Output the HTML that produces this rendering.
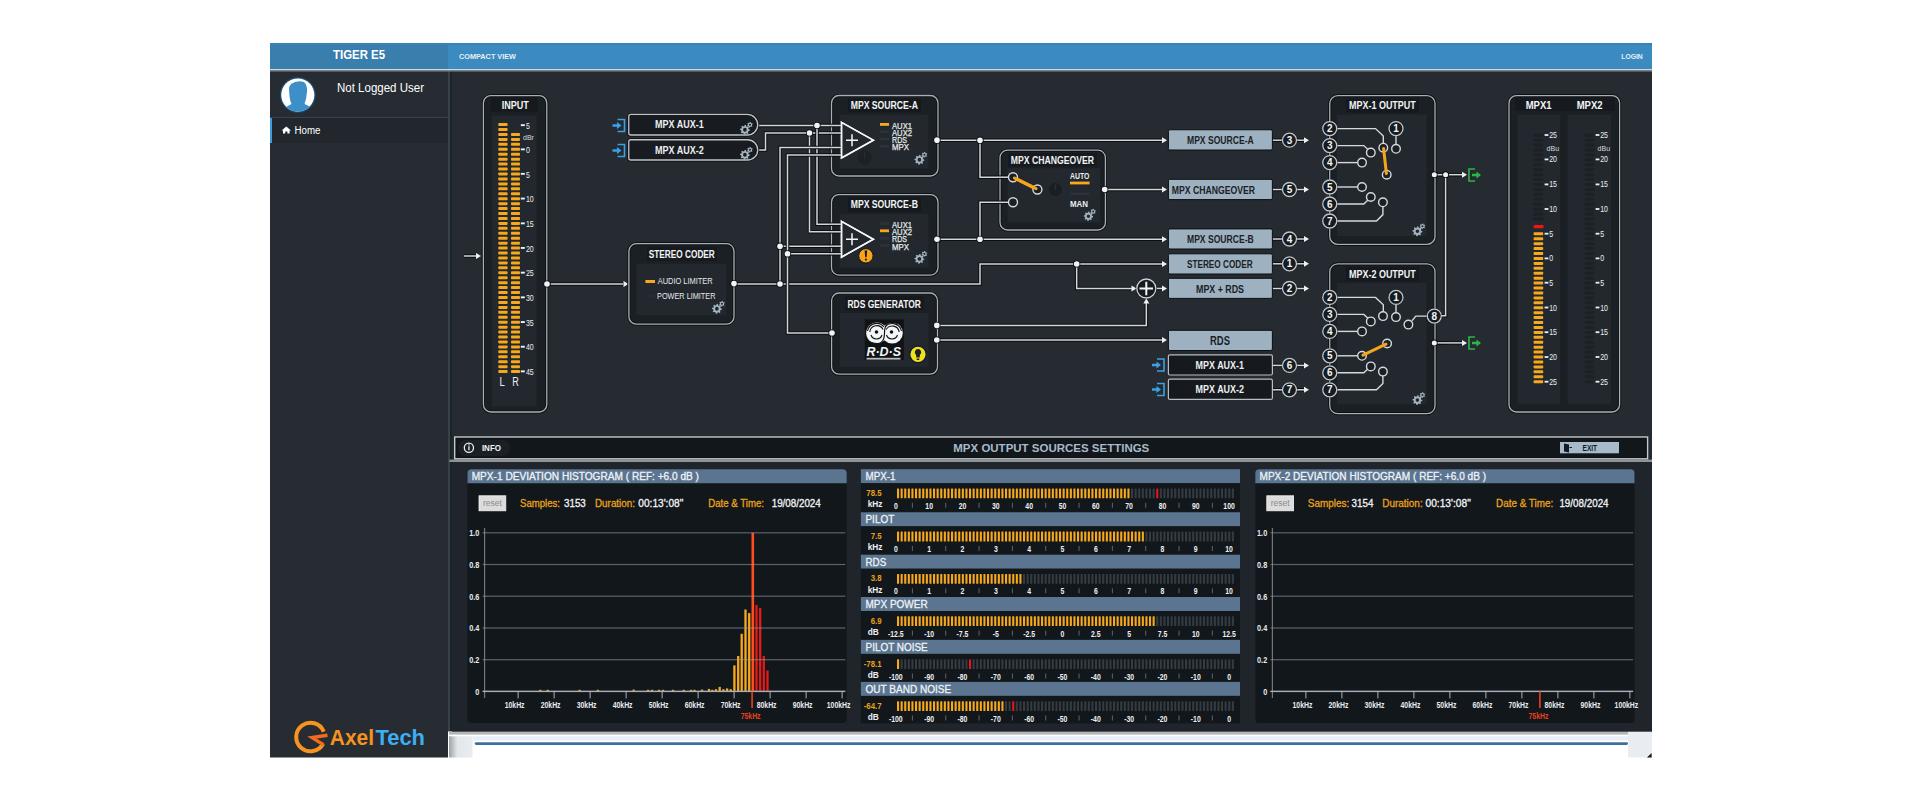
<!DOCTYPE html><html><head><meta charset="utf-8"><style>html,body{margin:0;padding:0;background:#fff;width:1920px;height:800px;overflow:hidden}svg{display:block;font-family:"Liberation Sans",sans-serif}</style></head><body>
<svg width="1920" height="800" viewBox="0 0 1920 800">
<rect x="0" y="0" width="1920" height="800" fill="#ffffff"/>
<rect x="270" y="43" width="1382" height="26" fill="#3b8ac0"/>
<rect x="270" y="43" width="178" height="26" fill="#3a7eae"/>
<rect x="270" y="43" width="1382" height="2" fill="#3583bb"/>
<rect x="270" y="69" width="1382" height="1.5" fill="#c9dbe8"/>
<rect x="270" y="70.5" width="1382" height="1" fill="#101418"/>
<text x="333" y="59.3" font-size="12" fill="#fff" font-weight="bold" textLength="52" lengthAdjust="spacingAndGlyphs">TIGER E5</text>
<text x="459" y="59" font-size="7" fill="#e6f0f7" font-weight="bold" textLength="57" lengthAdjust="spacingAndGlyphs">COMPACT VIEW</text>
<text x="1621.3" y="59.4" font-size="7" fill="#e6f0f7" font-weight="bold" textLength="21.4" lengthAdjust="spacingAndGlyphs">LOGIN</text>
<rect x="270" y="71.5" width="178" height="686" fill="#262c32"/>
<rect x="448" y="71.5" width="2" height="660" fill="#37434c"/>
<rect x="450" y="71.5" width="2" height="660" fill="#1d2227"/>
<circle cx="297.8" cy="95" r="17.8" fill="#1c4f78"/>
<circle cx="297.8" cy="95" r="16.6" fill="#ffffff"/>
<clipPath id="avc"><circle cx="297.8" cy="95" r="16.6"/></clipPath>
<g clip-path="url(#avc)"><path d="M291 84 Q297 80 304 82 Q307.5 85 307 92 L306 99 Q305 102 304.5 104 L311 107 Q313 110 313 114 L283 114 Q283 109 286 107 L291.5 104 Q290 101 289.6 97 L289 90 Q289 86 291 84 Z" fill="#3d8fc9"/></g>
<text x="337" y="91.6" font-size="13" fill="#ffffff" textLength="87" lengthAdjust="spacingAndGlyphs">Not Logged User</text>
<rect x="270" y="117" width="178" height="1" fill="#3c4248"/>
<rect x="270" y="118" width="178" height="25" fill="#22272d"/>
<rect x="270" y="118" width="2" height="25" fill="#3d9be0"/>
<path d="M286.3 126.5 L291 130.6 L289.6 130.6 L289.6 133.6 L287.4 133.6 L287.4 131.5 L285.2 131.5 L285.2 133.6 L283 133.6 L283 130.6 L281.6 130.6 Z" fill="#fff"/>
<text x="294.5" y="133.6" font-size="10" fill="#fff" textLength="26" lengthAdjust="spacingAndGlyphs">Home</text>
<path d="M323.76 731.64 A14.3 14.3 0 1 0 323.13 743.71" fill="none" stroke="#f7931e" stroke-width="4"/>
<path d="M327.5 735.2 L312 737.6 L323.5 744.8" fill="none" stroke="#f26a21" stroke-width="3.4" stroke-linejoin="miter"/>
<text x="329.8" y="745" font-size="22" fill="#f7931e" font-weight="bold" textLength="44.2" lengthAdjust="spacingAndGlyphs">Axel</text>
<text x="375.5" y="745" font-size="22" fill="#3eaef0" font-weight="bold" textLength="49.5" lengthAdjust="spacingAndGlyphs">Tech</text>
<rect x="452" y="71.5" width="1200" height="660" fill="#252b31"/>
<defs><linearGradient id="shd" x1="0" x2="1" y1="0" y2="0"><stop offset="0" stop-color="#9ea2a6"/><stop offset="0.35" stop-color="#e3e7eb"/><stop offset="1" stop-color="#e9edf1"/></linearGradient></defs>
<rect x="449" y="731.6" width="1203" height="3.2" fill="#b4b7ba"/>
<rect x="449" y="734.8" width="1203" height="1.5" fill="#ffffff"/>
<rect x="449" y="736.3" width="23.5" height="21.2" fill="url(#shd)"/>
<rect x="472.5" y="736.3" width="1155.5" height="4.2" fill="#e7eef4"/>
<rect x="474.7" y="742.2" width="1153.3" height="2.8" rx="1.4" fill="#3d6f9f"/>
<rect x="1628" y="731.6" width="24" height="25.9" fill="#e9edf1"/>
<path d="M1651.6 753 L1651.6 757.6 L1647 757.6 Z" fill="#151515"/>
<path d="M464 256 L477 256" fill="none" stroke="#0c0f12" stroke-width="3.5" stroke-linejoin="miter"/>
<path d="M464 256 L477 256" fill="none" stroke="#d3d7da" stroke-width="1.5" stroke-linejoin="miter"/>
<path d="M476 253 L481 256 L476 259 Z" fill="#eef0f2"/>
<path d="M547 284 L623 284" fill="none" stroke="#0c0f12" stroke-width="3.5" stroke-linejoin="miter"/>
<path d="M547 284 L623 284" fill="none" stroke="#d3d7da" stroke-width="1.5" stroke-linejoin="miter"/>
<path d="M623.5 281 L628.5 284 L623.5 287 Z" fill="#eef0f2"/>
<path d="M758 125.5 L842 125.5" fill="none" stroke="#0c0f12" stroke-width="3.5" stroke-linejoin="miter"/>
<path d="M758 125.5 L842 125.5" fill="none" stroke="#d3d7da" stroke-width="1.5" stroke-linejoin="miter"/>
<path d="M758 150 L765.5 150 L765.5 133 L842 133" fill="none" stroke="#0c0f12" stroke-width="3.5" stroke-linejoin="miter"/>
<path d="M758 150 L765.5 150 L765.5 133 L842 133" fill="none" stroke="#d3d7da" stroke-width="1.5" stroke-linejoin="miter"/>
<path d="M817 125.5 L817 224.2 L842 224.2" fill="none" stroke="#0c0f12" stroke-width="3.5" stroke-linejoin="miter"/>
<path d="M817 125.5 L817 224.2 L842 224.2" fill="none" stroke="#d3d7da" stroke-width="1.5" stroke-linejoin="miter"/>
<path d="M809.5 133 L809.5 231.8 L842 231.8" fill="none" stroke="#0c0f12" stroke-width="3.5" stroke-linejoin="miter"/>
<path d="M809.5 133 L809.5 231.8 L842 231.8" fill="none" stroke="#d3d7da" stroke-width="1.5" stroke-linejoin="miter"/>
<path d="M734 284 L980 284 L980 264 L1162 264" fill="none" stroke="#0c0f12" stroke-width="3.5" stroke-linejoin="miter"/>
<path d="M734 284 L980 284 L980 264 L1162 264" fill="none" stroke="#d3d7da" stroke-width="1.5" stroke-linejoin="miter"/>
<path d="M1162 261 L1167 264 L1162 267 Z" fill="#eef0f2"/>
<path d="M780 284 L780 147.5 L842 147.5" fill="none" stroke="#0c0f12" stroke-width="3.5" stroke-linejoin="miter"/>
<path d="M780 284 L780 147.5 L842 147.5" fill="none" stroke="#d3d7da" stroke-width="1.5" stroke-linejoin="miter"/>
<path d="M780 246.2 L842 246.2" fill="none" stroke="#0c0f12" stroke-width="3.5" stroke-linejoin="miter"/>
<path d="M780 246.2 L842 246.2" fill="none" stroke="#d3d7da" stroke-width="1.5" stroke-linejoin="miter"/>
<path d="M832 333 L787.5 333 L787.5 155 L842 155" fill="none" stroke="#0c0f12" stroke-width="3.5" stroke-linejoin="miter"/>
<path d="M832 333 L787.5 333 L787.5 155 L842 155" fill="none" stroke="#d3d7da" stroke-width="1.5" stroke-linejoin="miter"/>
<path d="M787.5 253.8 L842 253.8" fill="none" stroke="#0c0f12" stroke-width="3.5" stroke-linejoin="miter"/>
<path d="M787.5 253.8 L842 253.8" fill="none" stroke="#d3d7da" stroke-width="1.5" stroke-linejoin="miter"/>
<path d="M937 140.2 L1162 140.2" fill="none" stroke="#0c0f12" stroke-width="3.5" stroke-linejoin="miter"/>
<path d="M937 140.2 L1162 140.2" fill="none" stroke="#d3d7da" stroke-width="1.5" stroke-linejoin="miter"/>
<path d="M1162 137.2 L1167 140.2 L1162 143.2 Z" fill="#eef0f2"/>
<path d="M980 140.2 L980 177.2 L1009 177.2" fill="none" stroke="#0c0f12" stroke-width="3.5" stroke-linejoin="miter"/>
<path d="M980 140.2 L980 177.2 L1009 177.2" fill="none" stroke="#d3d7da" stroke-width="1.5" stroke-linejoin="miter"/>
<path d="M937 239.3 L1162 239.3" fill="none" stroke="#0c0f12" stroke-width="3.5" stroke-linejoin="miter"/>
<path d="M937 239.3 L1162 239.3" fill="none" stroke="#d3d7da" stroke-width="1.5" stroke-linejoin="miter"/>
<path d="M1162 236.3 L1167 239.3 L1162 242.3 Z" fill="#eef0f2"/>
<path d="M980 239.3 L980 202.3 L1009 202.3" fill="none" stroke="#0c0f12" stroke-width="3.5" stroke-linejoin="miter"/>
<path d="M980 239.3 L980 202.3 L1009 202.3" fill="none" stroke="#d3d7da" stroke-width="1.5" stroke-linejoin="miter"/>
<path d="M1104.7 189.5 L1162 189.5" fill="none" stroke="#0c0f12" stroke-width="3.5" stroke-linejoin="miter"/>
<path d="M1104.7 189.5 L1162 189.5" fill="none" stroke="#d3d7da" stroke-width="1.5" stroke-linejoin="miter"/>
<path d="M1162 186.5 L1167 189.5 L1162 192.5 Z" fill="#eef0f2"/>
<path d="M1076.7 264 L1076.7 288.4 L1132 288.4" fill="none" stroke="#0c0f12" stroke-width="3.5" stroke-linejoin="miter"/>
<path d="M1076.7 264 L1076.7 288.4 L1132 288.4" fill="none" stroke="#d3d7da" stroke-width="1.5" stroke-linejoin="miter"/>
<path d="M1131.5 285.4 L1136.5 288.4 L1131.5 291.4 Z" fill="#eef0f2"/>
<path d="M1156 288.4 L1162 288.4" fill="none" stroke="#0c0f12" stroke-width="3.5" stroke-linejoin="miter"/>
<path d="M1156 288.4 L1162 288.4" fill="none" stroke="#d3d7da" stroke-width="1.5" stroke-linejoin="miter"/>
<path d="M1162 285.4 L1167 288.4 L1162 291.4 Z" fill="#eef0f2"/>
<path d="M936.8 325.4 L1146.3 325.4 L1146.3 303" fill="none" stroke="#0c0f12" stroke-width="3.5" stroke-linejoin="miter"/>
<path d="M936.8 325.4 L1146.3 325.4 L1146.3 303" fill="none" stroke="#d3d7da" stroke-width="1.5" stroke-linejoin="miter"/>
<path d="M1143.3 303.6 L1146.3 298.6 L1149.3 303.6 Z" fill="#eef0f2"/>
<path d="M936.8 340 L1162 340" fill="none" stroke="#0c0f12" stroke-width="3.5" stroke-linejoin="miter"/>
<path d="M936.8 340 L1162 340" fill="none" stroke="#d3d7da" stroke-width="1.5" stroke-linejoin="miter"/>
<path d="M1162 337 L1167 340 L1162 343 Z" fill="#eef0f2"/>
<path d="M1272.4 140.2 L1304 140.2" fill="none" stroke="#0c0f12" stroke-width="3.5" stroke-linejoin="miter"/>
<path d="M1272.4 140.2 L1304 140.2" fill="none" stroke="#d3d7da" stroke-width="1.5" stroke-linejoin="miter"/>
<path d="M1304 137.2 L1309 140.2 L1304 143.2 Z" fill="#eef0f2"/>
<path d="M1272.4 189.5 L1304 189.5" fill="none" stroke="#0c0f12" stroke-width="3.5" stroke-linejoin="miter"/>
<path d="M1272.4 189.5 L1304 189.5" fill="none" stroke="#d3d7da" stroke-width="1.5" stroke-linejoin="miter"/>
<path d="M1304 186.5 L1309 189.5 L1304 192.5 Z" fill="#eef0f2"/>
<path d="M1272.4 239 L1304 239" fill="none" stroke="#0c0f12" stroke-width="3.5" stroke-linejoin="miter"/>
<path d="M1272.4 239 L1304 239" fill="none" stroke="#d3d7da" stroke-width="1.5" stroke-linejoin="miter"/>
<path d="M1304 236 L1309 239 L1304 242 Z" fill="#eef0f2"/>
<path d="M1272.4 263.8 L1304 263.8" fill="none" stroke="#0c0f12" stroke-width="3.5" stroke-linejoin="miter"/>
<path d="M1272.4 263.8 L1304 263.8" fill="none" stroke="#d3d7da" stroke-width="1.5" stroke-linejoin="miter"/>
<path d="M1304 260.8 L1309 263.8 L1304 266.8 Z" fill="#eef0f2"/>
<path d="M1272.4 288.5 L1304 288.5" fill="none" stroke="#0c0f12" stroke-width="3.5" stroke-linejoin="miter"/>
<path d="M1272.4 288.5 L1304 288.5" fill="none" stroke="#d3d7da" stroke-width="1.5" stroke-linejoin="miter"/>
<path d="M1304 285.5 L1309 288.5 L1304 291.5 Z" fill="#eef0f2"/>
<path d="M1272.4 365.4 L1304 365.4" fill="none" stroke="#0c0f12" stroke-width="3.5" stroke-linejoin="miter"/>
<path d="M1272.4 365.4 L1304 365.4" fill="none" stroke="#d3d7da" stroke-width="1.5" stroke-linejoin="miter"/>
<path d="M1304 362.4 L1309 365.4 L1304 368.4 Z" fill="#eef0f2"/>
<path d="M1272.4 389.8 L1304 389.8" fill="none" stroke="#0c0f12" stroke-width="3.5" stroke-linejoin="miter"/>
<path d="M1272.4 389.8 L1304 389.8" fill="none" stroke="#d3d7da" stroke-width="1.5" stroke-linejoin="miter"/>
<path d="M1304 386.8 L1309 389.8 L1304 392.8 Z" fill="#eef0f2"/>
<path d="M1434.3 174.7 L1462 174.7" fill="none" stroke="#0c0f12" stroke-width="3.5" stroke-linejoin="miter"/>
<path d="M1434.3 174.7 L1462 174.7" fill="none" stroke="#d3d7da" stroke-width="1.5" stroke-linejoin="miter"/>
<path d="M1462 171.7 L1467 174.7 L1462 177.7 Z" fill="#eef0f2"/>
<path d="M1445.6 174.7 L1445.6 315.8 L1441 315.8" fill="none" stroke="#0c0f12" stroke-width="3.5" stroke-linejoin="miter"/>
<path d="M1445.6 174.7 L1445.6 315.8 L1441 315.8" fill="none" stroke="#d3d7da" stroke-width="1.5" stroke-linejoin="miter"/>
<path d="M1434.3 342.9 L1462 342.9" fill="none" stroke="#0c0f12" stroke-width="3.5" stroke-linejoin="miter"/>
<path d="M1434.3 342.9 L1462 342.9" fill="none" stroke="#d3d7da" stroke-width="1.5" stroke-linejoin="miter"/>
<path d="M1462 339.9 L1467 342.9 L1462 345.9 Z" fill="#eef0f2"/>
<circle cx="817" cy="125.5" r="3.5999999999999996" fill="#0c0f12"/><circle cx="817" cy="125.5" r="2.8" fill="#f2f4f5"/>
<circle cx="809.5" cy="133" r="3.5999999999999996" fill="#0c0f12"/><circle cx="809.5" cy="133" r="2.8" fill="#f2f4f5"/>
<circle cx="780" cy="284" r="3.5999999999999996" fill="#0c0f12"/><circle cx="780" cy="284" r="2.8" fill="#f2f4f5"/>
<circle cx="780" cy="246.2" r="3.5999999999999996" fill="#0c0f12"/><circle cx="780" cy="246.2" r="2.8" fill="#f2f4f5"/>
<circle cx="787.5" cy="253.8" r="3.5999999999999996" fill="#0c0f12"/><circle cx="787.5" cy="253.8" r="2.8" fill="#f2f4f5"/>
<circle cx="980" cy="140.2" r="3.5999999999999996" fill="#0c0f12"/><circle cx="980" cy="140.2" r="2.8" fill="#f2f4f5"/>
<circle cx="980" cy="239.3" r="3.5999999999999996" fill="#0c0f12"/><circle cx="980" cy="239.3" r="2.8" fill="#f2f4f5"/>
<circle cx="1076.7" cy="264" r="3.5999999999999996" fill="#0c0f12"/><circle cx="1076.7" cy="264" r="2.8" fill="#f2f4f5"/>
<circle cx="547" cy="284" r="3.5999999999999996" fill="#0c0f12"/><circle cx="547" cy="284" r="2.8" fill="#f2f4f5"/>
<circle cx="1434.3" cy="174.7" r="3.3" fill="#0c0f12"/><circle cx="1434.3" cy="174.7" r="2.5" fill="#f2f4f5"/>
<circle cx="1445.6" cy="174.7" r="3.3" fill="#0c0f12"/><circle cx="1445.6" cy="174.7" r="2.5" fill="#f2f4f5"/>
<circle cx="1434.3" cy="342.9" r="3.3" fill="#0c0f12"/><circle cx="1434.3" cy="342.9" r="2.5" fill="#f2f4f5"/>
<rect x="483.4" y="95.6" width="63.39999999999998" height="316.4" rx="7.5" fill="#1b2025" stroke="#0e1114" stroke-width="3.2"/>
<rect x="491" y="97" width="47" height="14.6" fill="#161a1e"/>
<rect x="491.9" y="115.4" width="44.6" height="291.1" fill="#22282d"/>
<rect x="483.4" y="95.6" width="63.39999999999998" height="316.4" rx="7.5" fill="none" stroke="#a9afb4" stroke-width="1.3"/>
<text x="501.7" y="109" font-size="10" fill="#f2f4f5" font-weight="bold" textLength="27.2" lengthAdjust="spacingAndGlyphs">INPUT</text>
<rect x="498.3" y="370.1" width="9.3" height="3" fill="#f7a81c" rx="0.8"/>
<rect x="498.3" y="365.16" width="9.3" height="3" fill="#f7a81c" rx="0.8"/>
<rect x="498.3" y="360.22" width="9.3" height="3" fill="#f7a81c" rx="0.8"/>
<rect x="498.3" y="355.28" width="9.3" height="3" fill="#f7a81c" rx="0.8"/>
<rect x="498.3" y="350.34" width="9.3" height="3" fill="#f7a81c" rx="0.8"/>
<rect x="498.3" y="345.4" width="9.3" height="3" fill="#f7a81c" rx="0.8"/>
<rect x="498.3" y="340.46" width="9.3" height="3" fill="#f7a81c" rx="0.8"/>
<rect x="498.3" y="335.52" width="9.3" height="3" fill="#f7a81c" rx="0.8"/>
<rect x="498.3" y="330.58" width="9.3" height="3" fill="#f7a81c" rx="0.8"/>
<rect x="498.3" y="325.64" width="9.3" height="3" fill="#f7a81c" rx="0.8"/>
<rect x="498.3" y="320.7" width="9.3" height="3" fill="#f7a81c" rx="0.8"/>
<rect x="498.3" y="315.76" width="9.3" height="3" fill="#f7a81c" rx="0.8"/>
<rect x="498.3" y="310.82" width="9.3" height="3" fill="#f7a81c" rx="0.8"/>
<rect x="498.3" y="305.88" width="9.3" height="3" fill="#f7a81c" rx="0.8"/>
<rect x="498.3" y="300.94" width="9.3" height="3" fill="#f7a81c" rx="0.8"/>
<rect x="498.3" y="296.0" width="9.3" height="3" fill="#f7a81c" rx="0.8"/>
<rect x="498.3" y="291.06" width="9.3" height="3" fill="#f7a81c" rx="0.8"/>
<rect x="498.3" y="286.12" width="9.3" height="3" fill="#f7a81c" rx="0.8"/>
<rect x="498.3" y="281.18" width="9.3" height="3" fill="#f7a81c" rx="0.8"/>
<rect x="498.3" y="276.24" width="9.3" height="3" fill="#f7a81c" rx="0.8"/>
<rect x="498.3" y="271.3" width="9.3" height="3" fill="#f7a81c" rx="0.8"/>
<rect x="498.3" y="266.36" width="9.3" height="3" fill="#f7a81c" rx="0.8"/>
<rect x="498.3" y="261.42" width="9.3" height="3" fill="#f7a81c" rx="0.8"/>
<rect x="498.3" y="256.48" width="9.3" height="3" fill="#f7a81c" rx="0.8"/>
<rect x="498.3" y="251.54" width="9.3" height="3" fill="#f7a81c" rx="0.8"/>
<rect x="498.3" y="246.6" width="9.3" height="3" fill="#f7a81c" rx="0.8"/>
<rect x="498.3" y="241.66" width="9.3" height="3" fill="#f7a81c" rx="0.8"/>
<rect x="498.3" y="236.72" width="9.3" height="3" fill="#f7a81c" rx="0.8"/>
<rect x="498.3" y="231.78" width="9.3" height="3" fill="#f7a81c" rx="0.8"/>
<rect x="498.3" y="226.84" width="9.3" height="3" fill="#f7a81c" rx="0.8"/>
<rect x="498.3" y="221.9" width="9.3" height="3" fill="#f7a81c" rx="0.8"/>
<rect x="498.3" y="216.96" width="9.3" height="3" fill="#f7a81c" rx="0.8"/>
<rect x="498.3" y="212.02" width="9.3" height="3" fill="#f7a81c" rx="0.8"/>
<rect x="498.3" y="207.08" width="9.3" height="3" fill="#f7a81c" rx="0.8"/>
<rect x="498.3" y="202.14" width="9.3" height="3" fill="#f7a81c" rx="0.8"/>
<rect x="498.3" y="197.2" width="9.3" height="3" fill="#f7a81c" rx="0.8"/>
<rect x="498.3" y="192.26" width="9.3" height="3" fill="#f7a81c" rx="0.8"/>
<rect x="498.3" y="187.32" width="9.3" height="3" fill="#f7a81c" rx="0.8"/>
<rect x="498.3" y="182.38" width="9.3" height="3" fill="#f7a81c" rx="0.8"/>
<rect x="498.3" y="177.44" width="9.3" height="3" fill="#f7a81c" rx="0.8"/>
<rect x="498.3" y="172.5" width="9.3" height="3" fill="#f7a81c" rx="0.8"/>
<rect x="498.3" y="167.56" width="9.3" height="3" fill="#f7a81c" rx="0.8"/>
<rect x="498.3" y="162.62" width="9.3" height="3" fill="#f7a81c" rx="0.8"/>
<rect x="498.3" y="157.68" width="9.3" height="3" fill="#f7a81c" rx="0.8"/>
<rect x="498.3" y="152.74" width="9.3" height="3" fill="#f7a81c" rx="0.8"/>
<rect x="498.3" y="147.8" width="9.3" height="3" fill="#f7a81c" rx="0.8"/>
<rect x="498.3" y="142.86" width="9.3" height="3" fill="#f7a81c" rx="0.8"/>
<rect x="498.3" y="137.92" width="9.3" height="3" fill="#f7a81c" rx="0.8"/>
<rect x="498.3" y="132.98" width="9.3" height="3" fill="#f7a81c" rx="0.8"/>
<rect x="498.3" y="128.04" width="9.3" height="3" fill="#f7a81c" rx="0.8"/>
<rect x="498.3" y="123.1" width="9.3" height="3" fill="#f7a81c" rx="0.8"/>
<rect x="511" y="370.1" width="9" height="3" fill="#f7a81c" rx="0.8"/>
<rect x="511" y="365.16" width="9" height="3" fill="#f7a81c" rx="0.8"/>
<rect x="511" y="360.22" width="9" height="3" fill="#f7a81c" rx="0.8"/>
<rect x="511" y="355.28" width="9" height="3" fill="#f7a81c" rx="0.8"/>
<rect x="511" y="350.34" width="9" height="3" fill="#f7a81c" rx="0.8"/>
<rect x="511" y="345.4" width="9" height="3" fill="#f7a81c" rx="0.8"/>
<rect x="511" y="340.46" width="9" height="3" fill="#f7a81c" rx="0.8"/>
<rect x="511" y="335.52" width="9" height="3" fill="#f7a81c" rx="0.8"/>
<rect x="511" y="330.58" width="9" height="3" fill="#f7a81c" rx="0.8"/>
<rect x="511" y="325.64" width="9" height="3" fill="#f7a81c" rx="0.8"/>
<rect x="511" y="320.7" width="9" height="3" fill="#f7a81c" rx="0.8"/>
<rect x="511" y="315.76" width="9" height="3" fill="#f7a81c" rx="0.8"/>
<rect x="511" y="310.82" width="9" height="3" fill="#f7a81c" rx="0.8"/>
<rect x="511" y="305.88" width="9" height="3" fill="#f7a81c" rx="0.8"/>
<rect x="511" y="300.94" width="9" height="3" fill="#f7a81c" rx="0.8"/>
<rect x="511" y="296.0" width="9" height="3" fill="#f7a81c" rx="0.8"/>
<rect x="511" y="291.06" width="9" height="3" fill="#f7a81c" rx="0.8"/>
<rect x="511" y="286.12" width="9" height="3" fill="#f7a81c" rx="0.8"/>
<rect x="511" y="281.18" width="9" height="3" fill="#f7a81c" rx="0.8"/>
<rect x="511" y="276.24" width="9" height="3" fill="#f7a81c" rx="0.8"/>
<rect x="511" y="271.3" width="9" height="3" fill="#f7a81c" rx="0.8"/>
<rect x="511" y="266.36" width="9" height="3" fill="#f7a81c" rx="0.8"/>
<rect x="511" y="261.42" width="9" height="3" fill="#f7a81c" rx="0.8"/>
<rect x="511" y="256.48" width="9" height="3" fill="#f7a81c" rx="0.8"/>
<rect x="511" y="251.54" width="9" height="3" fill="#f7a81c" rx="0.8"/>
<rect x="511" y="246.6" width="9" height="3" fill="#f7a81c" rx="0.8"/>
<rect x="511" y="241.66" width="9" height="3" fill="#f7a81c" rx="0.8"/>
<rect x="511" y="236.72" width="9" height="3" fill="#f7a81c" rx="0.8"/>
<rect x="511" y="231.78" width="9" height="3" fill="#f7a81c" rx="0.8"/>
<rect x="511" y="226.84" width="9" height="3" fill="#f7a81c" rx="0.8"/>
<rect x="511" y="221.9" width="9" height="3" fill="#f7a81c" rx="0.8"/>
<rect x="511" y="216.96" width="9" height="3" fill="#f7a81c" rx="0.8"/>
<rect x="511" y="212.02" width="9" height="3" fill="#f7a81c" rx="0.8"/>
<rect x="511" y="207.08" width="9" height="3" fill="#f7a81c" rx="0.8"/>
<rect x="511" y="202.14" width="9" height="3" fill="#f7a81c" rx="0.8"/>
<rect x="511" y="197.2" width="9" height="3" fill="#f7a81c" rx="0.8"/>
<rect x="511" y="192.26" width="9" height="3" fill="#f7a81c" rx="0.8"/>
<rect x="511" y="187.32" width="9" height="3" fill="#f7a81c" rx="0.8"/>
<rect x="511" y="182.38" width="9" height="3" fill="#f7a81c" rx="0.8"/>
<rect x="511" y="177.44" width="9" height="3" fill="#f7a81c" rx="0.8"/>
<rect x="511" y="172.5" width="9" height="3" fill="#f7a81c" rx="0.8"/>
<rect x="511" y="167.56" width="9" height="3" fill="#f7a81c" rx="0.8"/>
<rect x="511" y="162.62" width="9" height="3" fill="#f7a81c" rx="0.8"/>
<rect x="511" y="157.68" width="9" height="3" fill="#f7a81c" rx="0.8"/>
<rect x="511" y="152.74" width="9" height="3" fill="#f7a81c" rx="0.8"/>
<rect x="511" y="147.8" width="9" height="3" fill="#f7a81c" rx="0.8"/>
<rect x="511" y="142.86" width="9" height="3" fill="#f7a81c" rx="0.8"/>
<rect x="511" y="137.92" width="9" height="3" fill="#f7a81c" rx="0.8"/>
<rect x="511" y="132.98" width="9" height="3" fill="#f7a81c" rx="0.8"/>
<rect x="520.8" y="124.2" width="4" height="1.9" fill="#eef0f2"/>
<text x="525.9" y="128.8" font-size="8.2" fill="#eef0f2" textLength="3.9" lengthAdjust="spacingAndGlyphs">5</text>
<rect x="520.8" y="148.4" width="4" height="1.9" fill="#eef0f2"/>
<text x="525.9" y="153" font-size="8.2" fill="#eef0f2" textLength="3.9" lengthAdjust="spacingAndGlyphs">0</text>
<rect x="520.8" y="172.9" width="4" height="1.9" fill="#eef0f2"/>
<text x="525.9" y="177.5" font-size="8.2" fill="#eef0f2" textLength="3.9" lengthAdjust="spacingAndGlyphs">5</text>
<rect x="520.8" y="197.6" width="4" height="1.9" fill="#eef0f2"/>
<text x="525.9" y="202.2" font-size="8.2" fill="#eef0f2" textLength="7.8" lengthAdjust="spacingAndGlyphs">10</text>
<rect x="520.8" y="222.4" width="4" height="1.9" fill="#eef0f2"/>
<text x="525.9" y="227" font-size="8.2" fill="#eef0f2" textLength="7.8" lengthAdjust="spacingAndGlyphs">15</text>
<rect x="520.8" y="247.0" width="4" height="1.9" fill="#eef0f2"/>
<text x="525.9" y="251.6" font-size="8.2" fill="#eef0f2" textLength="7.8" lengthAdjust="spacingAndGlyphs">20</text>
<rect x="520.8" y="271.7" width="4" height="1.9" fill="#eef0f2"/>
<text x="525.9" y="276.3" font-size="8.2" fill="#eef0f2" textLength="7.8" lengthAdjust="spacingAndGlyphs">25</text>
<rect x="520.8" y="296.4" width="4" height="1.9" fill="#eef0f2"/>
<text x="525.9" y="301" font-size="8.2" fill="#eef0f2" textLength="7.8" lengthAdjust="spacingAndGlyphs">30</text>
<rect x="520.8" y="321.1" width="4" height="1.9" fill="#eef0f2"/>
<text x="525.9" y="325.7" font-size="8.2" fill="#eef0f2" textLength="7.8" lengthAdjust="spacingAndGlyphs">35</text>
<rect x="520.8" y="345.8" width="4" height="1.9" fill="#eef0f2"/>
<text x="525.9" y="350.4" font-size="8.2" fill="#eef0f2" textLength="7.8" lengthAdjust="spacingAndGlyphs">40</text>
<rect x="520.8" y="370.4" width="4" height="1.9" fill="#eef0f2"/>
<text x="525.9" y="375" font-size="8.2" fill="#eef0f2" textLength="7.8" lengthAdjust="spacingAndGlyphs">45</text>
<text x="523" y="140" font-size="7" fill="#d8dcdf">dBr</text>
<text x="499.6" y="385.6" font-size="12.5" fill="#eef0f2" textLength="5.3" lengthAdjust="spacingAndGlyphs">L</text>
<text x="512.3" y="385.6" font-size="12.5" fill="#eef0f2" textLength="6.6" lengthAdjust="spacingAndGlyphs">R</text>
<circle cx="547" cy="284" r="3.5999999999999996" fill="#0c0f12"/><circle cx="547" cy="284" r="2.8" fill="#f2f4f5"/>
<path d="M630.75 114.4 L747.45 114.4 A10.299999999999997 10.299999999999997 0 0 1 747.45 135 L630.75 135 Q628.75 135 628.75 133 L628.75 116.4 Q628.75 114.4 630.75 114.4 Z" fill="#181c20" stroke="#0c0f12" stroke-width="3"/>
<path d="M630.75 114.4 L747.45 114.4 A10.299999999999997 10.299999999999997 0 0 1 747.45 135 L630.75 135 Q628.75 135 628.75 133 L628.75 116.4 Q628.75 114.4 630.75 114.4 Z" fill="#181c20" stroke="#bfc4c8" stroke-width="1.3"/>
<text x="655" y="128.4" font-size="10" fill="#eceff1" font-weight="bold" textLength="48.75" lengthAdjust="spacingAndGlyphs">MPX AUX-1</text>
<path d="M630.75 139.75 L747.625 139.75 A10.125 10.125 0 0 1 747.625 160 L630.75 160 Q628.75 160 628.75 158 L628.75 141.75 Q628.75 139.75 630.75 139.75 Z" fill="#181c20" stroke="#0c0f12" stroke-width="3"/>
<path d="M630.75 139.75 L747.625 139.75 A10.125 10.125 0 0 1 747.625 160 L630.75 160 Q628.75 160 628.75 158 L628.75 141.75 Q628.75 139.75 630.75 139.75 Z" fill="#181c20" stroke="#bfc4c8" stroke-width="1.3"/>
<text x="655" y="153.57" font-size="10" fill="#eceff1" font-weight="bold" textLength="48.75" lengthAdjust="spacingAndGlyphs">MPX AUX-2</text>
<path d="M744.90 124.86 L745.86 124.95 L746.32 126.38 L746.96 126.72 L748.39 126.31 L749.01 127.06 L748.32 128.38 L748.53 129.08 L749.84 129.80 L749.75 130.76 L748.32 131.22 L747.98 131.86 L748.39 133.29 L747.64 133.91 L746.32 133.22 L745.62 133.43 L744.90 134.74 L743.94 134.65 L743.48 133.22 L742.84 132.88 L741.41 133.29 L740.79 132.54 L741.48 131.22 L741.27 130.52 L739.96 129.80 L740.05 128.84 L741.48 128.38 L741.82 127.74 L741.41 126.31 L742.16 125.69 L743.48 126.38 L744.18 126.17 Z M746.70 129.80 A1.805 1.805 0 1 0 743.10 129.80 A1.805 1.805 0 1 0 746.70 129.80 Z" fill="#a3b3bf" fill-rule="evenodd"/>
<path d="M749.93 121.92 L750.67 122.01 L750.98 122.96 L751.41 123.29 L752.40 123.34 L752.69 124.03 L752.02 124.77 L751.95 125.31 L752.40 126.19 L751.95 126.78 L750.98 126.57 L750.48 126.78 L749.93 127.62 L749.20 127.52 L748.89 126.57 L748.46 126.24 L747.47 126.19 L747.18 125.50 L747.84 124.77 L747.92 124.22 L747.47 123.34 L747.92 122.75 L748.89 122.96 L749.39 122.75 Z M750.98 124.77 A1.045 1.045 0 1 0 748.89 124.77 A1.045 1.045 0 1 0 750.98 124.77 Z" fill="#a3b3bf" fill-rule="evenodd"/>
<path d="M744.90 149.86 L745.86 149.95 L746.32 151.38 L746.96 151.72 L748.39 151.31 L749.01 152.06 L748.32 153.38 L748.53 154.08 L749.84 154.80 L749.75 155.76 L748.32 156.22 L747.98 156.86 L748.39 158.29 L747.64 158.91 L746.32 158.22 L745.62 158.43 L744.90 159.74 L743.94 159.65 L743.48 158.22 L742.84 157.88 L741.41 158.29 L740.79 157.54 L741.48 156.22 L741.27 155.52 L739.96 154.80 L740.05 153.84 L741.48 153.38 L741.82 152.74 L741.41 151.31 L742.16 150.69 L743.48 151.38 L744.18 151.17 Z M746.70 154.80 A1.805 1.805 0 1 0 743.10 154.80 A1.805 1.805 0 1 0 746.70 154.80 Z" fill="#a3b3bf" fill-rule="evenodd"/>
<path d="M749.93 146.92 L750.67 147.01 L750.98 147.96 L751.41 148.29 L752.40 148.34 L752.69 149.03 L752.02 149.77 L751.95 150.31 L752.40 151.19 L751.95 151.78 L750.98 151.57 L750.48 151.78 L749.93 152.62 L749.20 152.52 L748.89 151.57 L748.46 151.24 L747.47 151.19 L747.18 150.50 L747.84 149.77 L747.92 149.22 L747.47 148.34 L747.92 147.75 L748.89 147.96 L749.39 147.75 Z M750.98 149.77 A1.045 1.045 0 1 0 748.89 149.77 A1.045 1.045 0 1 0 750.98 149.77 Z" fill="#a3b3bf" fill-rule="evenodd"/>
<g fill="none" stroke="#3aa0e8" stroke-width="1.6"><path d="M617.5 119.5 L624.5 119.5 L624.5 131.5 L617.5 131.5"/></g>
<path d="M612.5 124.3 L617.0 124.3 L617.0 122.0 L621.5 125.5 L617.0 129.0 L617.0 126.7 L612.5 126.7 Z" fill="#3aa0e8"/>
<g fill="none" stroke="#3aa0e8" stroke-width="1.6"><path d="M617.5 144.5 L624.5 144.5 L624.5 156.5 L617.5 156.5"/></g>
<path d="M612.5 149.3 L617.0 149.3 L617.0 147.0 L621.5 150.5 L617.0 154.0 L617.0 151.7 L612.5 151.7 Z" fill="#3aa0e8"/>
<rect x="831.5" y="95.5" width="106.5" height="80.5" rx="7.5" fill="#1b2025" stroke="#0e1114" stroke-width="3.2"/>
<rect x="848" y="98.5" width="73" height="14.0" fill="#161a1e"/>
<rect x="839.7" y="114.8" width="88.7" height="53.6" fill="#22282d"/>
<rect x="831.5" y="95.5" width="106.5" height="80.5" rx="7.5" fill="none" stroke="#a9afb4" stroke-width="1.3"/>
<text x="850.7" y="109.3" font-size="10" fill="#f2f4f5" font-weight="bold" textLength="67.3" lengthAdjust="spacingAndGlyphs">MPX SOURCE-A</text>
<path d="M841.5 122.3 L873.4 140.15 L841.5 158.0 Z" fill="#22282d" stroke="#f4f6f7" stroke-width="1.5"/>
<path d="M846 140.15 L858 140.15 M852 134.15 L852 146.15" stroke="#f4f6f7" stroke-width="1.5"/>
<rect x="880" y="123.0" width="9" height="2.8" fill="#f7a81c"/>
<text x="892" y="128.5" font-size="8.6" fill="#e6e9eb" textLength="20" lengthAdjust="spacingAndGlyphs" stroke="#e6e9eb" stroke-width="0.25">AUX1</text>
<rect x="880" y="130.3" width="9" height="2.8" fill="#2c3238"/>
<text x="892" y="135.8" font-size="8.6" fill="#e6e9eb" textLength="20" lengthAdjust="spacingAndGlyphs" stroke="#e6e9eb" stroke-width="0.25">AUX2</text>
<rect x="880" y="137.6" width="9" height="2.8" fill="#2c3238"/>
<text x="892" y="143.1" font-size="8.6" fill="#e6e9eb" textLength="15" lengthAdjust="spacingAndGlyphs" stroke="#e6e9eb" stroke-width="0.25">RDS</text>
<rect x="880" y="144.9" width="9" height="2.8" fill="#2c3238"/>
<text x="892" y="150.4" font-size="8.6" fill="#e6e9eb" textLength="17" lengthAdjust="spacingAndGlyphs" stroke="#e6e9eb" stroke-width="0.25">MPX</text>
<circle cx="864.5" cy="157.5" r="7" fill="#1c2125"/>
<path d="M863.8 152.5 L865.2 152.5 L864.9 158.5 L864.1 158.5 Z" fill="#2a2f34"/>
<path d="M919.40 154.86 L920.36 154.95 L920.82 156.38 L921.46 156.72 L922.89 156.31 L923.51 157.06 L922.82 158.38 L923.03 159.08 L924.34 159.80 L924.25 160.76 L922.82 161.22 L922.48 161.86 L922.89 163.29 L922.14 163.91 L920.82 163.22 L920.12 163.43 L919.40 164.74 L918.44 164.65 L917.98 163.22 L917.34 162.88 L915.91 163.29 L915.29 162.54 L915.98 161.22 L915.77 160.52 L914.46 159.80 L914.55 158.84 L915.98 158.38 L916.32 157.74 L915.91 156.31 L916.66 155.69 L917.98 156.38 L918.68 156.17 Z M921.20 159.80 A1.805 1.805 0 1 0 917.60 159.80 A1.805 1.805 0 1 0 921.20 159.80 Z" fill="#a3b3bf" fill-rule="evenodd"/>
<path d="M924.43 151.92 L925.17 152.01 L925.48 152.96 L925.91 153.29 L926.90 153.34 L927.19 154.03 L926.52 154.77 L926.45 155.31 L926.90 156.19 L926.45 156.78 L925.48 156.57 L924.98 156.78 L924.43 157.62 L923.70 157.52 L923.39 156.57 L922.96 156.24 L921.97 156.19 L921.68 155.50 L922.34 154.77 L922.42 154.22 L921.97 153.34 L922.42 152.75 L923.39 152.96 L923.89 152.75 Z M925.48 154.77 A1.045 1.045 0 1 0 923.39 154.77 A1.045 1.045 0 1 0 925.48 154.77 Z" fill="#a3b3bf" fill-rule="evenodd"/>
<circle cx="937" cy="140.15" r="3.5999999999999996" fill="#0c0f12"/><circle cx="937" cy="140.15" r="2.8" fill="#f2f4f5"/>
<rect x="831.5" y="194.6" width="106.5" height="80.50000000000003" rx="7.5" fill="#1b2025" stroke="#0e1114" stroke-width="3.2"/>
<rect x="848" y="197.6" width="73" height="14.0" fill="#161a1e"/>
<rect x="839.7" y="213.9" width="88.7" height="53.6" fill="#22282d"/>
<rect x="831.5" y="194.6" width="106.5" height="80.50000000000003" rx="7.5" fill="none" stroke="#a9afb4" stroke-width="1.3"/>
<text x="850.7" y="208.4" font-size="10" fill="#f2f4f5" font-weight="bold" textLength="67.3" lengthAdjust="spacingAndGlyphs">MPX SOURCE-B</text>
<path d="M841.5 221.4 L873.4 239.25 L841.5 257.1 Z" fill="#22282d" stroke="#f4f6f7" stroke-width="1.5"/>
<path d="M846 239.25 L858 239.25 M852 233.25 L852 245.25" stroke="#f4f6f7" stroke-width="1.5"/>
<rect x="880" y="222.1" width="9" height="2.8" fill="#2c3238"/>
<text x="892" y="227.6" font-size="8.6" fill="#e6e9eb" textLength="20" lengthAdjust="spacingAndGlyphs" stroke="#e6e9eb" stroke-width="0.25">AUX1</text>
<rect x="880" y="229.4" width="9" height="2.8" fill="#f7a81c"/>
<text x="892" y="234.9" font-size="8.6" fill="#e6e9eb" textLength="20" lengthAdjust="spacingAndGlyphs" stroke="#e6e9eb" stroke-width="0.25">AUX2</text>
<rect x="880" y="236.7" width="9" height="2.8" fill="#2c3238"/>
<text x="892" y="242.2" font-size="8.6" fill="#e6e9eb" textLength="15" lengthAdjust="spacingAndGlyphs" stroke="#e6e9eb" stroke-width="0.25">RDS</text>
<rect x="880" y="244.0" width="9" height="2.8" fill="#2c3238"/>
<text x="892" y="249.5" font-size="8.6" fill="#e6e9eb" textLength="17" lengthAdjust="spacingAndGlyphs" stroke="#e6e9eb" stroke-width="0.25">MPX</text>
<circle cx="865.9" cy="255.8" r="7.2" fill="#f5a51c" stroke="#141414" stroke-width="1"/>
<path d="M864.6 250.39999999999998 L867.2 250.39999999999998 L866.6 257.2 L865.2 257.2 Z" fill="#1a1a1a"/><circle cx="865.9" cy="259.6" r="1.1" fill="#1a1a1a"/>
<path d="M919.40 253.96 L920.36 254.05 L920.82 255.48 L921.46 255.82 L922.89 255.41 L923.51 256.16 L922.82 257.48 L923.03 258.18 L924.34 258.90 L924.25 259.86 L922.82 260.32 L922.48 260.96 L922.89 262.39 L922.14 263.01 L920.82 262.32 L920.12 262.53 L919.40 263.84 L918.44 263.75 L917.98 262.32 L917.34 261.98 L915.91 262.39 L915.29 261.64 L915.98 260.32 L915.77 259.62 L914.46 258.90 L914.55 257.94 L915.98 257.48 L916.32 256.84 L915.91 255.41 L916.66 254.79 L917.98 255.48 L918.68 255.27 Z M921.20 258.90 A1.805 1.805 0 1 0 917.60 258.90 A1.805 1.805 0 1 0 921.20 258.90 Z" fill="#a3b3bf" fill-rule="evenodd"/>
<path d="M924.43 251.02 L925.17 251.11 L925.48 252.06 L925.91 252.39 L926.90 252.44 L927.19 253.13 L926.52 253.87 L926.45 254.41 L926.90 255.29 L926.45 255.88 L925.48 255.67 L924.98 255.88 L924.43 256.72 L923.70 256.62 L923.39 255.67 L922.96 255.34 L921.97 255.29 L921.68 254.60 L922.34 253.87 L922.42 253.32 L921.97 252.44 L922.42 251.85 L923.39 252.06 L923.89 251.85 Z M925.48 253.87 A1.045 1.045 0 1 0 923.39 253.87 A1.045 1.045 0 1 0 925.48 253.87 Z" fill="#a3b3bf" fill-rule="evenodd"/>
<circle cx="937" cy="239.25" r="3.5999999999999996" fill="#0c0f12"/><circle cx="937" cy="239.25" r="2.8" fill="#f2f4f5"/>
<path d="M830 125.5 L842 125.5" stroke="#0c0f12" stroke-width="3.5"/><path d="M830 125.5 L842 125.5" stroke="#d3d7da" stroke-width="1.5"/>
<path d="M830 133 L842 133" stroke="#0c0f12" stroke-width="3.5"/><path d="M830 133 L842 133" stroke="#d3d7da" stroke-width="1.5"/>
<path d="M830 147.5 L842 147.5" stroke="#0c0f12" stroke-width="3.5"/><path d="M830 147.5 L842 147.5" stroke="#d3d7da" stroke-width="1.5"/>
<path d="M830 155 L842 155" stroke="#0c0f12" stroke-width="3.5"/><path d="M830 155 L842 155" stroke="#d3d7da" stroke-width="1.5"/>
<path d="M830 224.2 L842 224.2" stroke="#0c0f12" stroke-width="3.5"/><path d="M830 224.2 L842 224.2" stroke="#d3d7da" stroke-width="1.5"/>
<path d="M830 231.8 L842 231.8" stroke="#0c0f12" stroke-width="3.5"/><path d="M830 231.8 L842 231.8" stroke="#d3d7da" stroke-width="1.5"/>
<path d="M830 246.2 L842 246.2" stroke="#0c0f12" stroke-width="3.5"/><path d="M830 246.2 L842 246.2" stroke="#d3d7da" stroke-width="1.5"/>
<path d="M830 253.8 L842 253.8" stroke="#0c0f12" stroke-width="3.5"/><path d="M830 253.8 L842 253.8" stroke="#d3d7da" stroke-width="1.5"/>
<path d="M841.5 122.3 L873.4 140.15 L841.5 158.0 Z" fill="none" stroke="#f4f6f7" stroke-width="1.5"/>
<path d="M841.5 221.4 L873.4 239.25 L841.5 257.1 Z" fill="none" stroke="#f4f6f7" stroke-width="1.5"/>
<rect x="628.9" y="243.7" width="105.10000000000002" height="80.5" rx="7.5" fill="#1b2025" stroke="#0e1114" stroke-width="3.2"/>
<rect x="647" y="247" width="70" height="14" fill="#161a1e"/>
<rect x="636.4" y="263.7" width="89.6" height="51.5" fill="#22282d"/>
<rect x="628.9" y="243.7" width="105.10000000000002" height="80.5" rx="7.5" fill="none" stroke="#a9afb4" stroke-width="1.3"/>
<text x="648.8" y="257.5" font-size="10" fill="#f2f4f5" font-weight="bold" textLength="66" lengthAdjust="spacingAndGlyphs">STEREO CODER</text>
<rect x="645.4" y="280" width="9.6" height="3" fill="#f7a81c"/>
<rect x="645.4" y="294.5" width="9.6" height="3" fill="#262c31"/>
<text x="657.7" y="284.3" font-size="8.4" fill="#e6e9eb" textLength="55" lengthAdjust="spacingAndGlyphs">AUDIO LIMITER</text>
<text x="657" y="298.7" font-size="8.4" fill="#e6e9eb" textLength="58.5" lengthAdjust="spacingAndGlyphs">POWER LIMITER</text>
<path d="M716.90 303.86 L717.86 303.95 L718.32 305.38 L718.96 305.72 L720.39 305.31 L721.01 306.06 L720.32 307.38 L720.53 308.08 L721.84 308.80 L721.75 309.76 L720.32 310.22 L719.98 310.86 L720.39 312.29 L719.64 312.91 L718.32 312.22 L717.62 312.43 L716.90 313.74 L715.94 313.65 L715.48 312.22 L714.84 311.88 L713.41 312.29 L712.79 311.54 L713.48 310.22 L713.27 309.52 L711.96 308.80 L712.05 307.84 L713.48 307.38 L713.82 306.74 L713.41 305.31 L714.16 304.69 L715.48 305.38 L716.18 305.17 Z M718.70 308.80 A1.805 1.805 0 1 0 715.10 308.80 A1.805 1.805 0 1 0 718.70 308.80 Z" fill="#a3b3bf" fill-rule="evenodd"/>
<path d="M721.93 300.91 L722.67 301.01 L722.98 301.96 L723.41 302.29 L724.40 302.34 L724.69 303.03 L724.02 303.76 L723.95 304.31 L724.40 305.19 L723.95 305.78 L722.98 305.57 L722.48 305.78 L721.93 306.62 L721.20 306.52 L720.89 305.57 L720.46 305.24 L719.47 305.19 L719.18 304.50 L719.84 303.76 L719.92 303.22 L719.47 302.34 L719.92 301.75 L720.89 301.96 L721.39 301.75 Z M722.98 303.76 A1.045 1.045 0 1 0 720.89 303.76 A1.045 1.045 0 1 0 722.98 303.76 Z" fill="#a3b3bf" fill-rule="evenodd"/>
<circle cx="734" cy="283.6" r="3.5999999999999996" fill="#0c0f12"/><circle cx="734" cy="283.6" r="2.8" fill="#f2f4f5"/>
<rect x="831.6" y="293" width="105.89999999999998" height="81.19999999999999" rx="7.5" fill="#1b2025" stroke="#0e1114" stroke-width="3.2"/>
<rect x="845" y="296" width="79" height="14.5" fill="#161a1e"/>
<rect x="840" y="313" width="88.5" height="53.7" fill="#22282d"/>
<rect x="831.6" y="293" width="105.89999999999998" height="81.19999999999999" rx="7.5" fill="none" stroke="#a9afb4" stroke-width="1.3"/>
<text x="847.4" y="307.5" font-size="10" fill="#f2f4f5" font-weight="bold" textLength="73.6" lengthAdjust="spacingAndGlyphs">RDS GENERATOR</text>
<rect x="864.8" y="319.4" width="39" height="40.6" fill="#101316"/>
<circle cx="876.8" cy="333" r="10.6" fill="#f4f6f7"/><circle cx="892.2" cy="333" r="10.6" fill="#f4f6f7"/>
<g fill="none" stroke="#101316" stroke-width="1.1"><path d="M867.5 331 A9.3 9.3 0 0 1 884 327"/><path d="M869.8 332 A7 7 0 0 1 883 329.5"/><path d="M885.2 327 A9.3 9.3 0 0 1 901.5 331"/><path d="M886.2 329.5 A7 7 0 0 1 899.2 332"/><path d="M871 335 A5.8 5.8 0 0 0 882 335"/><path d="M886.5 335 A5.8 5.8 0 0 0 897.5 335"/></g>
<path d="M871.5 342.5 Q884.5 347 884.5 333 Q884.5 319 897.5 323.5" fill="none" stroke="#101316" stroke-width="1.2"/>
<circle cx="876.5" cy="332" r="1.8" fill="#101316"/><circle cx="891.5" cy="332" r="1.8" fill="#101316"/>
<text x="866.5" y="355.8" font-size="13.5" fill="#f4f6f7" font-weight="bold" textLength="34.5" lengthAdjust="spacingAndGlyphs" font-style="italic">R·D·S</text>
<rect x="866.5" y="357.8" width="34" height="1.8" fill="#b9bdc1"/>
<circle cx="918" cy="354.3" r="8.3" fill="#efe21a" stroke="#141a3a" stroke-width="1.4"/>
<path d="M918 349 a3.2 3.2 0 0 1 2 5.7 L919.6 357.5 L916.4 357.5 L916 354.7 A3.2 3.2 0 0 1 918 349 Z M916.6 358.4 L919.4 358.4 L919.2 360 L916.8 360 Z" fill="#1b2024"/>
<circle cx="832" cy="333" r="3.5999999999999996" fill="#0c0f12"/><circle cx="832" cy="333" r="2.8" fill="#f2f4f5"/>
<circle cx="936.8" cy="325.4" r="3.5999999999999996" fill="#0c0f12"/><circle cx="936.8" cy="325.4" r="2.8" fill="#f2f4f5"/>
<circle cx="936.8" cy="340" r="3.5999999999999996" fill="#0c0f12"/><circle cx="936.8" cy="340" r="2.8" fill="#f2f4f5"/>
<rect x="1000" y="150.2" width="105.40000000000009" height="79.80000000000001" rx="7.5" fill="#1b2025" stroke="#0e1114" stroke-width="3.2"/>
<rect x="1008" y="153" width="89" height="13.5" fill="#161a1e"/>
<rect x="1007.6" y="168.3" width="92.4" height="54.2" fill="#22282d"/>
<rect x="1000" y="150.2" width="105.40000000000009" height="79.80000000000001" rx="7.5" fill="none" stroke="#a9afb4" stroke-width="1.3"/>
<text x="1010.8" y="164" font-size="10" fill="#f2f4f5" font-weight="bold" textLength="83.2" lengthAdjust="spacingAndGlyphs">MPX CHANGEOVER</text>
<path d="M998 177.2 L1009 177.2" stroke="#0c0f12" stroke-width="3.5"/><path d="M998 177.2 L1009 177.2" stroke="#d3d7da" stroke-width="1.5"/>
<path d="M998 202.3 L1009 202.3" stroke="#0c0f12" stroke-width="3.5"/><path d="M998 202.3 L1009 202.3" stroke="#d3d7da" stroke-width="1.5"/>
<path d="M1014.5 178 L1036 188.7" stroke="#f5a51c" stroke-width="3.2" stroke-linecap="round"/>
<circle cx="1013" cy="177.2" r="4.5" fill="#1b2025" stroke="#d5d9dc" stroke-width="1.4"/>
<circle cx="1013" cy="202.3" r="4.5" fill="#1b2025" stroke="#d5d9dc" stroke-width="1.4"/>
<circle cx="1037.4" cy="189.5" r="4.5" fill="#1b2025" stroke="#d5d9dc" stroke-width="1.4"/>
<path d="M1014.5 178 L1036 188.7" stroke="#f5a51c" stroke-width="3" stroke-linecap="round"/>
<circle cx="1055.4" cy="189.5" r="6.5" fill="#1a1e22"/>
<path d="M1054.6 184.5 L1056.2 184.5 L1055.9 190.5 L1054.9 190.5 Z" fill="#2b3035"/>
<text x="1070" y="179.3" font-size="9" fill="#eceff1" font-weight="bold" textLength="19.4" lengthAdjust="spacingAndGlyphs">AUTO</text>
<rect x="1070" y="181.6" width="19.6" height="2.8" fill="#f7a81c"/>
<rect x="1070" y="192.5" width="19.6" height="2.6" fill="#2c3238"/>
<text x="1070" y="206.5" font-size="9" fill="#eceff1" font-weight="bold" textLength="18" lengthAdjust="spacingAndGlyphs">MAN</text>
<path d="M1088.40 211.62 L1089.31 211.71 L1089.74 213.06 L1090.35 213.38 L1091.71 212.99 L1092.29 213.70 L1091.64 214.96 L1091.84 215.62 L1093.08 216.30 L1092.99 217.21 L1091.64 217.64 L1091.32 218.25 L1091.71 219.61 L1091.00 220.19 L1089.74 219.54 L1089.08 219.74 L1088.40 220.98 L1087.49 220.89 L1087.06 219.54 L1086.45 219.22 L1085.09 219.61 L1084.51 218.90 L1085.16 217.64 L1084.96 216.98 L1083.72 216.30 L1083.81 215.39 L1085.16 214.96 L1085.48 214.35 L1085.09 212.99 L1085.80 212.41 L1087.06 213.06 L1087.72 212.86 Z M1090.11 216.30 A1.71 1.71 0 1 0 1086.69 216.30 A1.71 1.71 0 1 0 1090.11 216.30 Z" fill="#a3b3bf" fill-rule="evenodd"/>
<path d="M1093.17 208.83 L1093.87 208.92 L1094.16 209.82 L1094.57 210.13 L1095.51 210.18 L1095.78 210.83 L1095.15 211.53 L1095.08 212.04 L1095.51 212.88 L1095.08 213.44 L1094.16 213.24 L1093.68 213.44 L1093.17 214.23 L1092.47 214.14 L1092.18 213.24 L1091.77 212.93 L1090.83 212.88 L1090.56 212.23 L1091.19 211.53 L1091.26 211.02 L1090.83 210.18 L1091.26 209.62 L1092.18 209.82 L1092.66 209.62 Z M1094.16 211.53 A0.9900000000000001 0.9900000000000001 0 1 0 1092.18 211.53 A0.9900000000000001 0.9900000000000001 0 1 0 1094.16 211.53 Z" fill="#a3b3bf" fill-rule="evenodd"/>
<circle cx="1104.7" cy="189.5" r="3.5999999999999996" fill="#0c0f12"/><circle cx="1104.7" cy="189.5" r="2.8" fill="#f2f4f5"/>
<circle cx="1146.3" cy="288.5" r="10.5" fill="#0c0f12"/><circle cx="1146.3" cy="288.5" r="9.5" fill="#161b1f" stroke="#cfd3d6" stroke-width="1.3"/>
<path d="M1139.5 288.5 L1153 288.5 M1146.3 281.7 L1146.3 295.3" stroke="#f4f6f7" stroke-width="2"/>
<rect x="1168.4" y="129.75" width="104" height="20.25" rx="1.5" fill="#9db1c0" stroke="#0c0f12" stroke-width="1"/>
<text x="1187" y="144.17" font-size="10" fill="#1a2127" font-weight="bold" textLength="66.7" lengthAdjust="spacingAndGlyphs">MPX SOURCE-A</text>
<rect x="1168.4" y="179.3" width="104" height="20.299999999999983" rx="1.5" fill="#9db1c0" stroke="#0c0f12" stroke-width="1"/>
<text x="1171.7" y="193.75" font-size="10" fill="#1a2127" font-weight="bold" textLength="83.3" lengthAdjust="spacingAndGlyphs">MPX CHANGEOVER</text>
<rect x="1168.4" y="228.9" width="104" height="20.099999999999994" rx="1.5" fill="#9db1c0" stroke="#0c0f12" stroke-width="1"/>
<text x="1187" y="243.25" font-size="10" fill="#1a2127" font-weight="bold" textLength="66.7" lengthAdjust="spacingAndGlyphs">MPX SOURCE-B</text>
<rect x="1168.4" y="253.8" width="104" height="20.19999999999999" rx="1.5" fill="#9db1c0" stroke="#0c0f12" stroke-width="1"/>
<text x="1187" y="268.2" font-size="10" fill="#1a2127" font-weight="bold" textLength="65.6" lengthAdjust="spacingAndGlyphs">STEREO CODER</text>
<rect x="1168.4" y="278.3" width="104" height="20.099999999999966" rx="1.5" fill="#9db1c0" stroke="#0c0f12" stroke-width="1"/>
<text x="1196" y="292.65" font-size="10" fill="#1a2127" font-weight="bold" textLength="48" lengthAdjust="spacingAndGlyphs">MPX + RDS</text>
<rect x="1168.4" y="330.3" width="104" height="20.19999999999999" rx="1.5" fill="#9db1c0" stroke="#0c0f12" stroke-width="1"/>
<text x="1210" y="345.42" font-size="12" fill="#1a2127" font-weight="bold" textLength="20" lengthAdjust="spacingAndGlyphs">RDS</text>
<rect x="1168.4" y="354.8" width="104" height="20.19999999999999" rx="1.5" fill="#161a1e" stroke="#b8bdc2" stroke-width="1.2"/>
<text x="1195.6" y="368.5" font-size="10" fill="#eceff1" font-weight="bold" textLength="48.4" lengthAdjust="spacingAndGlyphs">MPX AUX-1</text>
<rect x="1168.4" y="379.2" width="104" height="20.19999999999999" rx="1.5" fill="#161a1e" stroke="#b8bdc2" stroke-width="1.2"/>
<text x="1195.6" y="392.9" font-size="10" fill="#eceff1" font-weight="bold" textLength="48.4" lengthAdjust="spacingAndGlyphs">MPX AUX-2</text>
<g fill="none" stroke="#3aa0e8" stroke-width="1.6"><path d="M1157 359 L1164 359 L1164 371 L1157 371"/></g>
<path d="M1152 363.8 L1156.5 363.8 L1156.5 361.5 L1161 365 L1156.5 368.5 L1156.5 366.2 L1152 366.2 Z" fill="#3aa0e8"/>
<g fill="none" stroke="#3aa0e8" stroke-width="1.6"><path d="M1157 383.5 L1164 383.5 L1164 395.5 L1157 395.5"/></g>
<path d="M1152 388.3 L1156.5 388.3 L1156.5 386.0 L1161 389.5 L1156.5 393.0 L1156.5 390.7 L1152 390.7 Z" fill="#3aa0e8"/>
<circle cx="1289.5" cy="140.2" r="7.7" fill="#0c0f12"/><circle cx="1289.5" cy="140.2" r="7" fill="#161b1f" stroke="#c3c8cc" stroke-width="1.3"/>
<text x="1289.5" y="143.8" font-size="10" fill="#f4f6f7" font-weight="bold" text-anchor="middle">3</text>
<circle cx="1289.5" cy="189.5" r="7.7" fill="#0c0f12"/><circle cx="1289.5" cy="189.5" r="7" fill="#161b1f" stroke="#c3c8cc" stroke-width="1.3"/>
<text x="1289.5" y="193.1" font-size="10" fill="#f4f6f7" font-weight="bold" text-anchor="middle">5</text>
<circle cx="1289.5" cy="239" r="7.7" fill="#0c0f12"/><circle cx="1289.5" cy="239" r="7" fill="#161b1f" stroke="#c3c8cc" stroke-width="1.3"/>
<text x="1289.5" y="242.6" font-size="10" fill="#f4f6f7" font-weight="bold" text-anchor="middle">4</text>
<circle cx="1289.5" cy="263.8" r="7.7" fill="#0c0f12"/><circle cx="1289.5" cy="263.8" r="7" fill="#161b1f" stroke="#c3c8cc" stroke-width="1.3"/>
<text x="1289.5" y="267.4" font-size="10" fill="#f4f6f7" font-weight="bold" text-anchor="middle">1</text>
<circle cx="1289.5" cy="288.5" r="7.7" fill="#0c0f12"/><circle cx="1289.5" cy="288.5" r="7" fill="#161b1f" stroke="#c3c8cc" stroke-width="1.3"/>
<text x="1289.5" y="292.1" font-size="10" fill="#f4f6f7" font-weight="bold" text-anchor="middle">2</text>
<circle cx="1289.5" cy="365.4" r="7.7" fill="#0c0f12"/><circle cx="1289.5" cy="365.4" r="7" fill="#161b1f" stroke="#c3c8cc" stroke-width="1.3"/>
<text x="1289.5" y="369.0" font-size="10" fill="#f4f6f7" font-weight="bold" text-anchor="middle">6</text>
<circle cx="1289.5" cy="389.8" r="7.7" fill="#0c0f12"/><circle cx="1289.5" cy="389.8" r="7" fill="#161b1f" stroke="#c3c8cc" stroke-width="1.3"/>
<text x="1289.5" y="393.4" font-size="10" fill="#f4f6f7" font-weight="bold" text-anchor="middle">7</text>
<rect x="1329.75" y="95.6" width="105.25" height="148.8" rx="8" fill="#1b2025" stroke="#0e1114" stroke-width="3.2"/>
<rect x="1346" y="98.6" width="73" height="14.0" fill="#161a1e"/>
<rect x="1337" y="114.75" width="89.5" height="121.25" fill="#22282d"/>
<rect x="1329.75" y="95.6" width="105.25" height="148.8" rx="8" fill="none" stroke="#a9afb4" stroke-width="1.3"/>
<text x="1349" y="109.4" font-size="10" fill="#f2f4f5" font-weight="bold" textLength="66.8" lengthAdjust="spacingAndGlyphs">MPX-1 OUTPUT</text>
<path d="M1336 128.6 L1375.5 128.6 L1383.3 136.0 L1383.3 143.4" fill="none" stroke="#d5d9dc" stroke-width="1.4"/>
<path d="M1336 145.6 L1363.8 145.6 L1368 149.5" fill="none" stroke="#d5d9dc" stroke-width="1.4"/>
<path d="M1336 162.6 L1357.7 162.6" fill="none" stroke="#d5d9dc" stroke-width="1.4"/>
<path d="M1336 187.0 L1357.7 187.0" fill="none" stroke="#d5d9dc" stroke-width="1.4"/>
<path d="M1336 204.0 L1363.8 204.0 L1368 200.0" fill="none" stroke="#d5d9dc" stroke-width="1.4"/>
<path d="M1336 221.0 L1376.5 221.0 L1382.9 214.6 L1382.9 206.6" fill="none" stroke="#d5d9dc" stroke-width="1.4"/>
<path d="M1396 136.0 L1396 144.5" fill="none" stroke="#d5d9dc" stroke-width="1.4"/>
<circle cx="1329.75" cy="128.6" r="7.7" fill="#0c0f12"/><circle cx="1329.75" cy="128.6" r="7" fill="#161b1f" stroke="#c3c8cc" stroke-width="1.3"/>
<text x="1329.75" y="132.2" font-size="10" fill="#f4f6f7" font-weight="bold" text-anchor="middle">2</text>
<circle cx="1329.75" cy="145.6" r="7.7" fill="#0c0f12"/><circle cx="1329.75" cy="145.6" r="7" fill="#161b1f" stroke="#c3c8cc" stroke-width="1.3"/>
<text x="1329.75" y="149.2" font-size="10" fill="#f4f6f7" font-weight="bold" text-anchor="middle">3</text>
<circle cx="1329.75" cy="162.6" r="7.7" fill="#0c0f12"/><circle cx="1329.75" cy="162.6" r="7" fill="#161b1f" stroke="#c3c8cc" stroke-width="1.3"/>
<text x="1329.75" y="166.2" font-size="10" fill="#f4f6f7" font-weight="bold" text-anchor="middle">4</text>
<circle cx="1329.75" cy="187.0" r="7.7" fill="#0c0f12"/><circle cx="1329.75" cy="187.0" r="7" fill="#161b1f" stroke="#c3c8cc" stroke-width="1.3"/>
<text x="1329.75" y="190.6" font-size="10" fill="#f4f6f7" font-weight="bold" text-anchor="middle">5</text>
<circle cx="1329.75" cy="204.0" r="7.7" fill="#0c0f12"/><circle cx="1329.75" cy="204.0" r="7" fill="#161b1f" stroke="#c3c8cc" stroke-width="1.3"/>
<text x="1329.75" y="207.6" font-size="10" fill="#f4f6f7" font-weight="bold" text-anchor="middle">6</text>
<circle cx="1329.75" cy="221.0" r="7.7" fill="#0c0f12"/><circle cx="1329.75" cy="221.0" r="7" fill="#161b1f" stroke="#c3c8cc" stroke-width="1.3"/>
<text x="1329.75" y="224.6" font-size="10" fill="#f4f6f7" font-weight="bold" text-anchor="middle">7</text>
<circle cx="1396" cy="128.6" r="7.7" fill="#0c0f12"/><circle cx="1396" cy="128.6" r="7" fill="#161b1f" stroke="#c3c8cc" stroke-width="1.3"/>
<text x="1396" y="132.2" font-size="10" fill="#f4f6f7" font-weight="bold" text-anchor="middle">1</text>
<circle cx="1370.8" cy="152.6" r="4.3" fill="#1b2025" stroke="#d5d9dc" stroke-width="1.4"/>
<circle cx="1362" cy="162.6" r="4.3" fill="#1b2025" stroke="#d5d9dc" stroke-width="1.4"/>
<circle cx="1383.3" cy="147.7" r="4.3" fill="#1b2025" stroke="#d5d9dc" stroke-width="1.4"/>
<circle cx="1396" cy="148.8" r="4.3" fill="#1b2025" stroke="#d5d9dc" stroke-width="1.4"/>
<circle cx="1386.7" cy="174.7" r="4.3" fill="#1b2025" stroke="#d5d9dc" stroke-width="1.4"/>
<circle cx="1362" cy="187.0" r="4.3" fill="#1b2025" stroke="#d5d9dc" stroke-width="1.4"/>
<circle cx="1370.8" cy="197.0" r="4.3" fill="#1b2025" stroke="#d5d9dc" stroke-width="1.4"/>
<circle cx="1382.9" cy="202.3" r="4.3" fill="#1b2025" stroke="#d5d9dc" stroke-width="1.4"/>
<path d="M1383.6 148.5 L1386.4 173.5" stroke="#f5a51c" stroke-width="3" stroke-linecap="round"/>
<path d="M1417.40 226.36 L1418.36 226.45 L1418.82 227.88 L1419.46 228.22 L1420.89 227.81 L1421.51 228.56 L1420.82 229.88 L1421.03 230.58 L1422.34 231.30 L1422.25 232.26 L1420.82 232.72 L1420.48 233.36 L1420.89 234.79 L1420.14 235.41 L1418.82 234.72 L1418.12 234.93 L1417.40 236.24 L1416.44 236.15 L1415.98 234.72 L1415.34 234.38 L1413.91 234.79 L1413.29 234.04 L1413.98 232.72 L1413.77 232.02 L1412.46 231.30 L1412.55 230.34 L1413.98 229.88 L1414.32 229.24 L1413.91 227.81 L1414.66 227.19 L1415.98 227.88 L1416.68 227.67 Z M1419.21 231.30 A1.805 1.805 0 1 0 1415.60 231.30 A1.805 1.805 0 1 0 1419.21 231.30 Z" fill="#a3b3bf" fill-rule="evenodd"/>
<path d="M1422.44 223.42 L1423.17 223.51 L1423.48 224.46 L1423.91 224.79 L1424.90 224.84 L1425.19 225.53 L1424.53 226.27 L1424.45 226.81 L1424.90 227.69 L1424.45 228.28 L1423.48 228.07 L1422.98 228.28 L1422.44 229.12 L1421.70 229.02 L1421.39 228.07 L1420.96 227.74 L1419.97 227.69 L1419.68 227.00 L1420.35 226.27 L1420.42 225.72 L1419.97 224.84 L1420.42 224.25 L1421.39 224.46 L1421.89 224.25 Z M1423.48 226.27 A1.045 1.045 0 1 0 1421.39 226.27 A1.045 1.045 0 1 0 1423.48 226.27 Z" fill="#a3b3bf" fill-rule="evenodd"/>
<rect x="1329.75" y="263.8" width="105.25" height="149.90000000000003" rx="8" fill="#1b2025" stroke="#0e1114" stroke-width="3.2"/>
<rect x="1346" y="266.8" width="73" height="14.0" fill="#161a1e"/>
<rect x="1337" y="282.95" width="89.5" height="121.25" fill="#22282d"/>
<rect x="1329.75" y="263.8" width="105.25" height="149.90000000000003" rx="8" fill="none" stroke="#a9afb4" stroke-width="1.3"/>
<text x="1349" y="278.0" font-size="10" fill="#f2f4f5" font-weight="bold" textLength="66.8" lengthAdjust="spacingAndGlyphs">MPX-2 OUTPUT</text>
<path d="M1336 297.4 L1375.5 297.4 L1383.3 304.8 L1383.3 315.20000000000005" fill="none" stroke="#d5d9dc" stroke-width="1.4"/>
<path d="M1336 314.4 L1363.8 314.4 L1368 318.3" fill="none" stroke="#d5d9dc" stroke-width="1.4"/>
<path d="M1336 331.4 L1357.7 331.4" fill="none" stroke="#d5d9dc" stroke-width="1.4"/>
<path d="M1336 355.8 L1357.7 355.8" fill="none" stroke="#d5d9dc" stroke-width="1.4"/>
<path d="M1336 372.8 L1363.8 372.8 L1368 368.8" fill="none" stroke="#d5d9dc" stroke-width="1.4"/>
<path d="M1336 389.8 L1376.5 389.8 L1382.9 383.4 L1382.9 375.4" fill="none" stroke="#d5d9dc" stroke-width="1.4"/>
<path d="M1396 304.8 L1396 315.8" fill="none" stroke="#d5d9dc" stroke-width="1.4"/>
<circle cx="1329.75" cy="297.4" r="7.7" fill="#0c0f12"/><circle cx="1329.75" cy="297.4" r="7" fill="#161b1f" stroke="#c3c8cc" stroke-width="1.3"/>
<text x="1329.75" y="301.0" font-size="10" fill="#f4f6f7" font-weight="bold" text-anchor="middle">2</text>
<circle cx="1329.75" cy="314.4" r="7.7" fill="#0c0f12"/><circle cx="1329.75" cy="314.4" r="7" fill="#161b1f" stroke="#c3c8cc" stroke-width="1.3"/>
<text x="1329.75" y="318.0" font-size="10" fill="#f4f6f7" font-weight="bold" text-anchor="middle">3</text>
<circle cx="1329.75" cy="331.4" r="7.7" fill="#0c0f12"/><circle cx="1329.75" cy="331.4" r="7" fill="#161b1f" stroke="#c3c8cc" stroke-width="1.3"/>
<text x="1329.75" y="335.0" font-size="10" fill="#f4f6f7" font-weight="bold" text-anchor="middle">4</text>
<circle cx="1329.75" cy="355.8" r="7.7" fill="#0c0f12"/><circle cx="1329.75" cy="355.8" r="7" fill="#161b1f" stroke="#c3c8cc" stroke-width="1.3"/>
<text x="1329.75" y="359.4" font-size="10" fill="#f4f6f7" font-weight="bold" text-anchor="middle">5</text>
<circle cx="1329.75" cy="372.8" r="7.7" fill="#0c0f12"/><circle cx="1329.75" cy="372.8" r="7" fill="#161b1f" stroke="#c3c8cc" stroke-width="1.3"/>
<text x="1329.75" y="376.4" font-size="10" fill="#f4f6f7" font-weight="bold" text-anchor="middle">6</text>
<circle cx="1329.75" cy="389.8" r="7.7" fill="#0c0f12"/><circle cx="1329.75" cy="389.8" r="7" fill="#161b1f" stroke="#c3c8cc" stroke-width="1.3"/>
<text x="1329.75" y="393.4" font-size="10" fill="#f4f6f7" font-weight="bold" text-anchor="middle">7</text>
<circle cx="1396" cy="297.4" r="7.7" fill="#0c0f12"/><circle cx="1396" cy="297.4" r="7" fill="#161b1f" stroke="#c3c8cc" stroke-width="1.3"/>
<text x="1396" y="301.0" font-size="10" fill="#f4f6f7" font-weight="bold" text-anchor="middle">1</text>
<circle cx="1370.8" cy="321.4" r="4.3" fill="#1b2025" stroke="#d5d9dc" stroke-width="1.4"/>
<circle cx="1362" cy="331.4" r="4.3" fill="#1b2025" stroke="#d5d9dc" stroke-width="1.4"/>
<circle cx="1383" cy="316.1" r="4.3" fill="#1b2025" stroke="#d5d9dc" stroke-width="1.4"/>
<circle cx="1396" cy="317.1" r="4.3" fill="#1b2025" stroke="#d5d9dc" stroke-width="1.4"/>
<circle cx="1408.4" cy="324.6" r="4.3" fill="#1b2025" stroke="#d5d9dc" stroke-width="1.4"/>
<circle cx="1387.1" cy="343.5" r="4.3" fill="#1b2025" stroke="#d5d9dc" stroke-width="1.4"/>
<circle cx="1362" cy="355.8" r="4.3" fill="#1b2025" stroke="#d5d9dc" stroke-width="1.4"/>
<circle cx="1370.8" cy="366.4" r="4.3" fill="#1b2025" stroke="#d5d9dc" stroke-width="1.4"/>
<circle cx="1382.9" cy="371.6" r="4.3" fill="#1b2025" stroke="#d5d9dc" stroke-width="1.4"/>
<path d="M1363 355.20000000000005 L1386 344.20000000000005" stroke="#f5a51c" stroke-width="3" stroke-linecap="round"/>
<path d="M1412 320.8 L1415.8 316.1 L1428 316.1" fill="none" stroke="#d5d9dc" stroke-width="1.4"/>
<circle cx="1434.3" cy="316.1" r="7.7" fill="#0c0f12"/><circle cx="1434.3" cy="316.1" r="7" fill="#161b1f" stroke="#c3c8cc" stroke-width="1.3"/>
<text x="1434.3" y="319.7" font-size="10" fill="#f4f6f7" font-weight="bold" text-anchor="middle">8</text>
<path d="M1417.40 395.16 L1418.36 395.25 L1418.82 396.68 L1419.46 397.02 L1420.89 396.61 L1421.51 397.36 L1420.82 398.68 L1421.03 399.38 L1422.34 400.10 L1422.25 401.06 L1420.82 401.52 L1420.48 402.16 L1420.89 403.59 L1420.14 404.21 L1418.82 403.52 L1418.12 403.73 L1417.40 405.04 L1416.44 404.95 L1415.98 403.52 L1415.34 403.18 L1413.91 403.59 L1413.29 402.84 L1413.98 401.52 L1413.77 400.82 L1412.46 400.10 L1412.55 399.14 L1413.98 398.68 L1414.32 398.04 L1413.91 396.61 L1414.66 395.99 L1415.98 396.68 L1416.68 396.47 Z M1419.21 400.10 A1.805 1.805 0 1 0 1415.60 400.10 A1.805 1.805 0 1 0 1419.21 400.10 Z" fill="#a3b3bf" fill-rule="evenodd"/>
<path d="M1422.44 392.21 L1423.17 392.31 L1423.48 393.26 L1423.91 393.59 L1424.90 393.64 L1425.19 394.33 L1424.53 395.06 L1424.45 395.61 L1424.90 396.49 L1424.45 397.08 L1423.48 396.87 L1422.98 397.08 L1422.44 397.92 L1421.70 397.82 L1421.39 396.87 L1420.96 396.54 L1419.97 396.49 L1419.68 395.80 L1420.35 395.06 L1420.42 394.52 L1419.97 393.64 L1420.42 393.05 L1421.39 393.26 L1421.89 393.05 Z M1423.48 395.06 A1.045 1.045 0 1 0 1421.39 395.06 A1.045 1.045 0 1 0 1423.48 395.06 Z" fill="#a3b3bf" fill-rule="evenodd"/>
<path d="M1434.3 174.7 L1446 174.7" fill="none" stroke="#0c0f12" stroke-width="3.5" stroke-linejoin="miter"/>
<path d="M1434.3 174.7 L1446 174.7" fill="none" stroke="#d3d7da" stroke-width="1.5" stroke-linejoin="miter"/>
<path d="M1434.3 342.9 L1446 342.9" fill="none" stroke="#0c0f12" stroke-width="3.5" stroke-linejoin="miter"/>
<path d="M1434.3 342.9 L1446 342.9" fill="none" stroke="#d3d7da" stroke-width="1.5" stroke-linejoin="miter"/>
<circle cx="1434.3" cy="174.7" r="3.3" fill="#0c0f12"/><circle cx="1434.3" cy="174.7" r="2.5" fill="#f2f4f5"/>
<circle cx="1445.6" cy="174.7" r="3.3" fill="#0c0f12"/><circle cx="1445.6" cy="174.7" r="2.5" fill="#f2f4f5"/>
<circle cx="1434.3" cy="342.9" r="3.3" fill="#0c0f12"/><circle cx="1434.3" cy="342.9" r="2.5" fill="#f2f4f5"/>
<g fill="none" stroke="#2fb24a" stroke-width="1.6"><path d="M1475 169 L1469 169 L1469 181 L1475 181"/></g>
<path d="M1472 173.8 L1476.5 173.8 L1476.5 171.5 L1481 175 L1476.5 178.5 L1476.5 176.2 L1472 176.2 Z" fill="#2fb24a"/>
<g fill="none" stroke="#2fb24a" stroke-width="1.6"><path d="M1475 337 L1469 337 L1469 349 L1475 349"/></g>
<path d="M1472 341.8 L1476.5 341.8 L1476.5 339.5 L1481 343 L1476.5 346.5 L1476.5 344.2 L1472 344.2 Z" fill="#2fb24a"/>
<rect x="1509" y="95.6" width="110.59999999999991" height="316.4" rx="7.5" fill="#1b2025" stroke="#0e1114" stroke-width="3.2"/>
<rect x="1509" y="95.6" width="110.59999999999991" height="316.4" rx="7.5" fill="none" stroke="#a9afb4" stroke-width="1.3"/>
<rect x="1517.6" y="114.75" width="42.4" height="289.5" fill="#22282d"/>
<rect x="1567.6" y="114.75" width="43.4" height="289.5" fill="#22282d"/>
<rect x="1515" y="97" width="100" height="14" fill="#161a1e"/>
<text x="1525.7" y="109.4" font-size="10" fill="#f2f4f5" font-weight="bold" textLength="25.9" lengthAdjust="spacingAndGlyphs">MPX1</text>
<text x="1576.7" y="109.4" font-size="10" fill="#f2f4f5" font-weight="bold" textLength="25.9" lengthAdjust="spacingAndGlyphs">MPX2</text>
<rect x="1533.6" y="380.2" width="9.6" height="3" fill="#f7a81c" rx="0.8"/>
<rect x="1533.6" y="375.27" width="9.6" height="3" fill="#f7a81c" rx="0.8"/>
<rect x="1533.6" y="370.34" width="9.6" height="3" fill="#f7a81c" rx="0.8"/>
<rect x="1533.6" y="365.41" width="9.6" height="3" fill="#f7a81c" rx="0.8"/>
<rect x="1533.6" y="360.48" width="9.6" height="3" fill="#f7a81c" rx="0.8"/>
<rect x="1533.6" y="355.55" width="9.6" height="3" fill="#f7a81c" rx="0.8"/>
<rect x="1533.6" y="350.62" width="9.6" height="3" fill="#f7a81c" rx="0.8"/>
<rect x="1533.6" y="345.69" width="9.6" height="3" fill="#f7a81c" rx="0.8"/>
<rect x="1533.6" y="340.76" width="9.6" height="3" fill="#f7a81c" rx="0.8"/>
<rect x="1533.6" y="335.83" width="9.6" height="3" fill="#f7a81c" rx="0.8"/>
<rect x="1533.6" y="330.9" width="9.6" height="3" fill="#f7a81c" rx="0.8"/>
<rect x="1533.6" y="325.97" width="9.6" height="3" fill="#f7a81c" rx="0.8"/>
<rect x="1533.6" y="321.04" width="9.6" height="3" fill="#f7a81c" rx="0.8"/>
<rect x="1533.6" y="316.11" width="9.6" height="3" fill="#f7a81c" rx="0.8"/>
<rect x="1533.6" y="311.18" width="9.6" height="3" fill="#f7a81c" rx="0.8"/>
<rect x="1533.6" y="306.25" width="9.6" height="3" fill="#f7a81c" rx="0.8"/>
<rect x="1533.6" y="301.32" width="9.6" height="3" fill="#f7a81c" rx="0.8"/>
<rect x="1533.6" y="296.39" width="9.6" height="3" fill="#f7a81c" rx="0.8"/>
<rect x="1533.6" y="291.46" width="9.6" height="3" fill="#f7a81c" rx="0.8"/>
<rect x="1533.6" y="286.53" width="9.6" height="3" fill="#f7a81c" rx="0.8"/>
<rect x="1533.6" y="281.6" width="9.6" height="3" fill="#f7a81c" rx="0.8"/>
<rect x="1533.6" y="276.67" width="9.6" height="3" fill="#f7a81c" rx="0.8"/>
<rect x="1533.6" y="271.74" width="9.6" height="3" fill="#f7a81c" rx="0.8"/>
<rect x="1533.6" y="266.81" width="9.6" height="3" fill="#f7a81c" rx="0.8"/>
<rect x="1533.6" y="261.88" width="9.6" height="3" fill="#f7a81c" rx="0.8"/>
<rect x="1533.6" y="256.95" width="9.6" height="3" fill="#f7a81c" rx="0.8"/>
<rect x="1533.6" y="252.02" width="9.6" height="3" fill="#f7a81c" rx="0.8"/>
<rect x="1533.6" y="247.09" width="9.6" height="3" fill="#f7a81c" rx="0.8"/>
<rect x="1533.6" y="242.16" width="9.6" height="3" fill="#f7a81c" rx="0.8"/>
<rect x="1533.6" y="237.23" width="9.6" height="3" fill="#f7a81c" rx="0.8"/>
<rect x="1533.6" y="232.3" width="9.6" height="3" fill="#f7a81c" rx="0.8"/>
<rect x="1533.6" y="217.51" width="9.6" height="3" fill="#1c2125" rx="0.8"/>
<rect x="1533.6" y="212.58" width="9.6" height="3" fill="#1c2125" rx="0.8"/>
<rect x="1533.6" y="207.65" width="9.6" height="3" fill="#1c2125" rx="0.8"/>
<rect x="1533.6" y="202.72" width="9.6" height="3" fill="#1c2125" rx="0.8"/>
<rect x="1533.6" y="197.79" width="9.6" height="3" fill="#1c2125" rx="0.8"/>
<rect x="1533.6" y="192.86" width="9.6" height="3" fill="#1c2125" rx="0.8"/>
<rect x="1533.6" y="187.93" width="9.6" height="3" fill="#1c2125" rx="0.8"/>
<rect x="1533.6" y="183.0" width="9.6" height="3" fill="#1c2125" rx="0.8"/>
<rect x="1533.6" y="178.07" width="9.6" height="3" fill="#1c2125" rx="0.8"/>
<rect x="1533.6" y="173.14" width="9.6" height="3" fill="#1c2125" rx="0.8"/>
<rect x="1533.6" y="168.21" width="9.6" height="3" fill="#1c2125" rx="0.8"/>
<rect x="1533.6" y="163.28" width="9.6" height="3" fill="#1c2125" rx="0.8"/>
<rect x="1533.6" y="158.35" width="9.6" height="3" fill="#1c2125" rx="0.8"/>
<rect x="1533.6" y="153.42" width="9.6" height="3" fill="#1c2125" rx="0.8"/>
<rect x="1533.6" y="148.49" width="9.6" height="3" fill="#1c2125" rx="0.8"/>
<rect x="1533.6" y="143.56" width="9.6" height="3" fill="#1c2125" rx="0.8"/>
<rect x="1533.6" y="138.63" width="9.6" height="3" fill="#1c2125" rx="0.8"/>
<rect x="1533.6" y="133.7" width="9.6" height="3" fill="#1c2125" rx="0.8"/>
<rect x="1533.6" y="224.9" width="10" height="3.4" fill="#f01414" rx="1"/>
<rect x="1544.6" y="134.1" width="3.8" height="1.8" fill="#eef0f2"/>
<text x="1549.2" y="138" font-size="8.2" fill="#eef0f2" textLength="7.8" lengthAdjust="spacingAndGlyphs">25</text>
<rect x="1544.6" y="158.5" width="3.8" height="1.8" fill="#eef0f2"/>
<text x="1549.2" y="162.4" font-size="8.2" fill="#eef0f2" textLength="7.8" lengthAdjust="spacingAndGlyphs">20</text>
<rect x="1544.6" y="183.5" width="3.8" height="1.8" fill="#eef0f2"/>
<text x="1549.2" y="187.4" font-size="8.2" fill="#eef0f2" textLength="7.8" lengthAdjust="spacingAndGlyphs">15</text>
<rect x="1544.6" y="208.1" width="3.8" height="1.8" fill="#eef0f2"/>
<text x="1549.2" y="212" font-size="8.2" fill="#eef0f2" textLength="7.8" lengthAdjust="spacingAndGlyphs">10</text>
<rect x="1544.6" y="232.8" width="3.8" height="1.8" fill="#eef0f2"/>
<text x="1549.2" y="236.7" font-size="8.2" fill="#eef0f2" textLength="3.9" lengthAdjust="spacingAndGlyphs">5</text>
<rect x="1544.6" y="257.5" width="3.8" height="1.8" fill="#eef0f2"/>
<text x="1549.2" y="261.4" font-size="8.2" fill="#eef0f2" textLength="3.9" lengthAdjust="spacingAndGlyphs">0</text>
<rect x="1544.6" y="281.8" width="3.8" height="1.8" fill="#eef0f2"/>
<text x="1549.2" y="285.7" font-size="8.2" fill="#eef0f2" textLength="3.9" lengthAdjust="spacingAndGlyphs">5</text>
<rect x="1544.6" y="306.6" width="3.8" height="1.8" fill="#eef0f2"/>
<text x="1549.2" y="310.5" font-size="8.2" fill="#eef0f2" textLength="7.8" lengthAdjust="spacingAndGlyphs">10</text>
<rect x="1544.6" y="331.3" width="3.8" height="1.8" fill="#eef0f2"/>
<text x="1549.2" y="335.2" font-size="8.2" fill="#eef0f2" textLength="7.8" lengthAdjust="spacingAndGlyphs">15</text>
<rect x="1544.6" y="356.1" width="3.8" height="1.8" fill="#eef0f2"/>
<text x="1549.2" y="360" font-size="8.2" fill="#eef0f2" textLength="7.8" lengthAdjust="spacingAndGlyphs">20</text>
<rect x="1544.6" y="380.8" width="3.8" height="1.8" fill="#eef0f2"/>
<text x="1549.2" y="384.7" font-size="8.2" fill="#eef0f2" textLength="7.8" lengthAdjust="spacingAndGlyphs">25</text>
<text x="1546.6" y="150.5" font-size="7" fill="#d8dcdf">dBu</text>
<rect x="1584.6" y="380.2" width="9.6" height="3" fill="#1c2125" rx="0.8"/>
<rect x="1584.6" y="375.27" width="9.6" height="3" fill="#1c2125" rx="0.8"/>
<rect x="1584.6" y="370.34" width="9.6" height="3" fill="#1c2125" rx="0.8"/>
<rect x="1584.6" y="365.41" width="9.6" height="3" fill="#1c2125" rx="0.8"/>
<rect x="1584.6" y="360.48" width="9.6" height="3" fill="#1c2125" rx="0.8"/>
<rect x="1584.6" y="355.55" width="9.6" height="3" fill="#1c2125" rx="0.8"/>
<rect x="1584.6" y="350.62" width="9.6" height="3" fill="#1c2125" rx="0.8"/>
<rect x="1584.6" y="345.69" width="9.6" height="3" fill="#1c2125" rx="0.8"/>
<rect x="1584.6" y="340.76" width="9.6" height="3" fill="#1c2125" rx="0.8"/>
<rect x="1584.6" y="335.83" width="9.6" height="3" fill="#1c2125" rx="0.8"/>
<rect x="1584.6" y="330.9" width="9.6" height="3" fill="#1c2125" rx="0.8"/>
<rect x="1584.6" y="325.97" width="9.6" height="3" fill="#1c2125" rx="0.8"/>
<rect x="1584.6" y="321.04" width="9.6" height="3" fill="#1c2125" rx="0.8"/>
<rect x="1584.6" y="316.11" width="9.6" height="3" fill="#1c2125" rx="0.8"/>
<rect x="1584.6" y="311.18" width="9.6" height="3" fill="#1c2125" rx="0.8"/>
<rect x="1584.6" y="306.25" width="9.6" height="3" fill="#1c2125" rx="0.8"/>
<rect x="1584.6" y="301.32" width="9.6" height="3" fill="#1c2125" rx="0.8"/>
<rect x="1584.6" y="296.39" width="9.6" height="3" fill="#1c2125" rx="0.8"/>
<rect x="1584.6" y="291.46" width="9.6" height="3" fill="#1c2125" rx="0.8"/>
<rect x="1584.6" y="286.53" width="9.6" height="3" fill="#1c2125" rx="0.8"/>
<rect x="1584.6" y="281.6" width="9.6" height="3" fill="#1c2125" rx="0.8"/>
<rect x="1584.6" y="276.67" width="9.6" height="3" fill="#1c2125" rx="0.8"/>
<rect x="1584.6" y="271.74" width="9.6" height="3" fill="#1c2125" rx="0.8"/>
<rect x="1584.6" y="266.81" width="9.6" height="3" fill="#1c2125" rx="0.8"/>
<rect x="1584.6" y="261.88" width="9.6" height="3" fill="#1c2125" rx="0.8"/>
<rect x="1584.6" y="256.95" width="9.6" height="3" fill="#1c2125" rx="0.8"/>
<rect x="1584.6" y="252.02" width="9.6" height="3" fill="#1c2125" rx="0.8"/>
<rect x="1584.6" y="247.09" width="9.6" height="3" fill="#1c2125" rx="0.8"/>
<rect x="1584.6" y="242.16" width="9.6" height="3" fill="#1c2125" rx="0.8"/>
<rect x="1584.6" y="237.23" width="9.6" height="3" fill="#1c2125" rx="0.8"/>
<rect x="1584.6" y="232.3" width="9.6" height="3" fill="#1c2125" rx="0.8"/>
<rect x="1584.6" y="227.37" width="9.6" height="3" fill="#1c2125" rx="0.8"/>
<rect x="1584.6" y="222.44" width="9.6" height="3" fill="#1c2125" rx="0.8"/>
<rect x="1584.6" y="217.51" width="9.6" height="3" fill="#1c2125" rx="0.8"/>
<rect x="1584.6" y="212.58" width="9.6" height="3" fill="#1c2125" rx="0.8"/>
<rect x="1584.6" y="207.65" width="9.6" height="3" fill="#1c2125" rx="0.8"/>
<rect x="1584.6" y="202.72" width="9.6" height="3" fill="#1c2125" rx="0.8"/>
<rect x="1584.6" y="197.79" width="9.6" height="3" fill="#1c2125" rx="0.8"/>
<rect x="1584.6" y="192.86" width="9.6" height="3" fill="#1c2125" rx="0.8"/>
<rect x="1584.6" y="187.93" width="9.6" height="3" fill="#1c2125" rx="0.8"/>
<rect x="1584.6" y="183.0" width="9.6" height="3" fill="#1c2125" rx="0.8"/>
<rect x="1584.6" y="178.07" width="9.6" height="3" fill="#1c2125" rx="0.8"/>
<rect x="1584.6" y="173.14" width="9.6" height="3" fill="#1c2125" rx="0.8"/>
<rect x="1584.6" y="168.21" width="9.6" height="3" fill="#1c2125" rx="0.8"/>
<rect x="1584.6" y="163.28" width="9.6" height="3" fill="#1c2125" rx="0.8"/>
<rect x="1584.6" y="158.35" width="9.6" height="3" fill="#1c2125" rx="0.8"/>
<rect x="1584.6" y="153.42" width="9.6" height="3" fill="#1c2125" rx="0.8"/>
<rect x="1584.6" y="148.49" width="9.6" height="3" fill="#1c2125" rx="0.8"/>
<rect x="1584.6" y="143.56" width="9.6" height="3" fill="#1c2125" rx="0.8"/>
<rect x="1584.6" y="138.63" width="9.6" height="3" fill="#1c2125" rx="0.8"/>
<rect x="1584.6" y="133.7" width="9.6" height="3" fill="#1c2125" rx="0.8"/>
<rect x="1595.6" y="134.1" width="3.8" height="1.8" fill="#eef0f2"/>
<text x="1600.2" y="138" font-size="8.2" fill="#eef0f2" textLength="7.8" lengthAdjust="spacingAndGlyphs">25</text>
<rect x="1595.6" y="158.5" width="3.8" height="1.8" fill="#eef0f2"/>
<text x="1600.2" y="162.4" font-size="8.2" fill="#eef0f2" textLength="7.8" lengthAdjust="spacingAndGlyphs">20</text>
<rect x="1595.6" y="183.5" width="3.8" height="1.8" fill="#eef0f2"/>
<text x="1600.2" y="187.4" font-size="8.2" fill="#eef0f2" textLength="7.8" lengthAdjust="spacingAndGlyphs">15</text>
<rect x="1595.6" y="208.1" width="3.8" height="1.8" fill="#eef0f2"/>
<text x="1600.2" y="212" font-size="8.2" fill="#eef0f2" textLength="7.8" lengthAdjust="spacingAndGlyphs">10</text>
<rect x="1595.6" y="232.8" width="3.8" height="1.8" fill="#eef0f2"/>
<text x="1600.2" y="236.7" font-size="8.2" fill="#eef0f2" textLength="3.9" lengthAdjust="spacingAndGlyphs">5</text>
<rect x="1595.6" y="257.5" width="3.8" height="1.8" fill="#eef0f2"/>
<text x="1600.2" y="261.4" font-size="8.2" fill="#eef0f2" textLength="3.9" lengthAdjust="spacingAndGlyphs">0</text>
<rect x="1595.6" y="281.8" width="3.8" height="1.8" fill="#eef0f2"/>
<text x="1600.2" y="285.7" font-size="8.2" fill="#eef0f2" textLength="3.9" lengthAdjust="spacingAndGlyphs">5</text>
<rect x="1595.6" y="306.6" width="3.8" height="1.8" fill="#eef0f2"/>
<text x="1600.2" y="310.5" font-size="8.2" fill="#eef0f2" textLength="7.8" lengthAdjust="spacingAndGlyphs">10</text>
<rect x="1595.6" y="331.3" width="3.8" height="1.8" fill="#eef0f2"/>
<text x="1600.2" y="335.2" font-size="8.2" fill="#eef0f2" textLength="7.8" lengthAdjust="spacingAndGlyphs">15</text>
<rect x="1595.6" y="356.1" width="3.8" height="1.8" fill="#eef0f2"/>
<text x="1600.2" y="360" font-size="8.2" fill="#eef0f2" textLength="7.8" lengthAdjust="spacingAndGlyphs">20</text>
<rect x="1595.6" y="380.8" width="3.8" height="1.8" fill="#eef0f2"/>
<text x="1600.2" y="384.7" font-size="8.2" fill="#eef0f2" textLength="7.8" lengthAdjust="spacingAndGlyphs">25</text>
<text x="1597.6" y="150.5" font-size="7" fill="#d8dcdf">dBu</text>
<rect x="452" y="462" width="1200" height="269.6" fill="#1f252a"/>
<rect x="449.4" y="459.6" width="1202.6" height="2.4" fill="#8e9397"/>
<rect x="454" y="436.3" width="1194.3" height="23.2" fill="#c4c9cd"/>
<rect x="455.4" y="437.7" width="1191.5" height="20.4" fill="#0e1216"/>
<rect x="456.5" y="438.8" width="1189.3" height="18.2" fill="#12171b"/>
<rect x="458" y="440" width="52" height="16" rx="8" fill="#1a2025"/>
<circle cx="468.9" cy="447.8" r="4.6" fill="none" stroke="#eceff1" stroke-width="1.3"/>
<rect x="468.3" y="446.2" width="1.3" height="4" fill="#eceff1"/>
<rect x="468.3" y="444.3" width="1.3" height="1.1" fill="#eceff1"/>
<text x="481.9" y="451" font-size="8.5" fill="#f0f2f4" font-weight="bold" textLength="19.1" lengthAdjust="spacingAndGlyphs">INFO</text>
<text x="953.3" y="451.7" font-size="11.5" fill="#a9bac8" font-weight="bold" textLength="196" lengthAdjust="spacingAndGlyphs">MPX OUTPUT SOURCES SETTINGS</text>
<rect x="1560" y="442" width="59" height="11.3" fill="#a6bac9"/>
<path d="M1564 443.5 L1569 444.5 L1569 452.5 L1564 451.5 Z" fill="#141a1f"/><path d="M1569.5 447.5 L1572 447.5" stroke="#141a1f" stroke-width="1"/>
<text x="1582.5" y="450.6" font-size="8.4" fill="#141a1f" font-weight="bold" textLength="14.6" lengthAdjust="spacingAndGlyphs">EXIT</text>
<rect x="467.5" y="469.2" width="379.20000000000005" height="253.8" rx="4" fill="#12171c"/>
<path d="M467.5 483.3 L467.5 473.2 Q467.5 469.2 471.5 469.2 L842.7 469.2 Q846.7 469.2 846.7 473.2 L846.7 483.3 Z" fill="#5b7590"/>
<text x="471.7" y="480" font-size="10" fill="#eef2f5" textLength="227.3" lengthAdjust="spacingAndGlyphs" stroke="#eef2f5" stroke-width="0.3">MPX-1 DEVIATION HISTOGRAM ( REF: +6.0 dB )</text>
<rect x="479.0" y="495.8" width="26.8" height="15" fill="#dcdcdc" stroke="#f5f5f5" stroke-width="0.8"/>
<text x="492.4" y="506" font-size="8.5" fill="#8b8b8b" text-anchor="middle" textLength="19" lengthAdjust="spacingAndGlyphs">reset</text>
<text x="520" y="506.7" font-size="10.5" fill="#e9a21a" textLength="40" lengthAdjust="spacingAndGlyphs" stroke="#e9a21a" stroke-width="0.3">Samples:</text>
<text x="564" y="506.7" font-size="10.5" fill="#f2f4f5" textLength="21.8" lengthAdjust="spacingAndGlyphs" stroke="#f2f4f5" stroke-width="0.3">3153</text>
<text x="595" y="506.7" font-size="10.5" fill="#e9a21a" textLength="40" lengthAdjust="spacingAndGlyphs" stroke="#e9a21a" stroke-width="0.3">Duration:</text>
<text x="638.3" y="506.7" font-size="10.5" fill="#f2f4f5" textLength="45.0" lengthAdjust="spacingAndGlyphs" stroke="#f2f4f5" stroke-width="0.3">00:13':08"</text>
<text x="708.3" y="506.7" font-size="10.5" fill="#e9a21a" textLength="55.7" lengthAdjust="spacingAndGlyphs" stroke="#e9a21a" stroke-width="0.3">Date &amp; Time:</text>
<text x="771.7" y="506.7" font-size="10.5" fill="#f2f4f5" textLength="49.1" lengthAdjust="spacingAndGlyphs" stroke="#f2f4f5" stroke-width="0.3">19/08/2024</text>
<rect x="733.25" y="665.4" width="2.3" height="26.0" fill="#f7a81c"/>
<rect x="737.05" y="656" width="2.3" height="35.4" fill="#f7a81c"/>
<rect x="740.55" y="633.8" width="2.3" height="57.6" fill="#f7a81c"/>
<rect x="744.35" y="609.5" width="2.3" height="81.9" fill="#f7a81c"/>
<rect x="748.05" y="613.1" width="2.3" height="78.3" fill="#f7a81c"/>
<rect x="751.5" y="532.8" width="2.6" height="158.6" fill="#ff4d1c"/>
<rect x="755.35" y="604.9" width="2.3" height="86.5" fill="#e21a1a"/>
<rect x="759.05" y="607.9" width="2.3" height="83.5" fill="#e21a1a"/>
<rect x="762.65" y="656" width="2.3" height="35.4" fill="#e21a1a"/>
<rect x="766.35" y="670.5" width="2.3" height="20.9" fill="#e21a1a"/>
<rect x="539.15" y="689.8" width="2.3" height="1.6" fill="#f7a81c"/>
<rect x="546.65" y="689.8" width="2.3" height="1.6" fill="#f7a81c"/>
<rect x="578.45" y="689.8" width="2.3" height="1.6" fill="#f7a81c"/>
<rect x="596.75" y="689.8" width="2.3" height="1.6" fill="#f7a81c"/>
<rect x="632.55" y="689.6" width="2.3" height="1.8" fill="#f7a81c"/>
<rect x="646.85" y="689.8" width="2.3" height="1.6" fill="#f7a81c"/>
<rect x="650.85" y="689.8" width="2.3" height="1.6" fill="#f7a81c"/>
<rect x="657.85" y="689.8" width="2.3" height="1.6" fill="#f7a81c"/>
<rect x="661.85" y="689.8" width="2.3" height="1.6" fill="#f7a81c"/>
<rect x="671.85" y="689.8" width="2.3" height="1.6" fill="#f7a81c"/>
<rect x="682.65" y="689.8" width="2.3" height="1.6" fill="#f7a81c"/>
<rect x="689.85" y="689.8" width="2.3" height="1.6" fill="#f7a81c"/>
<rect x="693.35" y="689.8" width="2.3" height="1.6" fill="#f7a81c"/>
<rect x="700.85" y="689.6" width="2.3" height="1.8" fill="#f7a81c"/>
<rect x="707.85" y="688.9" width="2.3" height="2.5" fill="#f7a81c"/>
<rect x="711.25" y="689.8" width="2.3" height="1.6" fill="#f7a81c"/>
<rect x="714.85" y="689.2" width="2.3" height="2.2" fill="#f7a81c"/>
<rect x="718.55" y="686.9" width="2.3" height="4.5" fill="#f7a81c"/>
<rect x="722.25" y="689.2" width="2.3" height="2.2" fill="#f7a81c"/>
<rect x="725.95" y="688.4" width="2.3" height="3.0" fill="#f7a81c"/>
<rect x="729.55" y="689.2" width="2.3" height="2.2" fill="#f7a81c"/>
<rect x="482.6" y="532.1999999999999" width="362.69999999999993" height="1.2" fill="#9aa1a7" fill-opacity="0.55"/>
<text transform="translate(479.4,536.1) scale(0.85,1)" x="0" y="0" font-size="8.6" fill="#e8ebed" font-weight="bold" text-anchor="end">1.0</text>
<rect x="482.6" y="563.9" width="362.69999999999993" height="1.2" fill="#9aa1a7" fill-opacity="0.55"/>
<text transform="translate(479.4,567.8) scale(0.85,1)" x="0" y="0" font-size="8.6" fill="#e8ebed" font-weight="bold" text-anchor="end">0.8</text>
<rect x="482.6" y="595.6" width="362.69999999999993" height="1.2" fill="#9aa1a7" fill-opacity="0.55"/>
<text transform="translate(479.4,599.5) scale(0.85,1)" x="0" y="0" font-size="8.6" fill="#e8ebed" font-weight="bold" text-anchor="end">0.6</text>
<rect x="482.6" y="627.4" width="362.69999999999993" height="1.2" fill="#9aa1a7" fill-opacity="0.55"/>
<text transform="translate(479.4,631.3) scale(0.85,1)" x="0" y="0" font-size="8.6" fill="#e8ebed" font-weight="bold" text-anchor="end">0.4</text>
<rect x="482.6" y="659.1" width="362.69999999999993" height="1.2" fill="#9aa1a7" fill-opacity="0.55"/>
<text transform="translate(479.4,663.0) scale(0.85,1)" x="0" y="0" font-size="8.6" fill="#e8ebed" font-weight="bold" text-anchor="end">0.2</text>
<rect x="482.6" y="690.8" width="362.69999999999993" height="1.2" fill="#9aa1a7" fill-opacity="0.55"/>
<text transform="translate(479.4,694.7) scale(0.85,1)" x="0" y="0" font-size="8.6" fill="#e8ebed" font-weight="bold" text-anchor="end">0</text>
<rect x="484.0" y="528" width="1.2" height="170" fill="#9aa1a7" fill-opacity="0.7"/>
<rect x="482.6" y="690.7" width="362.7" height="1.4" fill="#a9b0b5"/>
<rect x="517.6" y="691.4" width="1.0" height="7.0" fill="#a9b0b5"/>
<text transform="translate(514.6,708) scale(0.78,1)" x="0" y="0" font-size="8.8" fill="#e8ebed" font-weight="bold" text-anchor="middle">10kHz</text>
<rect x="553.6" y="691.4" width="1.0" height="7.0" fill="#a9b0b5"/>
<text transform="translate(550.6,708) scale(0.78,1)" x="0" y="0" font-size="8.8" fill="#e8ebed" font-weight="bold" text-anchor="middle">20kHz</text>
<rect x="589.6" y="691.4" width="1.0" height="7.0" fill="#a9b0b5"/>
<text transform="translate(586.6,708) scale(0.78,1)" x="0" y="0" font-size="8.8" fill="#e8ebed" font-weight="bold" text-anchor="middle">30kHz</text>
<rect x="625.6" y="691.4" width="1.0" height="7.0" fill="#a9b0b5"/>
<text transform="translate(622.6,708) scale(0.78,1)" x="0" y="0" font-size="8.8" fill="#e8ebed" font-weight="bold" text-anchor="middle">40kHz</text>
<rect x="661.6" y="691.4" width="1.0" height="7.0" fill="#a9b0b5"/>
<text transform="translate(658.6,708) scale(0.78,1)" x="0" y="0" font-size="8.8" fill="#e8ebed" font-weight="bold" text-anchor="middle">50kHz</text>
<rect x="697.6" y="691.4" width="1.0" height="7.0" fill="#a9b0b5"/>
<text transform="translate(694.6,708) scale(0.78,1)" x="0" y="0" font-size="8.8" fill="#e8ebed" font-weight="bold" text-anchor="middle">60kHz</text>
<rect x="733.6" y="691.4" width="1.0" height="7.0" fill="#a9b0b5"/>
<text transform="translate(730.6,708) scale(0.78,1)" x="0" y="0" font-size="8.8" fill="#e8ebed" font-weight="bold" text-anchor="middle">70kHz</text>
<rect x="769.6" y="691.4" width="1.0" height="7.0" fill="#a9b0b5"/>
<text transform="translate(766.6,708) scale(0.78,1)" x="0" y="0" font-size="8.8" fill="#e8ebed" font-weight="bold" text-anchor="middle">80kHz</text>
<rect x="805.6" y="691.4" width="1.0" height="7.0" fill="#a9b0b5"/>
<text transform="translate(802.6,708) scale(0.78,1)" x="0" y="0" font-size="8.8" fill="#e8ebed" font-weight="bold" text-anchor="middle">90kHz</text>
<rect x="841.6" y="691.4" width="1.0" height="7.0" fill="#a9b0b5"/>
<text transform="translate(838.6,708) scale(0.78,1)" x="0" y="0" font-size="8.8" fill="#e8ebed" font-weight="bold" text-anchor="middle">100kHz</text>
<rect x="751.3" y="691.4" width="1.6" height="16.6" fill="#f0401a"/>
<text transform="translate(750.6,718.5) scale(0.78,1)" x="0" y="0" font-size="8.8" fill="#e8401c" font-weight="bold" text-anchor="middle">75kHz</text>
<rect x="1255.3" y="469.2" width="379.20000000000005" height="253.8" rx="4" fill="#12171c"/>
<path d="M1255.3 483.3 L1255.3 473.2 Q1255.3 469.2 1259.3 469.2 L1630.5 469.2 Q1634.5 469.2 1634.5 473.2 L1634.5 483.3 Z" fill="#5b7590"/>
<text x="1259.5" y="480" font-size="10" fill="#eef2f5" textLength="226.5" lengthAdjust="spacingAndGlyphs" stroke="#eef2f5" stroke-width="0.3">MPX-2 DEVIATION HISTOGRAM ( REF: +6.0 dB )</text>
<rect x="1266.8" y="495.8" width="26.8" height="15" fill="#dcdcdc" stroke="#f5f5f5" stroke-width="0.8"/>
<text x="1280.2" y="506" font-size="8.5" fill="#8b8b8b" text-anchor="middle" textLength="19" lengthAdjust="spacingAndGlyphs">reset</text>
<text x="1307.8" y="506.7" font-size="10.5" fill="#e9a21a" textLength="41.6" lengthAdjust="spacingAndGlyphs" stroke="#e9a21a" stroke-width="0.3">Samples:</text>
<text x="1351.6" y="506.7" font-size="10.5" fill="#f2f4f5" textLength="21.8" lengthAdjust="spacingAndGlyphs" stroke="#f2f4f5" stroke-width="0.3">3154</text>
<text x="1382.2" y="506.7" font-size="10.5" fill="#e9a21a" textLength="40.5" lengthAdjust="spacingAndGlyphs" stroke="#e9a21a" stroke-width="0.3">Duration:</text>
<text x="1425.5" y="506.7" font-size="10.5" fill="#f2f4f5" textLength="45.3" lengthAdjust="spacingAndGlyphs" stroke="#f2f4f5" stroke-width="0.3">00:13':08"</text>
<text x="1496" y="506.7" font-size="10.5" fill="#e9a21a" textLength="57.3" lengthAdjust="spacingAndGlyphs" stroke="#e9a21a" stroke-width="0.3">Date &amp; Time:</text>
<text x="1559.4" y="506.7" font-size="10.5" fill="#f2f4f5" textLength="49.2" lengthAdjust="spacingAndGlyphs" stroke="#f2f4f5" stroke-width="0.3">19/08/2024</text>
<rect x="1270.3999999999999" y="532.1999999999999" width="362.70000000000005" height="1.2" fill="#9aa1a7" fill-opacity="0.55"/>
<text transform="translate(1267.2,536.1) scale(0.85,1)" x="0" y="0" font-size="8.6" fill="#e8ebed" font-weight="bold" text-anchor="end">1.0</text>
<rect x="1270.3999999999999" y="563.9" width="362.70000000000005" height="1.2" fill="#9aa1a7" fill-opacity="0.55"/>
<text transform="translate(1267.2,567.8) scale(0.85,1)" x="0" y="0" font-size="8.6" fill="#e8ebed" font-weight="bold" text-anchor="end">0.8</text>
<rect x="1270.3999999999999" y="595.6" width="362.70000000000005" height="1.2" fill="#9aa1a7" fill-opacity="0.55"/>
<text transform="translate(1267.2,599.5) scale(0.85,1)" x="0" y="0" font-size="8.6" fill="#e8ebed" font-weight="bold" text-anchor="end">0.6</text>
<rect x="1270.3999999999999" y="627.4" width="362.70000000000005" height="1.2" fill="#9aa1a7" fill-opacity="0.55"/>
<text transform="translate(1267.2,631.3) scale(0.85,1)" x="0" y="0" font-size="8.6" fill="#e8ebed" font-weight="bold" text-anchor="end">0.4</text>
<rect x="1270.3999999999999" y="659.1" width="362.70000000000005" height="1.2" fill="#9aa1a7" fill-opacity="0.55"/>
<text transform="translate(1267.2,663.0) scale(0.85,1)" x="0" y="0" font-size="8.6" fill="#e8ebed" font-weight="bold" text-anchor="end">0.2</text>
<rect x="1270.3999999999999" y="690.8" width="362.70000000000005" height="1.2" fill="#9aa1a7" fill-opacity="0.55"/>
<text transform="translate(1267.2,694.7) scale(0.85,1)" x="0" y="0" font-size="8.6" fill="#e8ebed" font-weight="bold" text-anchor="end">0</text>
<rect x="1271.8" y="528" width="1.2" height="170" fill="#9aa1a7" fill-opacity="0.7"/>
<rect x="1270.4" y="690.7" width="362.7" height="1.4" fill="#a9b0b5"/>
<rect x="1305.4" y="691.4" width="1.0" height="7.0" fill="#a9b0b5"/>
<text transform="translate(1302.4,708) scale(0.78,1)" x="0" y="0" font-size="8.8" fill="#e8ebed" font-weight="bold" text-anchor="middle">10kHz</text>
<rect x="1341.4" y="691.4" width="1.0" height="7.0" fill="#a9b0b5"/>
<text transform="translate(1338.4,708) scale(0.78,1)" x="0" y="0" font-size="8.8" fill="#e8ebed" font-weight="bold" text-anchor="middle">20kHz</text>
<rect x="1377.4" y="691.4" width="1.0" height="7.0" fill="#a9b0b5"/>
<text transform="translate(1374.4,708) scale(0.78,1)" x="0" y="0" font-size="8.8" fill="#e8ebed" font-weight="bold" text-anchor="middle">30kHz</text>
<rect x="1413.4" y="691.4" width="1.0" height="7.0" fill="#a9b0b5"/>
<text transform="translate(1410.4,708) scale(0.78,1)" x="0" y="0" font-size="8.8" fill="#e8ebed" font-weight="bold" text-anchor="middle">40kHz</text>
<rect x="1449.4" y="691.4" width="1.0" height="7.0" fill="#a9b0b5"/>
<text transform="translate(1446.4,708) scale(0.78,1)" x="0" y="0" font-size="8.8" fill="#e8ebed" font-weight="bold" text-anchor="middle">50kHz</text>
<rect x="1485.4" y="691.4" width="1.0" height="7.0" fill="#a9b0b5"/>
<text transform="translate(1482.4,708) scale(0.78,1)" x="0" y="0" font-size="8.8" fill="#e8ebed" font-weight="bold" text-anchor="middle">60kHz</text>
<rect x="1521.4" y="691.4" width="1.0" height="7.0" fill="#a9b0b5"/>
<text transform="translate(1518.4,708) scale(0.78,1)" x="0" y="0" font-size="8.8" fill="#e8ebed" font-weight="bold" text-anchor="middle">70kHz</text>
<rect x="1557.4" y="691.4" width="1.0" height="7.0" fill="#a9b0b5"/>
<text transform="translate(1554.4,708) scale(0.78,1)" x="0" y="0" font-size="8.8" fill="#e8ebed" font-weight="bold" text-anchor="middle">80kHz</text>
<rect x="1593.4" y="691.4" width="1.0" height="7.0" fill="#a9b0b5"/>
<text transform="translate(1590.4,708) scale(0.78,1)" x="0" y="0" font-size="8.8" fill="#e8ebed" font-weight="bold" text-anchor="middle">90kHz</text>
<rect x="1629.4" y="691.4" width="1.0" height="7.0" fill="#a9b0b5"/>
<text transform="translate(1626.4,708) scale(0.78,1)" x="0" y="0" font-size="8.8" fill="#e8ebed" font-weight="bold" text-anchor="middle">100kHz</text>
<rect x="1539.1" y="691.4" width="1.6" height="16.6" fill="#f0401a"/>
<text transform="translate(1538.4,718.5) scale(0.78,1)" x="0" y="0" font-size="8.8" fill="#e8401c" font-weight="bold" text-anchor="middle">75kHz</text>
<rect x="860.9" y="469.2" width="379.1" height="14" fill="#5b7590"/>
<text x="865.5" y="480.1" font-size="10.5" fill="#eef2f5" textLength="30" lengthAdjust="spacingAndGlyphs" stroke="#eef2f5" stroke-width="0.3">MPX-1</text>
<rect x="860.9" y="483.2" width="379.1" height="28.6" fill="#12171c"/>
<rect x="897.0" y="488.5" width="2.1" height="9.8" fill="#f7a81c" rx="0.5"/>
<rect x="900.6" y="488.5" width="2.1" height="9.8" fill="#f7a81c" rx="0.5"/>
<rect x="904.2" y="488.5" width="2.1" height="9.8" fill="#f7a81c" rx="0.5"/>
<rect x="907.8" y="488.5" width="2.1" height="9.8" fill="#f7a81c" rx="0.5"/>
<rect x="911.4" y="488.5" width="2.1" height="9.8" fill="#f7a81c" rx="0.5"/>
<rect x="915.0" y="488.5" width="2.1" height="9.8" fill="#f7a81c" rx="0.5"/>
<rect x="918.6" y="488.5" width="2.1" height="9.8" fill="#f7a81c" rx="0.5"/>
<rect x="922.2" y="488.5" width="2.1" height="9.8" fill="#f7a81c" rx="0.5"/>
<rect x="925.8" y="488.5" width="2.1" height="9.8" fill="#f7a81c" rx="0.5"/>
<rect x="929.4" y="488.5" width="2.1" height="9.8" fill="#f7a81c" rx="0.5"/>
<rect x="933.0" y="488.5" width="2.1" height="9.8" fill="#f7a81c" rx="0.5"/>
<rect x="936.6" y="488.5" width="2.1" height="9.8" fill="#f7a81c" rx="0.5"/>
<rect x="940.2" y="488.5" width="2.1" height="9.8" fill="#f7a81c" rx="0.5"/>
<rect x="943.8" y="488.5" width="2.1" height="9.8" fill="#f7a81c" rx="0.5"/>
<rect x="947.4" y="488.5" width="2.1" height="9.8" fill="#f7a81c" rx="0.5"/>
<rect x="951.0" y="488.5" width="2.1" height="9.8" fill="#f7a81c" rx="0.5"/>
<rect x="954.6" y="488.5" width="2.1" height="9.8" fill="#f7a81c" rx="0.5"/>
<rect x="958.2" y="488.5" width="2.1" height="9.8" fill="#f7a81c" rx="0.5"/>
<rect x="961.8" y="488.5" width="2.1" height="9.8" fill="#f7a81c" rx="0.5"/>
<rect x="965.4" y="488.5" width="2.1" height="9.8" fill="#f7a81c" rx="0.5"/>
<rect x="969.0" y="488.5" width="2.1" height="9.8" fill="#f7a81c" rx="0.5"/>
<rect x="972.6" y="488.5" width="2.1" height="9.8" fill="#f7a81c" rx="0.5"/>
<rect x="976.2" y="488.5" width="2.1" height="9.8" fill="#f7a81c" rx="0.5"/>
<rect x="979.8" y="488.5" width="2.1" height="9.8" fill="#f7a81c" rx="0.5"/>
<rect x="983.4" y="488.5" width="2.1" height="9.8" fill="#f7a81c" rx="0.5"/>
<rect x="987.0" y="488.5" width="2.1" height="9.8" fill="#f7a81c" rx="0.5"/>
<rect x="990.6" y="488.5" width="2.1" height="9.8" fill="#f7a81c" rx="0.5"/>
<rect x="994.2" y="488.5" width="2.1" height="9.8" fill="#f7a81c" rx="0.5"/>
<rect x="997.8" y="488.5" width="2.1" height="9.8" fill="#f7a81c" rx="0.5"/>
<rect x="1001.4" y="488.5" width="2.1" height="9.8" fill="#f7a81c" rx="0.5"/>
<rect x="1005.0" y="488.5" width="2.1" height="9.8" fill="#f7a81c" rx="0.5"/>
<rect x="1008.6" y="488.5" width="2.1" height="9.8" fill="#f7a81c" rx="0.5"/>
<rect x="1012.2" y="488.5" width="2.1" height="9.8" fill="#f7a81c" rx="0.5"/>
<rect x="1015.8" y="488.5" width="2.1" height="9.8" fill="#f7a81c" rx="0.5"/>
<rect x="1019.4" y="488.5" width="2.1" height="9.8" fill="#f7a81c" rx="0.5"/>
<rect x="1023.0" y="488.5" width="2.1" height="9.8" fill="#f7a81c" rx="0.5"/>
<rect x="1026.6" y="488.5" width="2.1" height="9.8" fill="#f7a81c" rx="0.5"/>
<rect x="1030.2" y="488.5" width="2.1" height="9.8" fill="#f7a81c" rx="0.5"/>
<rect x="1033.8" y="488.5" width="2.1" height="9.8" fill="#f7a81c" rx="0.5"/>
<rect x="1037.4" y="488.5" width="2.1" height="9.8" fill="#f7a81c" rx="0.5"/>
<rect x="1041.0" y="488.5" width="2.1" height="9.8" fill="#f7a81c" rx="0.5"/>
<rect x="1044.6" y="488.5" width="2.1" height="9.8" fill="#f7a81c" rx="0.5"/>
<rect x="1048.2" y="488.5" width="2.1" height="9.8" fill="#f7a81c" rx="0.5"/>
<rect x="1051.8" y="488.5" width="2.1" height="9.8" fill="#f7a81c" rx="0.5"/>
<rect x="1055.4" y="488.5" width="2.1" height="9.8" fill="#f7a81c" rx="0.5"/>
<rect x="1059.0" y="488.5" width="2.1" height="9.8" fill="#f7a81c" rx="0.5"/>
<rect x="1062.6" y="488.5" width="2.1" height="9.8" fill="#f7a81c" rx="0.5"/>
<rect x="1066.2" y="488.5" width="2.1" height="9.8" fill="#f7a81c" rx="0.5"/>
<rect x="1069.8" y="488.5" width="2.1" height="9.8" fill="#f7a81c" rx="0.5"/>
<rect x="1073.4" y="488.5" width="2.1" height="9.8" fill="#f7a81c" rx="0.5"/>
<rect x="1077.0" y="488.5" width="2.1" height="9.8" fill="#f7a81c" rx="0.5"/>
<rect x="1080.6" y="488.5" width="2.1" height="9.8" fill="#f7a81c" rx="0.5"/>
<rect x="1084.2" y="488.5" width="2.1" height="9.8" fill="#f7a81c" rx="0.5"/>
<rect x="1087.8" y="488.5" width="2.1" height="9.8" fill="#f7a81c" rx="0.5"/>
<rect x="1091.4" y="488.5" width="2.1" height="9.8" fill="#f7a81c" rx="0.5"/>
<rect x="1095.0" y="488.5" width="2.1" height="9.8" fill="#f7a81c" rx="0.5"/>
<rect x="1098.6" y="488.5" width="2.1" height="9.8" fill="#f7a81c" rx="0.5"/>
<rect x="1102.2" y="488.5" width="2.1" height="9.8" fill="#f7a81c" rx="0.5"/>
<rect x="1105.8" y="488.5" width="2.1" height="9.8" fill="#f7a81c" rx="0.5"/>
<rect x="1109.4" y="488.5" width="2.1" height="9.8" fill="#f7a81c" rx="0.5"/>
<rect x="1113.0" y="488.5" width="2.1" height="9.8" fill="#f7a81c" rx="0.5"/>
<rect x="1116.6" y="488.5" width="2.1" height="9.8" fill="#f7a81c" rx="0.5"/>
<rect x="1120.2" y="488.5" width="2.1" height="9.8" fill="#f7a81c" rx="0.5"/>
<rect x="1123.8" y="488.5" width="2.1" height="9.8" fill="#f7a81c" rx="0.5"/>
<rect x="1127.4" y="488.5" width="2.1" height="9.8" fill="#f7a81c" rx="0.5"/>
<rect x="1131.0" y="488.5" width="2.1" height="9.8" fill="#343b41" rx="0.5"/>
<rect x="1134.6" y="488.5" width="2.1" height="9.8" fill="#343b41" rx="0.5"/>
<rect x="1138.2" y="488.5" width="2.1" height="9.8" fill="#343b41" rx="0.5"/>
<rect x="1141.8" y="488.5" width="2.1" height="9.8" fill="#343b41" rx="0.5"/>
<rect x="1145.4" y="488.5" width="2.1" height="9.8" fill="#343b41" rx="0.5"/>
<rect x="1149.0" y="488.5" width="2.1" height="9.8" fill="#343b41" rx="0.5"/>
<rect x="1152.6" y="488.5" width="2.1" height="9.8" fill="#343b41" rx="0.5"/>
<rect x="1156.2" y="488.5" width="2.1" height="9.8" fill="#e8161a" rx="0.5"/>
<rect x="1159.8" y="488.5" width="2.1" height="9.8" fill="#343b41" rx="0.5"/>
<rect x="1163.4" y="488.5" width="2.1" height="9.8" fill="#343b41" rx="0.5"/>
<rect x="1167.0" y="488.5" width="2.1" height="9.8" fill="#343b41" rx="0.5"/>
<rect x="1170.6" y="488.5" width="2.1" height="9.8" fill="#343b41" rx="0.5"/>
<rect x="1174.2" y="488.5" width="2.1" height="9.8" fill="#343b41" rx="0.5"/>
<rect x="1177.8" y="488.5" width="2.1" height="9.8" fill="#343b41" rx="0.5"/>
<rect x="1181.4" y="488.5" width="2.1" height="9.8" fill="#343b41" rx="0.5"/>
<rect x="1185.0" y="488.5" width="2.1" height="9.8" fill="#343b41" rx="0.5"/>
<rect x="1188.6" y="488.5" width="2.1" height="9.8" fill="#343b41" rx="0.5"/>
<rect x="1192.2" y="488.5" width="2.1" height="9.8" fill="#343b41" rx="0.5"/>
<rect x="1195.8" y="488.5" width="2.1" height="9.8" fill="#343b41" rx="0.5"/>
<rect x="1199.4" y="488.5" width="2.1" height="9.8" fill="#343b41" rx="0.5"/>
<rect x="1203.0" y="488.5" width="2.1" height="9.8" fill="#343b41" rx="0.5"/>
<rect x="1206.6" y="488.5" width="2.1" height="9.8" fill="#343b41" rx="0.5"/>
<rect x="1210.2" y="488.5" width="2.1" height="9.8" fill="#343b41" rx="0.5"/>
<rect x="1213.8" y="488.5" width="2.1" height="9.8" fill="#343b41" rx="0.5"/>
<rect x="1217.4" y="488.5" width="2.1" height="9.8" fill="#343b41" rx="0.5"/>
<rect x="1221.0" y="488.5" width="2.1" height="9.8" fill="#343b41" rx="0.5"/>
<rect x="1224.6" y="488.5" width="2.1" height="9.8" fill="#343b41" rx="0.5"/>
<rect x="1228.2" y="488.5" width="2.1" height="9.8" fill="#343b41" rx="0.5"/>
<rect x="1231.8" y="488.5" width="2.1" height="9.8" fill="#343b41" rx="0.5"/>
<text transform="translate(881.5,495.95) scale(0.85,1)" x="0" y="0" font-size="9.2" fill="#e9a21a" font-weight="bold" text-anchor="end">78.5</text>
<text transform="translate(867.7,507.2) scale(0.85,1)" x="0" y="0" font-size="9.8" fill="#eef0f2" font-weight="bold">kHz</text>
<text transform="translate(895.8,508.8) scale(0.8,1)" x="0" y="0" font-size="8.6" fill="#eef0f2" font-weight="bold" text-anchor="middle">0</text>
<rect x="911.9" y="502.8" width="1" height="5" fill="#5d646a"/>
<text transform="translate(929.13,508.8) scale(0.8,1)" x="0" y="0" font-size="8.6" fill="#eef0f2" font-weight="bold" text-anchor="middle">10</text>
<rect x="945.23" y="502.8" width="1" height="5" fill="#5d646a"/>
<text transform="translate(962.46,508.8) scale(0.8,1)" x="0" y="0" font-size="8.6" fill="#eef0f2" font-weight="bold" text-anchor="middle">20</text>
<rect x="978.56" y="502.8" width="1" height="5" fill="#5d646a"/>
<text transform="translate(995.79,508.8) scale(0.8,1)" x="0" y="0" font-size="8.6" fill="#eef0f2" font-weight="bold" text-anchor="middle">30</text>
<rect x="1011.89" y="502.8" width="1" height="5" fill="#5d646a"/>
<text transform="translate(1029.12,508.8) scale(0.8,1)" x="0" y="0" font-size="8.6" fill="#eef0f2" font-weight="bold" text-anchor="middle">40</text>
<rect x="1045.22" y="502.8" width="1" height="5" fill="#5d646a"/>
<text transform="translate(1062.45,508.8) scale(0.8,1)" x="0" y="0" font-size="8.6" fill="#eef0f2" font-weight="bold" text-anchor="middle">50</text>
<rect x="1078.55" y="502.8" width="1" height="5" fill="#5d646a"/>
<text transform="translate(1095.78,508.8) scale(0.8,1)" x="0" y="0" font-size="8.6" fill="#eef0f2" font-weight="bold" text-anchor="middle">60</text>
<rect x="1111.88" y="502.8" width="1" height="5" fill="#5d646a"/>
<text transform="translate(1129.11,508.8) scale(0.8,1)" x="0" y="0" font-size="8.6" fill="#eef0f2" font-weight="bold" text-anchor="middle">70</text>
<rect x="1145.21" y="502.8" width="1" height="5" fill="#5d646a"/>
<text transform="translate(1162.44,508.8) scale(0.8,1)" x="0" y="0" font-size="8.6" fill="#eef0f2" font-weight="bold" text-anchor="middle">80</text>
<rect x="1178.54" y="502.8" width="1" height="5" fill="#5d646a"/>
<text transform="translate(1195.77,508.8) scale(0.8,1)" x="0" y="0" font-size="8.6" fill="#eef0f2" font-weight="bold" text-anchor="middle">90</text>
<rect x="1211.87" y="502.8" width="1" height="5" fill="#5d646a"/>
<text transform="translate(1229.1,508.8) scale(0.8,1)" x="0" y="0" font-size="8.6" fill="#eef0f2" font-weight="bold" text-anchor="middle">100</text>
<rect x="860.9" y="512.3" width="379.1" height="14" fill="#5b7590"/>
<text x="865.5" y="523.2" font-size="10.5" fill="#eef2f5" textLength="28.7" lengthAdjust="spacingAndGlyphs" stroke="#eef2f5" stroke-width="0.3">PILOT</text>
<rect x="860.9" y="526.3" width="379.1" height="28.6" fill="#12171c"/>
<rect x="897.0" y="531.6" width="2.1" height="9.8" fill="#f7a81c" rx="0.5"/>
<rect x="900.6" y="531.6" width="2.1" height="9.8" fill="#f7a81c" rx="0.5"/>
<rect x="904.2" y="531.6" width="2.1" height="9.8" fill="#f7a81c" rx="0.5"/>
<rect x="907.8" y="531.6" width="2.1" height="9.8" fill="#f7a81c" rx="0.5"/>
<rect x="911.4" y="531.6" width="2.1" height="9.8" fill="#f7a81c" rx="0.5"/>
<rect x="915.0" y="531.6" width="2.1" height="9.8" fill="#f7a81c" rx="0.5"/>
<rect x="918.6" y="531.6" width="2.1" height="9.8" fill="#f7a81c" rx="0.5"/>
<rect x="922.2" y="531.6" width="2.1" height="9.8" fill="#f7a81c" rx="0.5"/>
<rect x="925.8" y="531.6" width="2.1" height="9.8" fill="#f7a81c" rx="0.5"/>
<rect x="929.4" y="531.6" width="2.1" height="9.8" fill="#f7a81c" rx="0.5"/>
<rect x="933.0" y="531.6" width="2.1" height="9.8" fill="#f7a81c" rx="0.5"/>
<rect x="936.6" y="531.6" width="2.1" height="9.8" fill="#f7a81c" rx="0.5"/>
<rect x="940.2" y="531.6" width="2.1" height="9.8" fill="#f7a81c" rx="0.5"/>
<rect x="943.8" y="531.6" width="2.1" height="9.8" fill="#f7a81c" rx="0.5"/>
<rect x="947.4" y="531.6" width="2.1" height="9.8" fill="#f7a81c" rx="0.5"/>
<rect x="951.0" y="531.6" width="2.1" height="9.8" fill="#f7a81c" rx="0.5"/>
<rect x="954.6" y="531.6" width="2.1" height="9.8" fill="#f7a81c" rx="0.5"/>
<rect x="958.2" y="531.6" width="2.1" height="9.8" fill="#f7a81c" rx="0.5"/>
<rect x="961.8" y="531.6" width="2.1" height="9.8" fill="#f7a81c" rx="0.5"/>
<rect x="965.4" y="531.6" width="2.1" height="9.8" fill="#f7a81c" rx="0.5"/>
<rect x="969.0" y="531.6" width="2.1" height="9.8" fill="#f7a81c" rx="0.5"/>
<rect x="972.6" y="531.6" width="2.1" height="9.8" fill="#f7a81c" rx="0.5"/>
<rect x="976.2" y="531.6" width="2.1" height="9.8" fill="#f7a81c" rx="0.5"/>
<rect x="979.8" y="531.6" width="2.1" height="9.8" fill="#f7a81c" rx="0.5"/>
<rect x="983.4" y="531.6" width="2.1" height="9.8" fill="#f7a81c" rx="0.5"/>
<rect x="987.0" y="531.6" width="2.1" height="9.8" fill="#f7a81c" rx="0.5"/>
<rect x="990.6" y="531.6" width="2.1" height="9.8" fill="#f7a81c" rx="0.5"/>
<rect x="994.2" y="531.6" width="2.1" height="9.8" fill="#f7a81c" rx="0.5"/>
<rect x="997.8" y="531.6" width="2.1" height="9.8" fill="#f7a81c" rx="0.5"/>
<rect x="1001.4" y="531.6" width="2.1" height="9.8" fill="#f7a81c" rx="0.5"/>
<rect x="1005.0" y="531.6" width="2.1" height="9.8" fill="#f7a81c" rx="0.5"/>
<rect x="1008.6" y="531.6" width="2.1" height="9.8" fill="#f7a81c" rx="0.5"/>
<rect x="1012.2" y="531.6" width="2.1" height="9.8" fill="#f7a81c" rx="0.5"/>
<rect x="1015.8" y="531.6" width="2.1" height="9.8" fill="#f7a81c" rx="0.5"/>
<rect x="1019.4" y="531.6" width="2.1" height="9.8" fill="#f7a81c" rx="0.5"/>
<rect x="1023.0" y="531.6" width="2.1" height="9.8" fill="#f7a81c" rx="0.5"/>
<rect x="1026.6" y="531.6" width="2.1" height="9.8" fill="#f7a81c" rx="0.5"/>
<rect x="1030.2" y="531.6" width="2.1" height="9.8" fill="#f7a81c" rx="0.5"/>
<rect x="1033.8" y="531.6" width="2.1" height="9.8" fill="#f7a81c" rx="0.5"/>
<rect x="1037.4" y="531.6" width="2.1" height="9.8" fill="#f7a81c" rx="0.5"/>
<rect x="1041.0" y="531.6" width="2.1" height="9.8" fill="#f7a81c" rx="0.5"/>
<rect x="1044.6" y="531.6" width="2.1" height="9.8" fill="#f7a81c" rx="0.5"/>
<rect x="1048.2" y="531.6" width="2.1" height="9.8" fill="#f7a81c" rx="0.5"/>
<rect x="1051.8" y="531.6" width="2.1" height="9.8" fill="#f7a81c" rx="0.5"/>
<rect x="1055.4" y="531.6" width="2.1" height="9.8" fill="#f7a81c" rx="0.5"/>
<rect x="1059.0" y="531.6" width="2.1" height="9.8" fill="#f7a81c" rx="0.5"/>
<rect x="1062.6" y="531.6" width="2.1" height="9.8" fill="#f7a81c" rx="0.5"/>
<rect x="1066.2" y="531.6" width="2.1" height="9.8" fill="#f7a81c" rx="0.5"/>
<rect x="1069.8" y="531.6" width="2.1" height="9.8" fill="#f7a81c" rx="0.5"/>
<rect x="1073.4" y="531.6" width="2.1" height="9.8" fill="#f7a81c" rx="0.5"/>
<rect x="1077.0" y="531.6" width="2.1" height="9.8" fill="#f7a81c" rx="0.5"/>
<rect x="1080.6" y="531.6" width="2.1" height="9.8" fill="#f7a81c" rx="0.5"/>
<rect x="1084.2" y="531.6" width="2.1" height="9.8" fill="#f7a81c" rx="0.5"/>
<rect x="1087.8" y="531.6" width="2.1" height="9.8" fill="#f7a81c" rx="0.5"/>
<rect x="1091.4" y="531.6" width="2.1" height="9.8" fill="#f7a81c" rx="0.5"/>
<rect x="1095.0" y="531.6" width="2.1" height="9.8" fill="#f7a81c" rx="0.5"/>
<rect x="1098.6" y="531.6" width="2.1" height="9.8" fill="#f7a81c" rx="0.5"/>
<rect x="1102.2" y="531.6" width="2.1" height="9.8" fill="#f7a81c" rx="0.5"/>
<rect x="1105.8" y="531.6" width="2.1" height="9.8" fill="#f7a81c" rx="0.5"/>
<rect x="1109.4" y="531.6" width="2.1" height="9.8" fill="#f7a81c" rx="0.5"/>
<rect x="1113.0" y="531.6" width="2.1" height="9.8" fill="#f7a81c" rx="0.5"/>
<rect x="1116.6" y="531.6" width="2.1" height="9.8" fill="#f7a81c" rx="0.5"/>
<rect x="1120.2" y="531.6" width="2.1" height="9.8" fill="#f7a81c" rx="0.5"/>
<rect x="1123.8" y="531.6" width="2.1" height="9.8" fill="#f7a81c" rx="0.5"/>
<rect x="1127.4" y="531.6" width="2.1" height="9.8" fill="#f7a81c" rx="0.5"/>
<rect x="1131.0" y="531.6" width="2.1" height="9.8" fill="#f7a81c" rx="0.5"/>
<rect x="1134.6" y="531.6" width="2.1" height="9.8" fill="#f7a81c" rx="0.5"/>
<rect x="1138.2" y="531.6" width="2.1" height="9.8" fill="#f7a81c" rx="0.5"/>
<rect x="1141.8" y="531.6" width="2.1" height="9.8" fill="#f7a81c" rx="0.5"/>
<rect x="1145.4" y="531.6" width="2.1" height="9.8" fill="#343b41" rx="0.5"/>
<rect x="1149.0" y="531.6" width="2.1" height="9.8" fill="#343b41" rx="0.5"/>
<rect x="1152.6" y="531.6" width="2.1" height="9.8" fill="#343b41" rx="0.5"/>
<rect x="1156.2" y="531.6" width="2.1" height="9.8" fill="#343b41" rx="0.5"/>
<rect x="1159.8" y="531.6" width="2.1" height="9.8" fill="#343b41" rx="0.5"/>
<rect x="1163.4" y="531.6" width="2.1" height="9.8" fill="#343b41" rx="0.5"/>
<rect x="1167.0" y="531.6" width="2.1" height="9.8" fill="#343b41" rx="0.5"/>
<rect x="1170.6" y="531.6" width="2.1" height="9.8" fill="#343b41" rx="0.5"/>
<rect x="1174.2" y="531.6" width="2.1" height="9.8" fill="#343b41" rx="0.5"/>
<rect x="1177.8" y="531.6" width="2.1" height="9.8" fill="#343b41" rx="0.5"/>
<rect x="1181.4" y="531.6" width="2.1" height="9.8" fill="#343b41" rx="0.5"/>
<rect x="1185.0" y="531.6" width="2.1" height="9.8" fill="#343b41" rx="0.5"/>
<rect x="1188.6" y="531.6" width="2.1" height="9.8" fill="#343b41" rx="0.5"/>
<rect x="1192.2" y="531.6" width="2.1" height="9.8" fill="#343b41" rx="0.5"/>
<rect x="1195.8" y="531.6" width="2.1" height="9.8" fill="#343b41" rx="0.5"/>
<rect x="1199.4" y="531.6" width="2.1" height="9.8" fill="#343b41" rx="0.5"/>
<rect x="1203.0" y="531.6" width="2.1" height="9.8" fill="#343b41" rx="0.5"/>
<rect x="1206.6" y="531.6" width="2.1" height="9.8" fill="#343b41" rx="0.5"/>
<rect x="1210.2" y="531.6" width="2.1" height="9.8" fill="#343b41" rx="0.5"/>
<rect x="1213.8" y="531.6" width="2.1" height="9.8" fill="#343b41" rx="0.5"/>
<rect x="1217.4" y="531.6" width="2.1" height="9.8" fill="#343b41" rx="0.5"/>
<rect x="1221.0" y="531.6" width="2.1" height="9.8" fill="#343b41" rx="0.5"/>
<rect x="1224.6" y="531.6" width="2.1" height="9.8" fill="#343b41" rx="0.5"/>
<rect x="1228.2" y="531.6" width="2.1" height="9.8" fill="#343b41" rx="0.5"/>
<rect x="1231.8" y="531.6" width="2.1" height="9.8" fill="#343b41" rx="0.5"/>
<text transform="translate(881.5,539.05) scale(0.85,1)" x="0" y="0" font-size="9.2" fill="#e9a21a" font-weight="bold" text-anchor="end">7.5</text>
<text transform="translate(867.7,550.3) scale(0.85,1)" x="0" y="0" font-size="9.8" fill="#eef0f2" font-weight="bold">kHz</text>
<text transform="translate(895.8,551.9) scale(0.8,1)" x="0" y="0" font-size="8.6" fill="#eef0f2" font-weight="bold" text-anchor="middle">0</text>
<rect x="911.9" y="545.9" width="1" height="5" fill="#5d646a"/>
<text transform="translate(929.13,551.9) scale(0.8,1)" x="0" y="0" font-size="8.6" fill="#eef0f2" font-weight="bold" text-anchor="middle">1</text>
<rect x="945.23" y="545.9" width="1" height="5" fill="#5d646a"/>
<text transform="translate(962.46,551.9) scale(0.8,1)" x="0" y="0" font-size="8.6" fill="#eef0f2" font-weight="bold" text-anchor="middle">2</text>
<rect x="978.56" y="545.9" width="1" height="5" fill="#5d646a"/>
<text transform="translate(995.79,551.9) scale(0.8,1)" x="0" y="0" font-size="8.6" fill="#eef0f2" font-weight="bold" text-anchor="middle">3</text>
<rect x="1011.89" y="545.9" width="1" height="5" fill="#5d646a"/>
<text transform="translate(1029.12,551.9) scale(0.8,1)" x="0" y="0" font-size="8.6" fill="#eef0f2" font-weight="bold" text-anchor="middle">4</text>
<rect x="1045.22" y="545.9" width="1" height="5" fill="#5d646a"/>
<text transform="translate(1062.45,551.9) scale(0.8,1)" x="0" y="0" font-size="8.6" fill="#eef0f2" font-weight="bold" text-anchor="middle">5</text>
<rect x="1078.55" y="545.9" width="1" height="5" fill="#5d646a"/>
<text transform="translate(1095.78,551.9) scale(0.8,1)" x="0" y="0" font-size="8.6" fill="#eef0f2" font-weight="bold" text-anchor="middle">6</text>
<rect x="1111.88" y="545.9" width="1" height="5" fill="#5d646a"/>
<text transform="translate(1129.11,551.9) scale(0.8,1)" x="0" y="0" font-size="8.6" fill="#eef0f2" font-weight="bold" text-anchor="middle">7</text>
<rect x="1145.21" y="545.9" width="1" height="5" fill="#5d646a"/>
<text transform="translate(1162.44,551.9) scale(0.8,1)" x="0" y="0" font-size="8.6" fill="#eef0f2" font-weight="bold" text-anchor="middle">8</text>
<rect x="1178.54" y="545.9" width="1" height="5" fill="#5d646a"/>
<text transform="translate(1195.77,551.9) scale(0.8,1)" x="0" y="0" font-size="8.6" fill="#eef0f2" font-weight="bold" text-anchor="middle">9</text>
<rect x="1211.87" y="545.9" width="1" height="5" fill="#5d646a"/>
<text transform="translate(1229.1,551.9) scale(0.8,1)" x="0" y="0" font-size="8.6" fill="#eef0f2" font-weight="bold" text-anchor="middle">10</text>
<rect x="860.9" y="554.7" width="379.1" height="14" fill="#5b7590"/>
<text x="865.5" y="565.6" font-size="10.5" fill="#eef2f5" textLength="20.7" lengthAdjust="spacingAndGlyphs" stroke="#eef2f5" stroke-width="0.3">RDS</text>
<rect x="860.9" y="568.7" width="379.1" height="28.6" fill="#12171c"/>
<rect x="897.0" y="574.0" width="2.1" height="9.8" fill="#f7a81c" rx="0.5"/>
<rect x="900.6" y="574.0" width="2.1" height="9.8" fill="#f7a81c" rx="0.5"/>
<rect x="904.2" y="574.0" width="2.1" height="9.8" fill="#f7a81c" rx="0.5"/>
<rect x="907.8" y="574.0" width="2.1" height="9.8" fill="#f7a81c" rx="0.5"/>
<rect x="911.4" y="574.0" width="2.1" height="9.8" fill="#f7a81c" rx="0.5"/>
<rect x="915.0" y="574.0" width="2.1" height="9.8" fill="#f7a81c" rx="0.5"/>
<rect x="918.6" y="574.0" width="2.1" height="9.8" fill="#f7a81c" rx="0.5"/>
<rect x="922.2" y="574.0" width="2.1" height="9.8" fill="#f7a81c" rx="0.5"/>
<rect x="925.8" y="574.0" width="2.1" height="9.8" fill="#f7a81c" rx="0.5"/>
<rect x="929.4" y="574.0" width="2.1" height="9.8" fill="#f7a81c" rx="0.5"/>
<rect x="933.0" y="574.0" width="2.1" height="9.8" fill="#f7a81c" rx="0.5"/>
<rect x="936.6" y="574.0" width="2.1" height="9.8" fill="#f7a81c" rx="0.5"/>
<rect x="940.2" y="574.0" width="2.1" height="9.8" fill="#f7a81c" rx="0.5"/>
<rect x="943.8" y="574.0" width="2.1" height="9.8" fill="#f7a81c" rx="0.5"/>
<rect x="947.4" y="574.0" width="2.1" height="9.8" fill="#f7a81c" rx="0.5"/>
<rect x="951.0" y="574.0" width="2.1" height="9.8" fill="#f7a81c" rx="0.5"/>
<rect x="954.6" y="574.0" width="2.1" height="9.8" fill="#f7a81c" rx="0.5"/>
<rect x="958.2" y="574.0" width="2.1" height="9.8" fill="#f7a81c" rx="0.5"/>
<rect x="961.8" y="574.0" width="2.1" height="9.8" fill="#f7a81c" rx="0.5"/>
<rect x="965.4" y="574.0" width="2.1" height="9.8" fill="#f7a81c" rx="0.5"/>
<rect x="969.0" y="574.0" width="2.1" height="9.8" fill="#f7a81c" rx="0.5"/>
<rect x="972.6" y="574.0" width="2.1" height="9.8" fill="#f7a81c" rx="0.5"/>
<rect x="976.2" y="574.0" width="2.1" height="9.8" fill="#f7a81c" rx="0.5"/>
<rect x="979.8" y="574.0" width="2.1" height="9.8" fill="#f7a81c" rx="0.5"/>
<rect x="983.4" y="574.0" width="2.1" height="9.8" fill="#f7a81c" rx="0.5"/>
<rect x="987.0" y="574.0" width="2.1" height="9.8" fill="#f7a81c" rx="0.5"/>
<rect x="990.6" y="574.0" width="2.1" height="9.8" fill="#f7a81c" rx="0.5"/>
<rect x="994.2" y="574.0" width="2.1" height="9.8" fill="#f7a81c" rx="0.5"/>
<rect x="997.8" y="574.0" width="2.1" height="9.8" fill="#f7a81c" rx="0.5"/>
<rect x="1001.4" y="574.0" width="2.1" height="9.8" fill="#f7a81c" rx="0.5"/>
<rect x="1005.0" y="574.0" width="2.1" height="9.8" fill="#f7a81c" rx="0.5"/>
<rect x="1008.6" y="574.0" width="2.1" height="9.8" fill="#f7a81c" rx="0.5"/>
<rect x="1012.2" y="574.0" width="2.1" height="9.8" fill="#f7a81c" rx="0.5"/>
<rect x="1015.8" y="574.0" width="2.1" height="9.8" fill="#f7a81c" rx="0.5"/>
<rect x="1019.4" y="574.0" width="2.1" height="9.8" fill="#f7a81c" rx="0.5"/>
<rect x="1023.0" y="574.0" width="2.1" height="9.8" fill="#343b41" rx="0.5"/>
<rect x="1026.6" y="574.0" width="2.1" height="9.8" fill="#343b41" rx="0.5"/>
<rect x="1030.2" y="574.0" width="2.1" height="9.8" fill="#343b41" rx="0.5"/>
<rect x="1033.8" y="574.0" width="2.1" height="9.8" fill="#343b41" rx="0.5"/>
<rect x="1037.4" y="574.0" width="2.1" height="9.8" fill="#343b41" rx="0.5"/>
<rect x="1041.0" y="574.0" width="2.1" height="9.8" fill="#343b41" rx="0.5"/>
<rect x="1044.6" y="574.0" width="2.1" height="9.8" fill="#343b41" rx="0.5"/>
<rect x="1048.2" y="574.0" width="2.1" height="9.8" fill="#343b41" rx="0.5"/>
<rect x="1051.8" y="574.0" width="2.1" height="9.8" fill="#343b41" rx="0.5"/>
<rect x="1055.4" y="574.0" width="2.1" height="9.8" fill="#343b41" rx="0.5"/>
<rect x="1059.0" y="574.0" width="2.1" height="9.8" fill="#343b41" rx="0.5"/>
<rect x="1062.6" y="574.0" width="2.1" height="9.8" fill="#343b41" rx="0.5"/>
<rect x="1066.2" y="574.0" width="2.1" height="9.8" fill="#343b41" rx="0.5"/>
<rect x="1069.8" y="574.0" width="2.1" height="9.8" fill="#343b41" rx="0.5"/>
<rect x="1073.4" y="574.0" width="2.1" height="9.8" fill="#343b41" rx="0.5"/>
<rect x="1077.0" y="574.0" width="2.1" height="9.8" fill="#343b41" rx="0.5"/>
<rect x="1080.6" y="574.0" width="2.1" height="9.8" fill="#343b41" rx="0.5"/>
<rect x="1084.2" y="574.0" width="2.1" height="9.8" fill="#343b41" rx="0.5"/>
<rect x="1087.8" y="574.0" width="2.1" height="9.8" fill="#343b41" rx="0.5"/>
<rect x="1091.4" y="574.0" width="2.1" height="9.8" fill="#343b41" rx="0.5"/>
<rect x="1095.0" y="574.0" width="2.1" height="9.8" fill="#343b41" rx="0.5"/>
<rect x="1098.6" y="574.0" width="2.1" height="9.8" fill="#343b41" rx="0.5"/>
<rect x="1102.2" y="574.0" width="2.1" height="9.8" fill="#343b41" rx="0.5"/>
<rect x="1105.8" y="574.0" width="2.1" height="9.8" fill="#343b41" rx="0.5"/>
<rect x="1109.4" y="574.0" width="2.1" height="9.8" fill="#343b41" rx="0.5"/>
<rect x="1113.0" y="574.0" width="2.1" height="9.8" fill="#343b41" rx="0.5"/>
<rect x="1116.6" y="574.0" width="2.1" height="9.8" fill="#343b41" rx="0.5"/>
<rect x="1120.2" y="574.0" width="2.1" height="9.8" fill="#343b41" rx="0.5"/>
<rect x="1123.8" y="574.0" width="2.1" height="9.8" fill="#343b41" rx="0.5"/>
<rect x="1127.4" y="574.0" width="2.1" height="9.8" fill="#343b41" rx="0.5"/>
<rect x="1131.0" y="574.0" width="2.1" height="9.8" fill="#343b41" rx="0.5"/>
<rect x="1134.6" y="574.0" width="2.1" height="9.8" fill="#343b41" rx="0.5"/>
<rect x="1138.2" y="574.0" width="2.1" height="9.8" fill="#343b41" rx="0.5"/>
<rect x="1141.8" y="574.0" width="2.1" height="9.8" fill="#343b41" rx="0.5"/>
<rect x="1145.4" y="574.0" width="2.1" height="9.8" fill="#343b41" rx="0.5"/>
<rect x="1149.0" y="574.0" width="2.1" height="9.8" fill="#343b41" rx="0.5"/>
<rect x="1152.6" y="574.0" width="2.1" height="9.8" fill="#343b41" rx="0.5"/>
<rect x="1156.2" y="574.0" width="2.1" height="9.8" fill="#343b41" rx="0.5"/>
<rect x="1159.8" y="574.0" width="2.1" height="9.8" fill="#343b41" rx="0.5"/>
<rect x="1163.4" y="574.0" width="2.1" height="9.8" fill="#343b41" rx="0.5"/>
<rect x="1167.0" y="574.0" width="2.1" height="9.8" fill="#343b41" rx="0.5"/>
<rect x="1170.6" y="574.0" width="2.1" height="9.8" fill="#343b41" rx="0.5"/>
<rect x="1174.2" y="574.0" width="2.1" height="9.8" fill="#343b41" rx="0.5"/>
<rect x="1177.8" y="574.0" width="2.1" height="9.8" fill="#343b41" rx="0.5"/>
<rect x="1181.4" y="574.0" width="2.1" height="9.8" fill="#343b41" rx="0.5"/>
<rect x="1185.0" y="574.0" width="2.1" height="9.8" fill="#343b41" rx="0.5"/>
<rect x="1188.6" y="574.0" width="2.1" height="9.8" fill="#343b41" rx="0.5"/>
<rect x="1192.2" y="574.0" width="2.1" height="9.8" fill="#343b41" rx="0.5"/>
<rect x="1195.8" y="574.0" width="2.1" height="9.8" fill="#343b41" rx="0.5"/>
<rect x="1199.4" y="574.0" width="2.1" height="9.8" fill="#343b41" rx="0.5"/>
<rect x="1203.0" y="574.0" width="2.1" height="9.8" fill="#343b41" rx="0.5"/>
<rect x="1206.6" y="574.0" width="2.1" height="9.8" fill="#343b41" rx="0.5"/>
<rect x="1210.2" y="574.0" width="2.1" height="9.8" fill="#343b41" rx="0.5"/>
<rect x="1213.8" y="574.0" width="2.1" height="9.8" fill="#343b41" rx="0.5"/>
<rect x="1217.4" y="574.0" width="2.1" height="9.8" fill="#343b41" rx="0.5"/>
<rect x="1221.0" y="574.0" width="2.1" height="9.8" fill="#343b41" rx="0.5"/>
<rect x="1224.6" y="574.0" width="2.1" height="9.8" fill="#343b41" rx="0.5"/>
<rect x="1228.2" y="574.0" width="2.1" height="9.8" fill="#343b41" rx="0.5"/>
<rect x="1231.8" y="574.0" width="2.1" height="9.8" fill="#343b41" rx="0.5"/>
<text transform="translate(881.5,581.45) scale(0.85,1)" x="0" y="0" font-size="9.2" fill="#e9a21a" font-weight="bold" text-anchor="end">3.8</text>
<text transform="translate(867.7,592.7) scale(0.85,1)" x="0" y="0" font-size="9.8" fill="#eef0f2" font-weight="bold">kHz</text>
<text transform="translate(895.8,594.3) scale(0.8,1)" x="0" y="0" font-size="8.6" fill="#eef0f2" font-weight="bold" text-anchor="middle">0</text>
<rect x="911.9" y="588.3" width="1" height="5" fill="#5d646a"/>
<text transform="translate(929.13,594.3) scale(0.8,1)" x="0" y="0" font-size="8.6" fill="#eef0f2" font-weight="bold" text-anchor="middle">1</text>
<rect x="945.23" y="588.3" width="1" height="5" fill="#5d646a"/>
<text transform="translate(962.46,594.3) scale(0.8,1)" x="0" y="0" font-size="8.6" fill="#eef0f2" font-weight="bold" text-anchor="middle">2</text>
<rect x="978.56" y="588.3" width="1" height="5" fill="#5d646a"/>
<text transform="translate(995.79,594.3) scale(0.8,1)" x="0" y="0" font-size="8.6" fill="#eef0f2" font-weight="bold" text-anchor="middle">3</text>
<rect x="1011.89" y="588.3" width="1" height="5" fill="#5d646a"/>
<text transform="translate(1029.12,594.3) scale(0.8,1)" x="0" y="0" font-size="8.6" fill="#eef0f2" font-weight="bold" text-anchor="middle">4</text>
<rect x="1045.22" y="588.3" width="1" height="5" fill="#5d646a"/>
<text transform="translate(1062.45,594.3) scale(0.8,1)" x="0" y="0" font-size="8.6" fill="#eef0f2" font-weight="bold" text-anchor="middle">5</text>
<rect x="1078.55" y="588.3" width="1" height="5" fill="#5d646a"/>
<text transform="translate(1095.78,594.3) scale(0.8,1)" x="0" y="0" font-size="8.6" fill="#eef0f2" font-weight="bold" text-anchor="middle">6</text>
<rect x="1111.88" y="588.3" width="1" height="5" fill="#5d646a"/>
<text transform="translate(1129.11,594.3) scale(0.8,1)" x="0" y="0" font-size="8.6" fill="#eef0f2" font-weight="bold" text-anchor="middle">7</text>
<rect x="1145.21" y="588.3" width="1" height="5" fill="#5d646a"/>
<text transform="translate(1162.44,594.3) scale(0.8,1)" x="0" y="0" font-size="8.6" fill="#eef0f2" font-weight="bold" text-anchor="middle">8</text>
<rect x="1178.54" y="588.3" width="1" height="5" fill="#5d646a"/>
<text transform="translate(1195.77,594.3) scale(0.8,1)" x="0" y="0" font-size="8.6" fill="#eef0f2" font-weight="bold" text-anchor="middle">9</text>
<rect x="1211.87" y="588.3" width="1" height="5" fill="#5d646a"/>
<text transform="translate(1229.1,594.3) scale(0.8,1)" x="0" y="0" font-size="8.6" fill="#eef0f2" font-weight="bold" text-anchor="middle">10</text>
<rect x="860.9" y="597.0" width="379.1" height="14" fill="#5b7590"/>
<text x="865.5" y="607.9" font-size="10.5" fill="#eef2f5" textLength="62.1" lengthAdjust="spacingAndGlyphs" stroke="#eef2f5" stroke-width="0.3">MPX POWER</text>
<rect x="860.9" y="611.0" width="379.1" height="28.6" fill="#12171c"/>
<rect x="897.0" y="616.3" width="2.1" height="9.8" fill="#f7a81c" rx="0.5"/>
<rect x="900.6" y="616.3" width="2.1" height="9.8" fill="#f7a81c" rx="0.5"/>
<rect x="904.2" y="616.3" width="2.1" height="9.8" fill="#f7a81c" rx="0.5"/>
<rect x="907.8" y="616.3" width="2.1" height="9.8" fill="#f7a81c" rx="0.5"/>
<rect x="911.4" y="616.3" width="2.1" height="9.8" fill="#f7a81c" rx="0.5"/>
<rect x="915.0" y="616.3" width="2.1" height="9.8" fill="#f7a81c" rx="0.5"/>
<rect x="918.6" y="616.3" width="2.1" height="9.8" fill="#f7a81c" rx="0.5"/>
<rect x="922.2" y="616.3" width="2.1" height="9.8" fill="#f7a81c" rx="0.5"/>
<rect x="925.8" y="616.3" width="2.1" height="9.8" fill="#f7a81c" rx="0.5"/>
<rect x="929.4" y="616.3" width="2.1" height="9.8" fill="#f7a81c" rx="0.5"/>
<rect x="933.0" y="616.3" width="2.1" height="9.8" fill="#f7a81c" rx="0.5"/>
<rect x="936.6" y="616.3" width="2.1" height="9.8" fill="#f7a81c" rx="0.5"/>
<rect x="940.2" y="616.3" width="2.1" height="9.8" fill="#f7a81c" rx="0.5"/>
<rect x="943.8" y="616.3" width="2.1" height="9.8" fill="#f7a81c" rx="0.5"/>
<rect x="947.4" y="616.3" width="2.1" height="9.8" fill="#f7a81c" rx="0.5"/>
<rect x="951.0" y="616.3" width="2.1" height="9.8" fill="#f7a81c" rx="0.5"/>
<rect x="954.6" y="616.3" width="2.1" height="9.8" fill="#f7a81c" rx="0.5"/>
<rect x="958.2" y="616.3" width="2.1" height="9.8" fill="#f7a81c" rx="0.5"/>
<rect x="961.8" y="616.3" width="2.1" height="9.8" fill="#f7a81c" rx="0.5"/>
<rect x="965.4" y="616.3" width="2.1" height="9.8" fill="#f7a81c" rx="0.5"/>
<rect x="969.0" y="616.3" width="2.1" height="9.8" fill="#f7a81c" rx="0.5"/>
<rect x="972.6" y="616.3" width="2.1" height="9.8" fill="#f7a81c" rx="0.5"/>
<rect x="976.2" y="616.3" width="2.1" height="9.8" fill="#f7a81c" rx="0.5"/>
<rect x="979.8" y="616.3" width="2.1" height="9.8" fill="#f7a81c" rx="0.5"/>
<rect x="983.4" y="616.3" width="2.1" height="9.8" fill="#f7a81c" rx="0.5"/>
<rect x="987.0" y="616.3" width="2.1" height="9.8" fill="#f7a81c" rx="0.5"/>
<rect x="990.6" y="616.3" width="2.1" height="9.8" fill="#f7a81c" rx="0.5"/>
<rect x="994.2" y="616.3" width="2.1" height="9.8" fill="#f7a81c" rx="0.5"/>
<rect x="997.8" y="616.3" width="2.1" height="9.8" fill="#f7a81c" rx="0.5"/>
<rect x="1001.4" y="616.3" width="2.1" height="9.8" fill="#f7a81c" rx="0.5"/>
<rect x="1005.0" y="616.3" width="2.1" height="9.8" fill="#f7a81c" rx="0.5"/>
<rect x="1008.6" y="616.3" width="2.1" height="9.8" fill="#f7a81c" rx="0.5"/>
<rect x="1012.2" y="616.3" width="2.1" height="9.8" fill="#f7a81c" rx="0.5"/>
<rect x="1015.8" y="616.3" width="2.1" height="9.8" fill="#f7a81c" rx="0.5"/>
<rect x="1019.4" y="616.3" width="2.1" height="9.8" fill="#f7a81c" rx="0.5"/>
<rect x="1023.0" y="616.3" width="2.1" height="9.8" fill="#f7a81c" rx="0.5"/>
<rect x="1026.6" y="616.3" width="2.1" height="9.8" fill="#f7a81c" rx="0.5"/>
<rect x="1030.2" y="616.3" width="2.1" height="9.8" fill="#f7a81c" rx="0.5"/>
<rect x="1033.8" y="616.3" width="2.1" height="9.8" fill="#f7a81c" rx="0.5"/>
<rect x="1037.4" y="616.3" width="2.1" height="9.8" fill="#f7a81c" rx="0.5"/>
<rect x="1041.0" y="616.3" width="2.1" height="9.8" fill="#f7a81c" rx="0.5"/>
<rect x="1044.6" y="616.3" width="2.1" height="9.8" fill="#f7a81c" rx="0.5"/>
<rect x="1048.2" y="616.3" width="2.1" height="9.8" fill="#f7a81c" rx="0.5"/>
<rect x="1051.8" y="616.3" width="2.1" height="9.8" fill="#f7a81c" rx="0.5"/>
<rect x="1055.4" y="616.3" width="2.1" height="9.8" fill="#f7a81c" rx="0.5"/>
<rect x="1059.0" y="616.3" width="2.1" height="9.8" fill="#f7a81c" rx="0.5"/>
<rect x="1062.6" y="616.3" width="2.1" height="9.8" fill="#f7a81c" rx="0.5"/>
<rect x="1066.2" y="616.3" width="2.1" height="9.8" fill="#f7a81c" rx="0.5"/>
<rect x="1069.8" y="616.3" width="2.1" height="9.8" fill="#f7a81c" rx="0.5"/>
<rect x="1073.4" y="616.3" width="2.1" height="9.8" fill="#f7a81c" rx="0.5"/>
<rect x="1077.0" y="616.3" width="2.1" height="9.8" fill="#f7a81c" rx="0.5"/>
<rect x="1080.6" y="616.3" width="2.1" height="9.8" fill="#f7a81c" rx="0.5"/>
<rect x="1084.2" y="616.3" width="2.1" height="9.8" fill="#f7a81c" rx="0.5"/>
<rect x="1087.8" y="616.3" width="2.1" height="9.8" fill="#f7a81c" rx="0.5"/>
<rect x="1091.4" y="616.3" width="2.1" height="9.8" fill="#f7a81c" rx="0.5"/>
<rect x="1095.0" y="616.3" width="2.1" height="9.8" fill="#f7a81c" rx="0.5"/>
<rect x="1098.6" y="616.3" width="2.1" height="9.8" fill="#f7a81c" rx="0.5"/>
<rect x="1102.2" y="616.3" width="2.1" height="9.8" fill="#f7a81c" rx="0.5"/>
<rect x="1105.8" y="616.3" width="2.1" height="9.8" fill="#f7a81c" rx="0.5"/>
<rect x="1109.4" y="616.3" width="2.1" height="9.8" fill="#f7a81c" rx="0.5"/>
<rect x="1113.0" y="616.3" width="2.1" height="9.8" fill="#f7a81c" rx="0.5"/>
<rect x="1116.6" y="616.3" width="2.1" height="9.8" fill="#f7a81c" rx="0.5"/>
<rect x="1120.2" y="616.3" width="2.1" height="9.8" fill="#f7a81c" rx="0.5"/>
<rect x="1123.8" y="616.3" width="2.1" height="9.8" fill="#f7a81c" rx="0.5"/>
<rect x="1127.4" y="616.3" width="2.1" height="9.8" fill="#f7a81c" rx="0.5"/>
<rect x="1131.0" y="616.3" width="2.1" height="9.8" fill="#f7a81c" rx="0.5"/>
<rect x="1134.6" y="616.3" width="2.1" height="9.8" fill="#f7a81c" rx="0.5"/>
<rect x="1138.2" y="616.3" width="2.1" height="9.8" fill="#f7a81c" rx="0.5"/>
<rect x="1141.8" y="616.3" width="2.1" height="9.8" fill="#f7a81c" rx="0.5"/>
<rect x="1145.4" y="616.3" width="2.1" height="9.8" fill="#f7a81c" rx="0.5"/>
<rect x="1149.0" y="616.3" width="2.1" height="9.8" fill="#f7a81c" rx="0.5"/>
<rect x="1152.6" y="616.3" width="2.1" height="9.8" fill="#f7a81c" rx="0.5"/>
<rect x="1156.2" y="616.3" width="2.1" height="9.8" fill="#343b41" rx="0.5"/>
<rect x="1159.8" y="616.3" width="2.1" height="9.8" fill="#343b41" rx="0.5"/>
<rect x="1163.4" y="616.3" width="2.1" height="9.8" fill="#343b41" rx="0.5"/>
<rect x="1167.0" y="616.3" width="2.1" height="9.8" fill="#343b41" rx="0.5"/>
<rect x="1170.6" y="616.3" width="2.1" height="9.8" fill="#343b41" rx="0.5"/>
<rect x="1174.2" y="616.3" width="2.1" height="9.8" fill="#343b41" rx="0.5"/>
<rect x="1177.8" y="616.3" width="2.1" height="9.8" fill="#343b41" rx="0.5"/>
<rect x="1181.4" y="616.3" width="2.1" height="9.8" fill="#343b41" rx="0.5"/>
<rect x="1185.0" y="616.3" width="2.1" height="9.8" fill="#343b41" rx="0.5"/>
<rect x="1188.6" y="616.3" width="2.1" height="9.8" fill="#343b41" rx="0.5"/>
<rect x="1192.2" y="616.3" width="2.1" height="9.8" fill="#343b41" rx="0.5"/>
<rect x="1195.8" y="616.3" width="2.1" height="9.8" fill="#343b41" rx="0.5"/>
<rect x="1199.4" y="616.3" width="2.1" height="9.8" fill="#343b41" rx="0.5"/>
<rect x="1203.0" y="616.3" width="2.1" height="9.8" fill="#343b41" rx="0.5"/>
<rect x="1206.6" y="616.3" width="2.1" height="9.8" fill="#343b41" rx="0.5"/>
<rect x="1210.2" y="616.3" width="2.1" height="9.8" fill="#343b41" rx="0.5"/>
<rect x="1213.8" y="616.3" width="2.1" height="9.8" fill="#343b41" rx="0.5"/>
<rect x="1217.4" y="616.3" width="2.1" height="9.8" fill="#343b41" rx="0.5"/>
<rect x="1221.0" y="616.3" width="2.1" height="9.8" fill="#343b41" rx="0.5"/>
<rect x="1224.6" y="616.3" width="2.1" height="9.8" fill="#343b41" rx="0.5"/>
<rect x="1228.2" y="616.3" width="2.1" height="9.8" fill="#343b41" rx="0.5"/>
<rect x="1231.8" y="616.3" width="2.1" height="9.8" fill="#343b41" rx="0.5"/>
<text transform="translate(881.5,623.75) scale(0.85,1)" x="0" y="0" font-size="9.2" fill="#e9a21a" font-weight="bold" text-anchor="end">6.9</text>
<text transform="translate(867.7,635.0) scale(0.85,1)" x="0" y="0" font-size="9.8" fill="#eef0f2" font-weight="bold">dB</text>
<text transform="translate(895.8,636.6) scale(0.8,1)" x="0" y="0" font-size="8.6" fill="#eef0f2" font-weight="bold" text-anchor="middle">-12.5</text>
<rect x="911.9" y="630.6" width="1" height="5" fill="#5d646a"/>
<text transform="translate(929.13,636.6) scale(0.8,1)" x="0" y="0" font-size="8.6" fill="#eef0f2" font-weight="bold" text-anchor="middle">-10</text>
<rect x="945.23" y="630.6" width="1" height="5" fill="#5d646a"/>
<text transform="translate(962.46,636.6) scale(0.8,1)" x="0" y="0" font-size="8.6" fill="#eef0f2" font-weight="bold" text-anchor="middle">-7.5</text>
<rect x="978.56" y="630.6" width="1" height="5" fill="#5d646a"/>
<text transform="translate(995.79,636.6) scale(0.8,1)" x="0" y="0" font-size="8.6" fill="#eef0f2" font-weight="bold" text-anchor="middle">-5</text>
<rect x="1011.89" y="630.6" width="1" height="5" fill="#5d646a"/>
<text transform="translate(1029.12,636.6) scale(0.8,1)" x="0" y="0" font-size="8.6" fill="#eef0f2" font-weight="bold" text-anchor="middle">-2.5</text>
<rect x="1045.22" y="630.6" width="1" height="5" fill="#5d646a"/>
<text transform="translate(1062.45,636.6) scale(0.8,1)" x="0" y="0" font-size="8.6" fill="#eef0f2" font-weight="bold" text-anchor="middle">0</text>
<rect x="1078.55" y="630.6" width="1" height="5" fill="#5d646a"/>
<text transform="translate(1095.78,636.6) scale(0.8,1)" x="0" y="0" font-size="8.6" fill="#eef0f2" font-weight="bold" text-anchor="middle">2.5</text>
<rect x="1111.88" y="630.6" width="1" height="5" fill="#5d646a"/>
<text transform="translate(1129.11,636.6) scale(0.8,1)" x="0" y="0" font-size="8.6" fill="#eef0f2" font-weight="bold" text-anchor="middle">5</text>
<rect x="1145.21" y="630.6" width="1" height="5" fill="#5d646a"/>
<text transform="translate(1162.44,636.6) scale(0.8,1)" x="0" y="0" font-size="8.6" fill="#eef0f2" font-weight="bold" text-anchor="middle">7.5</text>
<rect x="1178.54" y="630.6" width="1" height="5" fill="#5d646a"/>
<text transform="translate(1195.77,636.6) scale(0.8,1)" x="0" y="0" font-size="8.6" fill="#eef0f2" font-weight="bold" text-anchor="middle">10</text>
<rect x="1211.87" y="630.6" width="1" height="5" fill="#5d646a"/>
<text transform="translate(1229.1,636.6) scale(0.8,1)" x="0" y="0" font-size="8.6" fill="#eef0f2" font-weight="bold" text-anchor="middle">12.5</text>
<rect x="860.9" y="639.9" width="379.1" height="14" fill="#5b7590"/>
<text x="865.5" y="650.8" font-size="10.5" fill="#eef2f5" textLength="62.2" lengthAdjust="spacingAndGlyphs" stroke="#eef2f5" stroke-width="0.3">PILOT NOISE</text>
<rect x="860.9" y="653.9" width="379.1" height="28.6" fill="#12171c"/>
<rect x="897.0" y="659.2" width="2.1" height="9.8" fill="#f7a81c" rx="0.5"/>
<rect x="900.6" y="659.2" width="2.1" height="9.8" fill="#343b41" rx="0.5"/>
<rect x="904.2" y="659.2" width="2.1" height="9.8" fill="#343b41" rx="0.5"/>
<rect x="907.8" y="659.2" width="2.1" height="9.8" fill="#343b41" rx="0.5"/>
<rect x="911.4" y="659.2" width="2.1" height="9.8" fill="#343b41" rx="0.5"/>
<rect x="915.0" y="659.2" width="2.1" height="9.8" fill="#343b41" rx="0.5"/>
<rect x="918.6" y="659.2" width="2.1" height="9.8" fill="#343b41" rx="0.5"/>
<rect x="922.2" y="659.2" width="2.1" height="9.8" fill="#343b41" rx="0.5"/>
<rect x="925.8" y="659.2" width="2.1" height="9.8" fill="#343b41" rx="0.5"/>
<rect x="929.4" y="659.2" width="2.1" height="9.8" fill="#343b41" rx="0.5"/>
<rect x="933.0" y="659.2" width="2.1" height="9.8" fill="#343b41" rx="0.5"/>
<rect x="936.6" y="659.2" width="2.1" height="9.8" fill="#343b41" rx="0.5"/>
<rect x="940.2" y="659.2" width="2.1" height="9.8" fill="#343b41" rx="0.5"/>
<rect x="943.8" y="659.2" width="2.1" height="9.8" fill="#343b41" rx="0.5"/>
<rect x="947.4" y="659.2" width="2.1" height="9.8" fill="#343b41" rx="0.5"/>
<rect x="951.0" y="659.2" width="2.1" height="9.8" fill="#343b41" rx="0.5"/>
<rect x="954.6" y="659.2" width="2.1" height="9.8" fill="#343b41" rx="0.5"/>
<rect x="958.2" y="659.2" width="2.1" height="9.8" fill="#343b41" rx="0.5"/>
<rect x="961.8" y="659.2" width="2.1" height="9.8" fill="#343b41" rx="0.5"/>
<rect x="965.4" y="659.2" width="2.1" height="9.8" fill="#343b41" rx="0.5"/>
<rect x="969.0" y="659.2" width="2.1" height="9.8" fill="#e8161a" rx="0.5"/>
<rect x="972.6" y="659.2" width="2.1" height="9.8" fill="#343b41" rx="0.5"/>
<rect x="976.2" y="659.2" width="2.1" height="9.8" fill="#343b41" rx="0.5"/>
<rect x="979.8" y="659.2" width="2.1" height="9.8" fill="#343b41" rx="0.5"/>
<rect x="983.4" y="659.2" width="2.1" height="9.8" fill="#343b41" rx="0.5"/>
<rect x="987.0" y="659.2" width="2.1" height="9.8" fill="#343b41" rx="0.5"/>
<rect x="990.6" y="659.2" width="2.1" height="9.8" fill="#343b41" rx="0.5"/>
<rect x="994.2" y="659.2" width="2.1" height="9.8" fill="#343b41" rx="0.5"/>
<rect x="997.8" y="659.2" width="2.1" height="9.8" fill="#343b41" rx="0.5"/>
<rect x="1001.4" y="659.2" width="2.1" height="9.8" fill="#343b41" rx="0.5"/>
<rect x="1005.0" y="659.2" width="2.1" height="9.8" fill="#343b41" rx="0.5"/>
<rect x="1008.6" y="659.2" width="2.1" height="9.8" fill="#343b41" rx="0.5"/>
<rect x="1012.2" y="659.2" width="2.1" height="9.8" fill="#343b41" rx="0.5"/>
<rect x="1015.8" y="659.2" width="2.1" height="9.8" fill="#343b41" rx="0.5"/>
<rect x="1019.4" y="659.2" width="2.1" height="9.8" fill="#343b41" rx="0.5"/>
<rect x="1023.0" y="659.2" width="2.1" height="9.8" fill="#343b41" rx="0.5"/>
<rect x="1026.6" y="659.2" width="2.1" height="9.8" fill="#343b41" rx="0.5"/>
<rect x="1030.2" y="659.2" width="2.1" height="9.8" fill="#343b41" rx="0.5"/>
<rect x="1033.8" y="659.2" width="2.1" height="9.8" fill="#343b41" rx="0.5"/>
<rect x="1037.4" y="659.2" width="2.1" height="9.8" fill="#343b41" rx="0.5"/>
<rect x="1041.0" y="659.2" width="2.1" height="9.8" fill="#343b41" rx="0.5"/>
<rect x="1044.6" y="659.2" width="2.1" height="9.8" fill="#343b41" rx="0.5"/>
<rect x="1048.2" y="659.2" width="2.1" height="9.8" fill="#343b41" rx="0.5"/>
<rect x="1051.8" y="659.2" width="2.1" height="9.8" fill="#343b41" rx="0.5"/>
<rect x="1055.4" y="659.2" width="2.1" height="9.8" fill="#343b41" rx="0.5"/>
<rect x="1059.0" y="659.2" width="2.1" height="9.8" fill="#343b41" rx="0.5"/>
<rect x="1062.6" y="659.2" width="2.1" height="9.8" fill="#343b41" rx="0.5"/>
<rect x="1066.2" y="659.2" width="2.1" height="9.8" fill="#343b41" rx="0.5"/>
<rect x="1069.8" y="659.2" width="2.1" height="9.8" fill="#343b41" rx="0.5"/>
<rect x="1073.4" y="659.2" width="2.1" height="9.8" fill="#343b41" rx="0.5"/>
<rect x="1077.0" y="659.2" width="2.1" height="9.8" fill="#343b41" rx="0.5"/>
<rect x="1080.6" y="659.2" width="2.1" height="9.8" fill="#343b41" rx="0.5"/>
<rect x="1084.2" y="659.2" width="2.1" height="9.8" fill="#343b41" rx="0.5"/>
<rect x="1087.8" y="659.2" width="2.1" height="9.8" fill="#343b41" rx="0.5"/>
<rect x="1091.4" y="659.2" width="2.1" height="9.8" fill="#343b41" rx="0.5"/>
<rect x="1095.0" y="659.2" width="2.1" height="9.8" fill="#343b41" rx="0.5"/>
<rect x="1098.6" y="659.2" width="2.1" height="9.8" fill="#343b41" rx="0.5"/>
<rect x="1102.2" y="659.2" width="2.1" height="9.8" fill="#343b41" rx="0.5"/>
<rect x="1105.8" y="659.2" width="2.1" height="9.8" fill="#343b41" rx="0.5"/>
<rect x="1109.4" y="659.2" width="2.1" height="9.8" fill="#343b41" rx="0.5"/>
<rect x="1113.0" y="659.2" width="2.1" height="9.8" fill="#343b41" rx="0.5"/>
<rect x="1116.6" y="659.2" width="2.1" height="9.8" fill="#343b41" rx="0.5"/>
<rect x="1120.2" y="659.2" width="2.1" height="9.8" fill="#343b41" rx="0.5"/>
<rect x="1123.8" y="659.2" width="2.1" height="9.8" fill="#343b41" rx="0.5"/>
<rect x="1127.4" y="659.2" width="2.1" height="9.8" fill="#343b41" rx="0.5"/>
<rect x="1131.0" y="659.2" width="2.1" height="9.8" fill="#343b41" rx="0.5"/>
<rect x="1134.6" y="659.2" width="2.1" height="9.8" fill="#343b41" rx="0.5"/>
<rect x="1138.2" y="659.2" width="2.1" height="9.8" fill="#343b41" rx="0.5"/>
<rect x="1141.8" y="659.2" width="2.1" height="9.8" fill="#343b41" rx="0.5"/>
<rect x="1145.4" y="659.2" width="2.1" height="9.8" fill="#343b41" rx="0.5"/>
<rect x="1149.0" y="659.2" width="2.1" height="9.8" fill="#343b41" rx="0.5"/>
<rect x="1152.6" y="659.2" width="2.1" height="9.8" fill="#343b41" rx="0.5"/>
<rect x="1156.2" y="659.2" width="2.1" height="9.8" fill="#343b41" rx="0.5"/>
<rect x="1159.8" y="659.2" width="2.1" height="9.8" fill="#343b41" rx="0.5"/>
<rect x="1163.4" y="659.2" width="2.1" height="9.8" fill="#343b41" rx="0.5"/>
<rect x="1167.0" y="659.2" width="2.1" height="9.8" fill="#343b41" rx="0.5"/>
<rect x="1170.6" y="659.2" width="2.1" height="9.8" fill="#343b41" rx="0.5"/>
<rect x="1174.2" y="659.2" width="2.1" height="9.8" fill="#343b41" rx="0.5"/>
<rect x="1177.8" y="659.2" width="2.1" height="9.8" fill="#343b41" rx="0.5"/>
<rect x="1181.4" y="659.2" width="2.1" height="9.8" fill="#343b41" rx="0.5"/>
<rect x="1185.0" y="659.2" width="2.1" height="9.8" fill="#343b41" rx="0.5"/>
<rect x="1188.6" y="659.2" width="2.1" height="9.8" fill="#343b41" rx="0.5"/>
<rect x="1192.2" y="659.2" width="2.1" height="9.8" fill="#343b41" rx="0.5"/>
<rect x="1195.8" y="659.2" width="2.1" height="9.8" fill="#343b41" rx="0.5"/>
<rect x="1199.4" y="659.2" width="2.1" height="9.8" fill="#343b41" rx="0.5"/>
<rect x="1203.0" y="659.2" width="2.1" height="9.8" fill="#343b41" rx="0.5"/>
<rect x="1206.6" y="659.2" width="2.1" height="9.8" fill="#343b41" rx="0.5"/>
<rect x="1210.2" y="659.2" width="2.1" height="9.8" fill="#343b41" rx="0.5"/>
<rect x="1213.8" y="659.2" width="2.1" height="9.8" fill="#343b41" rx="0.5"/>
<rect x="1217.4" y="659.2" width="2.1" height="9.8" fill="#343b41" rx="0.5"/>
<rect x="1221.0" y="659.2" width="2.1" height="9.8" fill="#343b41" rx="0.5"/>
<rect x="1224.6" y="659.2" width="2.1" height="9.8" fill="#343b41" rx="0.5"/>
<rect x="1228.2" y="659.2" width="2.1" height="9.8" fill="#343b41" rx="0.5"/>
<rect x="1231.8" y="659.2" width="2.1" height="9.8" fill="#343b41" rx="0.5"/>
<text transform="translate(881.5,666.65) scale(0.85,1)" x="0" y="0" font-size="9.2" fill="#e9a21a" font-weight="bold" text-anchor="end">-78.1</text>
<text transform="translate(867.7,677.9) scale(0.85,1)" x="0" y="0" font-size="9.8" fill="#eef0f2" font-weight="bold">dB</text>
<text transform="translate(895.8,679.5) scale(0.8,1)" x="0" y="0" font-size="8.6" fill="#eef0f2" font-weight="bold" text-anchor="middle">-100</text>
<rect x="911.9" y="673.5" width="1" height="5" fill="#5d646a"/>
<text transform="translate(929.13,679.5) scale(0.8,1)" x="0" y="0" font-size="8.6" fill="#eef0f2" font-weight="bold" text-anchor="middle">-90</text>
<rect x="945.23" y="673.5" width="1" height="5" fill="#5d646a"/>
<text transform="translate(962.46,679.5) scale(0.8,1)" x="0" y="0" font-size="8.6" fill="#eef0f2" font-weight="bold" text-anchor="middle">-80</text>
<rect x="978.56" y="673.5" width="1" height="5" fill="#5d646a"/>
<text transform="translate(995.79,679.5) scale(0.8,1)" x="0" y="0" font-size="8.6" fill="#eef0f2" font-weight="bold" text-anchor="middle">-70</text>
<rect x="1011.89" y="673.5" width="1" height="5" fill="#5d646a"/>
<text transform="translate(1029.12,679.5) scale(0.8,1)" x="0" y="0" font-size="8.6" fill="#eef0f2" font-weight="bold" text-anchor="middle">-60</text>
<rect x="1045.22" y="673.5" width="1" height="5" fill="#5d646a"/>
<text transform="translate(1062.45,679.5) scale(0.8,1)" x="0" y="0" font-size="8.6" fill="#eef0f2" font-weight="bold" text-anchor="middle">-50</text>
<rect x="1078.55" y="673.5" width="1" height="5" fill="#5d646a"/>
<text transform="translate(1095.78,679.5) scale(0.8,1)" x="0" y="0" font-size="8.6" fill="#eef0f2" font-weight="bold" text-anchor="middle">-40</text>
<rect x="1111.88" y="673.5" width="1" height="5" fill="#5d646a"/>
<text transform="translate(1129.11,679.5) scale(0.8,1)" x="0" y="0" font-size="8.6" fill="#eef0f2" font-weight="bold" text-anchor="middle">-30</text>
<rect x="1145.21" y="673.5" width="1" height="5" fill="#5d646a"/>
<text transform="translate(1162.44,679.5) scale(0.8,1)" x="0" y="0" font-size="8.6" fill="#eef0f2" font-weight="bold" text-anchor="middle">-20</text>
<rect x="1178.54" y="673.5" width="1" height="5" fill="#5d646a"/>
<text transform="translate(1195.77,679.5) scale(0.8,1)" x="0" y="0" font-size="8.6" fill="#eef0f2" font-weight="bold" text-anchor="middle">-10</text>
<rect x="1211.87" y="673.5" width="1" height="5" fill="#5d646a"/>
<text transform="translate(1229.1,679.5) scale(0.8,1)" x="0" y="0" font-size="8.6" fill="#eef0f2" font-weight="bold" text-anchor="middle">0</text>
<rect x="860.9" y="681.9" width="379.1" height="14" fill="#5b7590"/>
<text x="865.5" y="692.8" font-size="10.5" fill="#eef2f5" textLength="85.7" lengthAdjust="spacingAndGlyphs" stroke="#eef2f5" stroke-width="0.3">OUT BAND NOISE</text>
<rect x="860.9" y="695.9" width="379.1" height="27.5" fill="#12171c"/>
<rect x="897.0" y="701.2" width="2.1" height="9.8" fill="#f7a81c" rx="0.5"/>
<rect x="900.6" y="701.2" width="2.1" height="9.8" fill="#f7a81c" rx="0.5"/>
<rect x="904.2" y="701.2" width="2.1" height="9.8" fill="#f7a81c" rx="0.5"/>
<rect x="907.8" y="701.2" width="2.1" height="9.8" fill="#f7a81c" rx="0.5"/>
<rect x="911.4" y="701.2" width="2.1" height="9.8" fill="#f7a81c" rx="0.5"/>
<rect x="915.0" y="701.2" width="2.1" height="9.8" fill="#f7a81c" rx="0.5"/>
<rect x="918.6" y="701.2" width="2.1" height="9.8" fill="#f7a81c" rx="0.5"/>
<rect x="922.2" y="701.2" width="2.1" height="9.8" fill="#f7a81c" rx="0.5"/>
<rect x="925.8" y="701.2" width="2.1" height="9.8" fill="#f7a81c" rx="0.5"/>
<rect x="929.4" y="701.2" width="2.1" height="9.8" fill="#f7a81c" rx="0.5"/>
<rect x="933.0" y="701.2" width="2.1" height="9.8" fill="#f7a81c" rx="0.5"/>
<rect x="936.6" y="701.2" width="2.1" height="9.8" fill="#f7a81c" rx="0.5"/>
<rect x="940.2" y="701.2" width="2.1" height="9.8" fill="#f7a81c" rx="0.5"/>
<rect x="943.8" y="701.2" width="2.1" height="9.8" fill="#f7a81c" rx="0.5"/>
<rect x="947.4" y="701.2" width="2.1" height="9.8" fill="#f7a81c" rx="0.5"/>
<rect x="951.0" y="701.2" width="2.1" height="9.8" fill="#f7a81c" rx="0.5"/>
<rect x="954.6" y="701.2" width="2.1" height="9.8" fill="#f7a81c" rx="0.5"/>
<rect x="958.2" y="701.2" width="2.1" height="9.8" fill="#f7a81c" rx="0.5"/>
<rect x="961.8" y="701.2" width="2.1" height="9.8" fill="#f7a81c" rx="0.5"/>
<rect x="965.4" y="701.2" width="2.1" height="9.8" fill="#f7a81c" rx="0.5"/>
<rect x="969.0" y="701.2" width="2.1" height="9.8" fill="#f7a81c" rx="0.5"/>
<rect x="972.6" y="701.2" width="2.1" height="9.8" fill="#f7a81c" rx="0.5"/>
<rect x="976.2" y="701.2" width="2.1" height="9.8" fill="#f7a81c" rx="0.5"/>
<rect x="979.8" y="701.2" width="2.1" height="9.8" fill="#f7a81c" rx="0.5"/>
<rect x="983.4" y="701.2" width="2.1" height="9.8" fill="#f7a81c" rx="0.5"/>
<rect x="987.0" y="701.2" width="2.1" height="9.8" fill="#f7a81c" rx="0.5"/>
<rect x="990.6" y="701.2" width="2.1" height="9.8" fill="#f7a81c" rx="0.5"/>
<rect x="994.2" y="701.2" width="2.1" height="9.8" fill="#f7a81c" rx="0.5"/>
<rect x="997.8" y="701.2" width="2.1" height="9.8" fill="#f7a81c" rx="0.5"/>
<rect x="1001.4" y="701.2" width="2.1" height="9.8" fill="#f7a81c" rx="0.5"/>
<rect x="1005.0" y="701.2" width="2.1" height="9.8" fill="#343b41" rx="0.5"/>
<rect x="1008.6" y="701.2" width="2.1" height="9.8" fill="#343b41" rx="0.5"/>
<rect x="1012.2" y="701.2" width="2.1" height="9.8" fill="#e8161a" rx="0.5"/>
<rect x="1015.8" y="701.2" width="2.1" height="9.8" fill="#343b41" rx="0.5"/>
<rect x="1019.4" y="701.2" width="2.1" height="9.8" fill="#343b41" rx="0.5"/>
<rect x="1023.0" y="701.2" width="2.1" height="9.8" fill="#343b41" rx="0.5"/>
<rect x="1026.6" y="701.2" width="2.1" height="9.8" fill="#343b41" rx="0.5"/>
<rect x="1030.2" y="701.2" width="2.1" height="9.8" fill="#343b41" rx="0.5"/>
<rect x="1033.8" y="701.2" width="2.1" height="9.8" fill="#343b41" rx="0.5"/>
<rect x="1037.4" y="701.2" width="2.1" height="9.8" fill="#343b41" rx="0.5"/>
<rect x="1041.0" y="701.2" width="2.1" height="9.8" fill="#343b41" rx="0.5"/>
<rect x="1044.6" y="701.2" width="2.1" height="9.8" fill="#343b41" rx="0.5"/>
<rect x="1048.2" y="701.2" width="2.1" height="9.8" fill="#343b41" rx="0.5"/>
<rect x="1051.8" y="701.2" width="2.1" height="9.8" fill="#343b41" rx="0.5"/>
<rect x="1055.4" y="701.2" width="2.1" height="9.8" fill="#343b41" rx="0.5"/>
<rect x="1059.0" y="701.2" width="2.1" height="9.8" fill="#343b41" rx="0.5"/>
<rect x="1062.6" y="701.2" width="2.1" height="9.8" fill="#343b41" rx="0.5"/>
<rect x="1066.2" y="701.2" width="2.1" height="9.8" fill="#343b41" rx="0.5"/>
<rect x="1069.8" y="701.2" width="2.1" height="9.8" fill="#343b41" rx="0.5"/>
<rect x="1073.4" y="701.2" width="2.1" height="9.8" fill="#343b41" rx="0.5"/>
<rect x="1077.0" y="701.2" width="2.1" height="9.8" fill="#343b41" rx="0.5"/>
<rect x="1080.6" y="701.2" width="2.1" height="9.8" fill="#343b41" rx="0.5"/>
<rect x="1084.2" y="701.2" width="2.1" height="9.8" fill="#343b41" rx="0.5"/>
<rect x="1087.8" y="701.2" width="2.1" height="9.8" fill="#343b41" rx="0.5"/>
<rect x="1091.4" y="701.2" width="2.1" height="9.8" fill="#343b41" rx="0.5"/>
<rect x="1095.0" y="701.2" width="2.1" height="9.8" fill="#343b41" rx="0.5"/>
<rect x="1098.6" y="701.2" width="2.1" height="9.8" fill="#343b41" rx="0.5"/>
<rect x="1102.2" y="701.2" width="2.1" height="9.8" fill="#343b41" rx="0.5"/>
<rect x="1105.8" y="701.2" width="2.1" height="9.8" fill="#343b41" rx="0.5"/>
<rect x="1109.4" y="701.2" width="2.1" height="9.8" fill="#343b41" rx="0.5"/>
<rect x="1113.0" y="701.2" width="2.1" height="9.8" fill="#343b41" rx="0.5"/>
<rect x="1116.6" y="701.2" width="2.1" height="9.8" fill="#343b41" rx="0.5"/>
<rect x="1120.2" y="701.2" width="2.1" height="9.8" fill="#343b41" rx="0.5"/>
<rect x="1123.8" y="701.2" width="2.1" height="9.8" fill="#343b41" rx="0.5"/>
<rect x="1127.4" y="701.2" width="2.1" height="9.8" fill="#343b41" rx="0.5"/>
<rect x="1131.0" y="701.2" width="2.1" height="9.8" fill="#343b41" rx="0.5"/>
<rect x="1134.6" y="701.2" width="2.1" height="9.8" fill="#343b41" rx="0.5"/>
<rect x="1138.2" y="701.2" width="2.1" height="9.8" fill="#343b41" rx="0.5"/>
<rect x="1141.8" y="701.2" width="2.1" height="9.8" fill="#343b41" rx="0.5"/>
<rect x="1145.4" y="701.2" width="2.1" height="9.8" fill="#343b41" rx="0.5"/>
<rect x="1149.0" y="701.2" width="2.1" height="9.8" fill="#343b41" rx="0.5"/>
<rect x="1152.6" y="701.2" width="2.1" height="9.8" fill="#343b41" rx="0.5"/>
<rect x="1156.2" y="701.2" width="2.1" height="9.8" fill="#343b41" rx="0.5"/>
<rect x="1159.8" y="701.2" width="2.1" height="9.8" fill="#343b41" rx="0.5"/>
<rect x="1163.4" y="701.2" width="2.1" height="9.8" fill="#343b41" rx="0.5"/>
<rect x="1167.0" y="701.2" width="2.1" height="9.8" fill="#343b41" rx="0.5"/>
<rect x="1170.6" y="701.2" width="2.1" height="9.8" fill="#343b41" rx="0.5"/>
<rect x="1174.2" y="701.2" width="2.1" height="9.8" fill="#343b41" rx="0.5"/>
<rect x="1177.8" y="701.2" width="2.1" height="9.8" fill="#343b41" rx="0.5"/>
<rect x="1181.4" y="701.2" width="2.1" height="9.8" fill="#343b41" rx="0.5"/>
<rect x="1185.0" y="701.2" width="2.1" height="9.8" fill="#343b41" rx="0.5"/>
<rect x="1188.6" y="701.2" width="2.1" height="9.8" fill="#343b41" rx="0.5"/>
<rect x="1192.2" y="701.2" width="2.1" height="9.8" fill="#343b41" rx="0.5"/>
<rect x="1195.8" y="701.2" width="2.1" height="9.8" fill="#343b41" rx="0.5"/>
<rect x="1199.4" y="701.2" width="2.1" height="9.8" fill="#343b41" rx="0.5"/>
<rect x="1203.0" y="701.2" width="2.1" height="9.8" fill="#343b41" rx="0.5"/>
<rect x="1206.6" y="701.2" width="2.1" height="9.8" fill="#343b41" rx="0.5"/>
<rect x="1210.2" y="701.2" width="2.1" height="9.8" fill="#343b41" rx="0.5"/>
<rect x="1213.8" y="701.2" width="2.1" height="9.8" fill="#343b41" rx="0.5"/>
<rect x="1217.4" y="701.2" width="2.1" height="9.8" fill="#343b41" rx="0.5"/>
<rect x="1221.0" y="701.2" width="2.1" height="9.8" fill="#343b41" rx="0.5"/>
<rect x="1224.6" y="701.2" width="2.1" height="9.8" fill="#343b41" rx="0.5"/>
<rect x="1228.2" y="701.2" width="2.1" height="9.8" fill="#343b41" rx="0.5"/>
<rect x="1231.8" y="701.2" width="2.1" height="9.8" fill="#343b41" rx="0.5"/>
<text transform="translate(881.5,708.65) scale(0.85,1)" x="0" y="0" font-size="9.2" fill="#e9a21a" font-weight="bold" text-anchor="end">-64.7</text>
<text transform="translate(867.7,719.9) scale(0.85,1)" x="0" y="0" font-size="9.8" fill="#eef0f2" font-weight="bold">dB</text>
<text transform="translate(895.8,721.5) scale(0.8,1)" x="0" y="0" font-size="8.6" fill="#eef0f2" font-weight="bold" text-anchor="middle">-100</text>
<rect x="911.9" y="715.5" width="1" height="5" fill="#5d646a"/>
<text transform="translate(929.13,721.5) scale(0.8,1)" x="0" y="0" font-size="8.6" fill="#eef0f2" font-weight="bold" text-anchor="middle">-90</text>
<rect x="945.23" y="715.5" width="1" height="5" fill="#5d646a"/>
<text transform="translate(962.46,721.5) scale(0.8,1)" x="0" y="0" font-size="8.6" fill="#eef0f2" font-weight="bold" text-anchor="middle">-80</text>
<rect x="978.56" y="715.5" width="1" height="5" fill="#5d646a"/>
<text transform="translate(995.79,721.5) scale(0.8,1)" x="0" y="0" font-size="8.6" fill="#eef0f2" font-weight="bold" text-anchor="middle">-70</text>
<rect x="1011.89" y="715.5" width="1" height="5" fill="#5d646a"/>
<text transform="translate(1029.12,721.5) scale(0.8,1)" x="0" y="0" font-size="8.6" fill="#eef0f2" font-weight="bold" text-anchor="middle">-60</text>
<rect x="1045.22" y="715.5" width="1" height="5" fill="#5d646a"/>
<text transform="translate(1062.45,721.5) scale(0.8,1)" x="0" y="0" font-size="8.6" fill="#eef0f2" font-weight="bold" text-anchor="middle">-50</text>
<rect x="1078.55" y="715.5" width="1" height="5" fill="#5d646a"/>
<text transform="translate(1095.78,721.5) scale(0.8,1)" x="0" y="0" font-size="8.6" fill="#eef0f2" font-weight="bold" text-anchor="middle">-40</text>
<rect x="1111.88" y="715.5" width="1" height="5" fill="#5d646a"/>
<text transform="translate(1129.11,721.5) scale(0.8,1)" x="0" y="0" font-size="8.6" fill="#eef0f2" font-weight="bold" text-anchor="middle">-30</text>
<rect x="1145.21" y="715.5" width="1" height="5" fill="#5d646a"/>
<text transform="translate(1162.44,721.5) scale(0.8,1)" x="0" y="0" font-size="8.6" fill="#eef0f2" font-weight="bold" text-anchor="middle">-20</text>
<rect x="1178.54" y="715.5" width="1" height="5" fill="#5d646a"/>
<text transform="translate(1195.77,721.5) scale(0.8,1)" x="0" y="0" font-size="8.6" fill="#eef0f2" font-weight="bold" text-anchor="middle">-10</text>
<rect x="1211.87" y="715.5" width="1" height="5" fill="#5d646a"/>
<text transform="translate(1229.1,721.5) scale(0.8,1)" x="0" y="0" font-size="8.6" fill="#eef0f2" font-weight="bold" text-anchor="middle">0</text>
</svg></body></html>
